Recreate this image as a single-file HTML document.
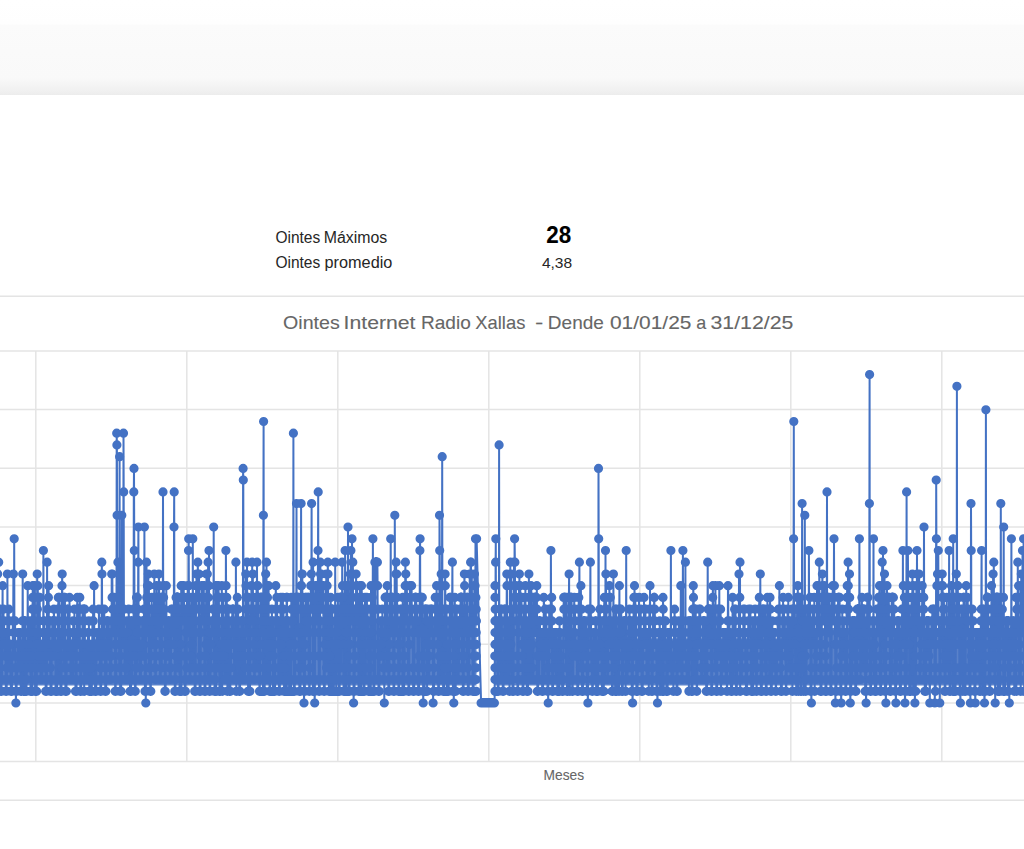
<!DOCTYPE html>
<html><head><meta charset="utf-8"><style>
html,body{margin:0;padding:0;background:#fff;width:1024px;height:849px;overflow:hidden}
svg{display:block}
text{font-family:"Liberation Sans",sans-serif}
</style></head><body>
<svg width="1024" height="849" viewBox="0 0 1024 849">
<defs><linearGradient id="hg" x1="0" y1="0" x2="0" y2="1">
<stop offset="0" stop-color="#ffffff"/><stop offset="0.25" stop-color="#fefefe"/><stop offset="0.27" stop-color="#fbfbfb"/><stop offset="0.82" stop-color="#f9f9f9"/><stop offset="0.97" stop-color="#efefef"/><stop offset="1" stop-color="#ececec"/>
</linearGradient></defs>
<rect x="0" y="0" width="1024" height="95" fill="url(#hg)"/>
<text x="275.4" y="242.8" font-size="15.6" font-weight="normal" fill="#262626" textLength="44.87" lengthAdjust="spacingAndGlyphs">Ointes</text><text x="323.78" y="242.8" font-size="15.6" font-weight="normal" fill="#262626" textLength="63.52" lengthAdjust="spacingAndGlyphs">Máximos</text><text x="275.4" y="268.4" font-size="15.6" font-weight="normal" fill="#262626" textLength="44.87" lengthAdjust="spacingAndGlyphs">Ointes</text><text x="324.56" y="268.4" font-size="15.6" font-weight="normal" fill="#262626" textLength="67.8" lengthAdjust="spacingAndGlyphs">promedio</text><text x="546.29" y="242.7" font-size="24.6" font-weight="bold" fill="#000000" stroke="#000000" stroke-width="0.1" textLength="24.94" lengthAdjust="spacingAndGlyphs">28</text><text x="541.9" y="267.9" font-size="15.5" font-weight="normal" fill="#262626" textLength="30.24" lengthAdjust="spacingAndGlyphs">4,38</text>
<g stroke="#e4e4e4" stroke-width="1.5" fill="none">
<line x1="0" y1="296.3" x2="1024" y2="296.3"/><line x1="0" y1="800.2" x2="1024" y2="800.2"/>
<line x1="0" y1="351.0" x2="1024" y2="351.0"/><line x1="0" y1="409.6" x2="1024" y2="409.6"/><line x1="0" y1="468.3" x2="1024" y2="468.3"/><line x1="0" y1="527.0" x2="1024" y2="527.0"/><line x1="0" y1="585.6" x2="1024" y2="585.6"/><line x1="0" y1="644.2" x2="1024" y2="644.2"/><line x1="0" y1="702.9" x2="1024" y2="702.9"/><line x1="0" y1="761.5" x2="1024" y2="761.5"/><line x1="35.8" y1="351" x2="35.8" y2="761.6"/><line x1="186.8" y1="351" x2="186.8" y2="761.6"/><line x1="337.8" y1="351" x2="337.8" y2="761.6"/><line x1="488.8" y1="351" x2="488.8" y2="761.6"/><line x1="639.8" y1="351" x2="639.8" y2="761.6"/><line x1="790.8" y1="351" x2="790.8" y2="761.6"/><line x1="941.8" y1="351" x2="941.8" y2="761.6"/>
</g>
<text x="283.02" y="329.3" font-size="18.2" font-weight="normal" fill="#666666" stroke="#666666" stroke-width="0.1" textLength="56.7" lengthAdjust="spacingAndGlyphs">Ointes</text><text x="343.57" y="329.3" font-size="18.2" font-weight="normal" fill="#666666" stroke="#666666" stroke-width="0.1" textLength="71.93" lengthAdjust="spacingAndGlyphs">Internet</text><text x="420.95" y="329.3" font-size="18.2" font-weight="normal" fill="#666666" stroke="#666666" stroke-width="0.1" textLength="49.8" lengthAdjust="spacingAndGlyphs">Radio</text><text x="475.29" y="329.3" font-size="18.2" font-weight="normal" fill="#666666" stroke="#666666" stroke-width="0.1" textLength="50.06" lengthAdjust="spacingAndGlyphs">Xallas</text><text x="535.12" y="329.3" font-size="18.2" font-weight="normal" fill="#666666" stroke="#666666" stroke-width="0.1" textLength="8.34" lengthAdjust="spacingAndGlyphs">-</text><text x="547.86" y="329.3" font-size="18.2" font-weight="normal" fill="#666666" stroke="#666666" stroke-width="0.1" textLength="55.98" lengthAdjust="spacingAndGlyphs">Dende</text><text x="609.95" y="329.3" font-size="18.2" font-weight="normal" fill="#666666" stroke="#666666" stroke-width="0.1" textLength="81.47" lengthAdjust="spacingAndGlyphs">01/01/25</text><text x="696.31" y="329.3" font-size="18.2" font-weight="normal" fill="#666666" stroke="#666666" stroke-width="0.1" textLength="10.01" lengthAdjust="spacingAndGlyphs">a</text><text x="710.53" y="329.3" font-size="18.2" font-weight="normal" fill="#666666" stroke="#666666" stroke-width="0.1" textLength="82.8" lengthAdjust="spacingAndGlyphs">31/12/25</text><text x="543.56" y="779.7" font-size="14.6" font-weight="normal" fill="#666666" stroke="#666666" stroke-width="0.1" textLength="40.53" lengthAdjust="spacingAndGlyphs">Meses</text>
<g>
<polygon fill="#5a82ca" points="-5.0,639.7 -1.0,639.7 3.0,639.7 7.0,639.7 11.0,639.7 15.0,639.7 19.0,639.7 23.0,639.7 27.0,639.7 31.0,639.7 35.0,639.7 39.0,639.7 43.0,639.7 47.0,639.7 51.0,639.7 55.0,639.7 59.0,639.7 63.0,639.7 67.0,639.7 71.0,639.7 75.0,639.7 79.0,639.7 83.0,639.7 87.0,639.7 91.0,639.7 95.0,639.7 99.0,635.3 103.0,630.9 107.0,626.5 111.0,623.2 115.0,623.2 119.0,623.2 123.0,623.2 127.0,623.2 131.0,623.2 135.0,623.2 139.0,623.2 143.0,623.2 147.0,623.2 151.0,623.2 155.0,623.2 159.0,623.2 163.0,623.2 167.0,623.2 171.0,623.2 175.0,623.2 179.0,623.2 183.0,623.2 187.0,623.2 191.0,623.2 195.0,623.2 199.0,623.2 203.0,623.2 207.0,623.2 211.0,623.2 215.0,623.2 219.0,623.2 223.0,623.2 227.0,623.2 231.0,623.2 235.0,623.2 239.0,623.2 243.0,623.2 247.0,623.2 251.0,623.2 255.0,623.2 259.0,623.2 263.0,623.2 267.0,623.2 271.0,623.2 275.0,623.2 279.0,623.2 283.0,623.2 287.0,623.2 291.0,623.2 295.0,623.2 299.0,623.2 303.0,621.8 307.0,620.0 311.0,618.5 315.0,618.5 319.0,618.5 323.0,618.5 327.0,618.5 331.0,618.5 335.0,618.5 339.0,618.5 343.0,618.5 347.0,618.5 351.0,618.5 355.0,618.5 359.0,618.5 363.0,618.5 367.0,618.5 371.0,618.5 375.0,618.5 379.0,618.5 383.0,618.5 387.0,618.5 391.0,618.5 395.0,618.5 399.0,618.5 403.0,618.5 407.0,618.5 411.0,618.5 415.0,618.5 419.0,620.4 423.0,622.3 427.0,623.2 431.0,623.2 435.0,623.2 439.0,623.2 443.0,623.2 447.0,623.2 451.0,623.2 455.0,623.2 459.0,623.2 463.0,623.2 467.0,623.2 471.0,623.2 475.0,623.2 476.5,623.2 476.5,685.4 -5.0,685.4"/><polygon fill="#5a82ca" points="495.0,620.9 499.0,620.9 503.0,620.9 507.0,620.9 511.0,620.9 515.0,620.9 519.0,620.9 523.0,620.9 527.0,620.9 531.0,628.4 535.0,638.5 539.0,638.5 543.0,638.5 547.0,638.5 551.0,638.5 555.0,638.5 559.0,636.5 563.0,633.9 567.0,632.6 571.0,632.6 575.0,632.6 579.0,632.6 583.0,632.6 587.0,632.6 591.0,632.6 595.0,632.6 599.0,632.6 603.0,632.6 607.0,632.6 611.0,632.6 615.0,632.6 619.0,635.0 623.0,637.3 627.0,638.5 631.0,638.5 635.0,638.5 639.0,638.5 643.0,638.5 647.0,638.5 651.0,638.5 655.0,638.5 659.0,638.5 663.0,638.5 667.0,638.5 671.0,638.5 675.0,638.5 679.0,638.5 683.0,638.5 687.0,638.5 691.0,638.5 695.0,638.5 699.0,638.5 703.0,638.5 707.0,638.5 711.0,638.5 715.0,638.5 719.0,638.5 723.0,638.5 727.0,638.5 731.0,638.5 735.0,638.5 739.0,638.5 743.0,638.5 747.0,638.5 751.0,638.5 755.0,638.5 759.0,638.5 763.0,638.5 767.0,638.5 771.0,638.5 775.0,638.5 779.0,638.5 783.0,638.5 787.0,638.5 791.0,634.0 795.0,627.9 799.0,627.9 803.0,627.9 807.0,627.9 811.0,627.9 815.0,627.9 819.0,627.9 823.0,627.9 827.0,627.9 831.0,627.9 835.0,627.9 839.0,627.9 843.0,627.9 847.0,627.9 851.0,627.9 855.0,627.9 859.0,627.9 863.0,627.9 867.0,627.9 871.0,627.9 875.0,627.9 879.0,627.9 883.0,627.9 887.0,627.9 891.0,627.9 895.0,627.9 899.0,627.9 903.0,627.9 907.0,627.9 911.0,627.9 915.0,627.9 919.0,627.9 923.0,627.9 927.0,627.9 931.0,627.9 935.0,627.9 939.0,627.9 943.0,627.9 947.0,627.9 951.0,627.9 955.0,627.9 959.0,627.9 963.0,627.9 967.0,627.9 971.0,627.9 975.0,627.9 979.0,627.9 983.0,627.9 987.0,627.9 991.0,627.9 995.0,627.9 999.0,627.9 1003.0,627.9 1007.0,627.9 1011.0,627.9 1015.0,627.9 1019.0,627.9 1023.0,627.9 1027.0,627.9 1030.0,627.9 1030.0,685.4 495.0,685.4"/>
<polyline fill="none" stroke="#4472c4" stroke-width="2.0" stroke-linejoin="round" points="-4.0,691.3 -3.8,691.3 -3.6,691.3 -3.4,691.3 -3.2,691.3 -3.0,656.1 -2.8,644.4 -2.6,632.6 -2.3,574.0 -2.1,644.4 -1.9,620.9 -1.7,632.6 -1.5,644.4 -1.3,562.2 -1.1,609.2 -0.9,620.9 -0.7,620.9 -0.5,620.9 -0.3,609.2 -0.1,667.8 0.1,609.2 0.3,609.2 0.6,632.6 0.8,656.1 1.0,691.3 1.2,679.5 1.4,691.3 1.6,679.5 1.8,679.5 2.0,679.5 2.2,644.4 2.4,620.9 2.6,585.7 2.8,644.4 3.0,644.4 3.2,644.4 3.5,609.2 3.7,632.6 3.9,632.6 4.1,620.9 4.3,644.4 4.5,656.1 4.7,632.6 4.9,632.6 5.1,644.4 5.3,656.1 5.5,632.6 5.7,679.5 5.9,691.3 6.1,691.3 6.3,691.3 6.6,691.3 6.8,679.5 7.0,667.8 7.2,667.8 7.4,574.0 7.6,632.6 7.8,644.4 8.0,644.4 8.2,667.8 8.4,620.9 8.6,644.4 8.8,609.2 9.0,667.8 9.2,620.9 9.5,667.8 9.7,644.4 9.9,656.1 10.1,644.4 10.3,656.1 10.5,667.8 10.7,679.5 10.9,691.3 11.1,691.3 11.3,691.3 11.5,691.3 11.7,691.3 11.9,691.3 12.1,667.8 12.4,656.1 12.6,656.1 12.8,620.9 13.0,620.9 13.2,620.9 13.4,574.0 13.6,620.9 13.8,656.1 14.0,632.6 14.2,538.8 14.4,620.9 14.6,632.6 14.8,656.1 15.0,620.9 15.2,632.6 15.5,667.8 15.7,667.8 15.9,703.0 16.1,691.3 16.3,679.5 16.5,691.3 16.7,679.5 16.9,679.5 17.1,679.5 17.3,667.8 17.5,667.8 17.7,656.1 17.9,667.8 18.1,632.6 18.4,667.8 18.6,667.8 18.8,667.8 19.0,656.1 19.2,632.6 19.4,644.4 19.6,656.1 19.8,667.8 20.0,656.1 20.2,632.6 20.4,656.1 20.6,679.5 20.8,691.3 21.0,679.5 21.2,679.5 21.5,691.3 21.7,679.5 21.9,679.5 22.1,644.4 22.3,644.4 22.5,620.9 22.7,574.0 22.9,632.6 23.1,656.1 23.3,620.9 23.5,691.3 23.7,644.4 23.9,644.4 24.1,620.9 24.4,632.6 24.6,620.9 24.8,656.1 25.0,691.3 25.2,620.9 25.4,632.6 25.6,667.8 25.8,691.3 26.0,691.3 26.2,679.5 26.4,691.3 26.6,679.5 26.8,667.8 27.0,656.1 27.3,667.8 27.5,656.1 27.7,585.7 27.9,620.9 28.1,620.9 28.3,632.6 28.5,632.6 28.7,656.1 28.9,656.1 29.1,667.8 29.3,667.8 29.5,632.6 29.7,644.4 29.9,667.8 30.1,620.9 30.4,656.1 30.6,691.3 30.8,691.3 31.0,691.3 31.2,691.3 31.4,691.3 31.6,691.3 31.8,656.1 32.0,620.9 32.2,609.2 32.4,691.3 32.6,597.4 32.8,585.7 33.0,609.2 33.3,585.7 33.5,585.7 33.7,597.4 33.9,585.7 34.1,609.2 34.3,620.9 34.5,667.8 34.7,597.4 34.9,585.7 35.1,691.3 35.3,632.6 35.5,679.5 35.7,691.3 35.9,691.3 36.2,679.5 36.4,679.5 36.6,691.3 36.8,679.5 37.0,644.4 37.2,574.0 37.4,609.2 37.6,644.4 37.8,585.7 38.0,632.6 38.2,656.1 38.4,632.6 38.6,597.4 38.8,667.8 39.0,620.9 39.3,632.6 39.5,632.6 39.7,597.4 39.9,632.6 40.1,644.4 40.3,644.4 40.5,679.5 40.7,679.5 40.9,679.5 41.1,667.8 41.3,679.5 41.5,667.8 41.7,656.1 41.9,656.1 42.2,644.4 42.4,679.5 42.6,656.1 42.8,632.6 43.0,656.1 43.2,644.4 43.4,550.5 43.6,632.6 43.8,620.9 44.0,620.9 44.2,667.8 44.4,620.9 44.6,632.6 44.8,644.4 45.1,632.6 45.3,644.4 45.5,667.8 45.7,691.3 45.9,691.3 46.1,691.3 46.3,691.3 46.5,691.3 46.7,656.1 46.9,679.5 47.1,562.2 47.3,644.4 47.5,656.1 47.7,609.2 47.9,632.6 48.2,632.6 48.4,597.4 48.6,585.7 48.8,620.9 49.0,632.6 49.2,656.1 49.4,620.9 49.6,656.1 49.8,620.9 50.0,656.1 50.2,667.8 50.4,667.8 50.6,691.3 50.8,691.3 51.1,691.3 51.3,679.5 51.5,691.3 51.7,656.1 51.9,656.1 52.1,632.6 52.3,620.9 52.5,656.1 52.7,644.4 52.9,644.4 53.1,620.9 53.3,644.4 53.5,632.6 53.7,620.9 53.9,609.2 54.2,620.9 54.4,656.1 54.6,632.6 54.8,632.6 55.0,620.9 55.2,644.4 55.4,644.4 55.6,691.3 55.8,691.3 56.0,691.3 56.2,679.5 56.4,691.3 56.6,679.5 56.8,644.4 57.1,691.3 57.3,632.6 57.5,632.6 57.7,620.9 57.9,609.2 58.1,632.6 58.3,597.4 58.5,609.2 58.7,679.5 58.9,644.4 59.1,644.4 59.3,609.2 59.5,597.4 59.7,632.6 60.0,632.6 60.2,644.4 60.4,679.5 60.6,691.3 60.8,691.3 61.0,679.5 61.2,679.5 61.4,691.3 61.6,667.8 61.8,656.1 62.0,585.7 62.2,574.0 62.4,620.9 62.6,632.6 62.8,644.4 63.1,632.6 63.3,644.4 63.5,632.6 63.7,644.4 63.9,597.4 64.1,667.8 64.3,632.6 64.5,656.1 64.7,656.1 64.9,597.4 65.1,620.9 65.3,679.5 65.5,691.3 65.7,691.3 66.0,691.3 66.2,679.5 66.4,691.3 66.6,667.8 66.8,644.4 67.0,644.4 67.2,656.1 67.4,644.4 67.6,609.2 67.8,609.2 68.0,609.2 68.2,644.4 68.4,656.1 68.6,656.1 68.9,644.4 69.1,644.4 69.3,644.4 69.5,597.4 69.7,632.6 69.9,632.6 70.1,644.4 70.3,656.1 70.5,667.8 70.7,679.5 70.9,679.5 71.1,679.5 71.3,667.8 71.5,667.8 71.7,644.4 72.0,656.1 72.2,644.4 72.4,644.4 72.6,632.6 72.8,656.1 73.0,679.5 73.2,620.9 73.4,644.4 73.6,656.1 73.8,656.1 74.0,632.6 74.2,644.4 74.4,609.2 74.6,632.6 74.9,632.6 75.1,644.4 75.3,667.8 75.5,691.3 75.7,691.3 75.9,679.5 76.1,691.3 76.3,679.5 76.5,691.3 76.7,656.1 76.9,632.6 77.1,609.2 77.3,597.4 77.5,609.2 77.8,620.9 78.0,620.9 78.2,644.4 78.4,609.2 78.6,620.9 78.8,632.6 79.0,609.2 79.2,644.4 79.4,632.6 79.6,609.2 79.8,597.4 80.0,656.1 80.2,667.8 80.4,691.3 80.6,691.3 80.9,691.3 81.1,691.3 81.3,679.5 81.5,667.8 81.7,656.1 81.9,644.4 82.1,667.8 82.3,644.4 82.5,609.2 82.7,632.6 82.9,620.9 83.1,620.9 83.3,620.9 83.5,609.2 83.8,620.9 84.0,632.6 84.2,691.3 84.4,609.2 84.6,620.9 84.8,609.2 85.0,656.1 85.2,679.5 85.4,667.8 85.6,667.8 85.8,679.5 86.0,679.5 86.2,679.5 86.4,667.8 86.6,644.4 86.9,667.8 87.1,667.8 87.3,644.4 87.5,644.4 87.7,656.1 87.9,632.6 88.1,667.8 88.3,679.5 88.5,632.6 88.7,656.1 88.9,620.9 89.1,656.1 89.3,691.3 89.5,691.3 89.8,644.4 90.0,644.4 90.2,656.1 90.4,691.3 90.6,691.3 90.8,691.3 91.0,691.3 91.2,691.3 91.4,667.8 91.6,656.1 91.8,691.3 92.0,656.1 92.2,644.4 92.4,620.9 92.7,620.9 92.9,679.5 93.1,609.2 93.3,620.9 93.5,644.4 93.7,644.4 93.9,632.6 94.1,585.7 94.3,632.6 94.5,632.6 94.7,644.4 94.9,656.1 95.1,691.3 95.3,679.5 95.5,679.5 95.8,679.5 96.0,691.3 96.2,691.3 96.4,656.1 96.6,656.1 96.8,656.1 97.0,632.6 97.2,656.1 97.4,644.4 97.6,644.4 97.8,644.4 98.0,656.1 98.2,656.1 98.4,644.4 98.7,656.1 98.9,609.2 99.1,609.2 99.3,644.4 99.5,656.1 99.7,632.6 99.9,656.1 100.1,667.8 100.3,679.5 100.5,691.3 100.7,691.3 100.9,691.3 101.1,691.3 101.3,667.8 101.6,667.8 101.8,562.2 102.0,574.0 102.2,656.1 102.4,609.2 102.6,644.4 102.8,620.9 103.0,620.9 103.2,632.6 103.4,644.4 103.6,632.6 103.8,656.1 104.0,656.1 104.2,609.2 104.4,620.9 104.7,656.1 104.9,656.1 105.1,667.8 105.3,691.3 105.5,691.3 105.7,679.5 105.9,691.3 106.1,691.3 106.3,679.5 106.5,667.8 106.7,620.9 106.9,644.4 107.1,632.6 107.3,620.9 107.6,644.4 107.8,644.4 108.0,632.6 108.2,620.9 108.4,644.4 108.6,656.1 108.8,644.4 109.0,632.6 109.2,632.6 109.4,632.6 109.6,644.4 109.8,656.1 110.0,679.5 110.2,667.8 110.5,679.5 110.7,679.5 110.9,667.8 111.1,667.8 111.3,656.1 111.5,656.1 111.7,574.0 111.9,620.9 112.1,597.4 112.3,574.0 112.5,597.4 112.7,609.2 112.9,632.6 113.1,620.9 113.3,632.6 113.6,620.9 113.8,620.9 114.0,620.9 114.2,597.4 114.4,632.6 114.6,609.2 114.8,632.6 115.0,644.4 115.2,691.3 115.4,691.3 115.6,691.3 115.8,679.5 116.0,679.5 116.2,679.5 116.5,609.2 116.7,433.2 116.9,444.9 117.1,515.3 117.3,632.6 117.5,609.2 117.7,632.6 117.9,562.2 118.1,632.6 118.3,620.9 118.5,597.4 118.7,620.9 118.9,620.9 119.1,644.4 119.3,667.8 119.6,456.7 119.8,644.4 120.0,656.1 120.2,691.3 120.4,691.3 120.6,691.3 120.8,679.5 121.0,691.3 121.2,691.3 121.4,632.6 121.6,632.6 121.8,515.3 122.0,644.4 122.2,620.9 122.5,644.4 122.7,644.4 122.9,632.6 123.1,644.4 123.3,609.2 123.5,433.2 123.7,491.9 123.9,609.2 124.1,620.9 124.3,644.4 124.5,667.8 124.7,632.6 124.9,667.8 125.1,679.5 125.4,679.5 125.6,667.8 125.8,679.5 126.0,667.8 126.2,667.8 126.4,667.8 126.6,632.6 126.8,656.1 127.0,620.9 127.2,632.6 127.4,644.4 127.6,632.6 127.8,644.4 128.0,656.1 128.2,679.5 128.5,644.4 128.7,609.2 128.9,620.9 129.1,620.9 129.3,656.1 129.5,620.9 129.7,656.1 129.9,679.5 130.1,691.3 130.3,679.5 130.5,679.5 130.7,691.3 130.9,691.3 131.1,679.5 131.4,644.4 131.6,620.9 131.8,620.9 132.0,656.1 132.2,656.1 132.4,679.5 132.6,644.4 132.8,644.4 133.0,644.4 133.2,656.1 133.4,656.1 133.6,609.2 133.8,491.9 134.0,468.4 134.3,550.5 134.5,620.9 134.7,656.1 134.9,644.4 135.1,691.3 135.3,691.3 135.5,691.3 135.7,679.5 135.9,679.5 136.1,667.8 136.3,644.4 136.5,597.4 136.7,597.4 136.9,632.6 137.1,597.4 137.4,597.4 137.6,667.8 137.8,609.2 138.0,632.6 138.2,562.2 138.4,527.0 138.6,620.9 138.8,632.6 139.0,620.9 139.2,632.6 139.4,620.9 139.6,644.4 139.8,656.1 140.0,679.5 140.3,667.8 140.5,667.8 140.7,667.8 140.9,679.5 141.1,656.1 141.3,644.4 141.5,644.4 141.7,656.1 141.9,656.1 142.1,656.1 142.3,632.6 142.5,620.9 142.7,644.4 142.9,632.6 143.2,620.9 143.4,632.6 143.6,632.6 143.8,620.9 144.0,609.2 144.2,656.1 144.4,527.0 144.6,632.6 144.8,679.5 145.0,691.3 145.2,679.5 145.4,691.3 145.6,679.5 145.8,703.0 146.0,632.6 146.3,620.9 146.5,562.2 146.7,597.4 146.9,632.6 147.1,632.6 147.3,597.4 147.5,585.7 147.7,585.7 147.9,609.2 148.1,620.9 148.3,574.0 148.5,597.4 148.7,667.8 148.9,585.7 149.2,632.6 149.4,609.2 149.6,632.6 149.8,667.8 150.0,679.5 150.2,679.5 150.4,691.3 150.6,691.3 150.8,691.3 151.0,644.4 151.2,656.1 151.4,644.4 151.6,597.4 151.8,632.6 152.0,632.6 152.3,632.6 152.5,632.6 152.7,609.2 152.9,620.9 153.1,632.6 153.3,609.2 153.5,644.4 153.7,632.6 153.9,597.4 154.1,644.4 154.3,574.0 154.5,667.8 154.7,644.4 154.9,667.8 155.2,667.8 155.4,679.5 155.6,679.5 155.8,679.5 156.0,656.1 156.2,644.4 156.4,597.4 156.6,585.7 156.8,609.2 157.0,597.4 157.2,620.9 157.4,620.9 157.6,632.6 157.8,597.4 158.1,620.9 158.3,620.9 158.5,632.6 158.7,632.6 158.9,574.0 159.1,585.7 159.3,597.4 159.5,632.6 159.7,656.1 159.9,679.5 160.1,679.5 160.3,679.5 160.5,679.5 160.7,679.5 160.9,644.4 161.2,609.2 161.4,597.4 161.6,620.9 161.8,667.8 162.0,597.4 162.2,609.2 162.4,597.4 162.6,609.2 162.8,609.2 163.0,491.9 163.2,585.7 163.4,620.9 163.6,597.4 163.8,585.7 164.1,620.9 164.3,609.2 164.5,620.9 164.7,632.6 164.9,691.3 165.1,679.5 165.3,691.3 165.5,691.3 165.7,679.5 165.9,656.1 166.1,656.1 166.3,585.7 166.5,632.6 166.7,656.1 167.0,632.6 167.2,656.1 167.4,656.1 167.6,656.1 167.8,620.9 168.0,656.1 168.2,644.4 168.4,632.6 168.6,620.9 168.8,656.1 169.0,656.1 169.2,620.9 169.4,667.8 169.6,667.8 169.8,679.5 170.1,679.5 170.3,679.5 170.5,679.5 170.7,679.5 170.9,667.8 171.1,632.6 171.3,620.9 171.5,609.2 171.7,620.9 171.9,632.6 172.1,620.9 172.3,609.2 172.5,632.6 172.7,609.2 173.0,620.9 173.2,620.9 173.4,620.9 173.6,644.4 173.8,644.4 174.0,527.0 174.2,491.9 174.4,632.6 174.6,632.6 174.8,691.3 175.0,691.3 175.2,679.5 175.4,691.3 175.6,679.5 175.9,656.1 176.1,597.4 176.3,609.2 176.5,620.9 176.7,597.4 176.9,597.4 177.1,620.9 177.3,632.6 177.5,597.4 177.7,609.2 177.9,667.8 178.1,597.4 178.3,597.4 178.5,609.2 178.7,597.4 179.0,609.2 179.2,620.9 179.4,656.1 179.6,691.3 179.8,691.3 180.0,691.3 180.2,691.3 180.4,691.3 180.6,691.3 180.8,656.1 181.0,644.4 181.2,585.7 181.4,691.3 181.6,597.4 181.9,585.7 182.1,609.2 182.3,585.7 182.5,597.4 182.7,585.7 182.9,620.9 183.1,620.9 183.3,620.9 183.5,597.4 183.7,585.7 183.9,609.2 184.1,597.4 184.3,620.9 184.5,656.1 184.8,691.3 185.0,691.3 185.2,679.5 185.4,691.3 185.6,679.5 185.8,679.5 186.0,632.6 186.2,609.2 186.4,620.9 186.6,632.6 186.8,667.8 187.0,597.4 187.2,632.6 187.4,609.2 187.6,609.2 187.9,585.7 188.1,632.6 188.3,632.6 188.5,550.5 188.7,538.8 188.9,585.7 189.1,609.2 189.3,620.9 189.5,656.1 189.7,679.5 189.9,667.8 190.1,679.5 190.3,679.5 190.5,667.8 190.8,656.1 191.0,632.6 191.2,597.4 191.4,644.4 191.6,620.9 191.8,609.2 192.0,609.2 192.2,644.4 192.4,632.6 192.6,667.8 192.8,538.8 193.0,620.9 193.2,632.6 193.4,632.6 193.6,609.2 193.9,632.6 194.1,597.4 194.3,632.6 194.5,632.6 194.7,691.3 194.9,691.3 195.1,691.3 195.3,679.5 195.5,691.3 195.7,667.8 195.9,632.6 196.1,585.7 196.3,609.2 196.5,574.0 196.8,597.4 197.0,597.4 197.2,585.7 197.4,585.7 197.6,597.4 197.8,562.2 198.0,574.0 198.2,574.0 198.4,597.4 198.6,585.7 198.8,667.8 199.0,574.0 199.2,620.9 199.4,667.8 199.7,691.3 199.9,679.5 200.1,691.3 200.3,691.3 200.5,691.3 200.7,656.1 200.9,632.6 201.1,620.9 201.3,609.2 201.5,585.7 201.7,585.7 201.9,609.2 202.1,597.4 202.3,620.9 202.5,620.9 202.8,597.4 203.0,585.7 203.2,609.2 203.4,585.7 203.6,585.7 203.8,585.7 204.0,609.2 204.2,620.9 204.4,667.8 204.6,691.3 204.8,679.5 205.0,679.5 205.2,691.3 205.4,691.3 205.7,656.1 205.9,644.4 206.1,597.4 206.3,609.2 206.5,574.0 206.7,574.0 206.9,620.9 207.1,609.2 207.3,574.0 207.5,585.7 207.7,597.4 207.9,679.5 208.1,562.2 208.3,597.4 208.6,585.7 208.8,585.7 209.0,550.5 209.2,632.6 209.4,644.4 209.6,691.3 209.8,691.3 210.0,679.5 210.2,691.3 210.4,679.5 210.6,667.8 210.8,632.6 211.0,644.4 211.2,667.8 211.4,632.6 211.7,632.6 211.9,620.9 212.1,620.9 212.3,632.6 212.5,632.6 212.7,620.9 212.9,609.2 213.1,632.6 213.3,609.2 213.5,609.2 213.7,527.0 213.9,632.6 214.1,667.8 214.3,656.1 214.6,691.3 214.8,691.3 215.0,679.5 215.2,691.3 215.4,691.3 215.6,656.1 215.8,620.9 216.0,585.7 216.2,691.3 216.4,609.2 216.6,585.7 216.8,597.4 217.0,597.4 217.2,609.2 217.5,667.8 217.7,597.4 217.9,585.7 218.1,609.2 218.3,620.9 218.5,585.7 218.7,597.4 218.9,597.4 219.1,632.6 219.3,667.8 219.5,691.3 219.7,691.3 219.9,691.3 220.1,691.3 220.3,691.3 220.6,656.1 220.8,644.4 221.0,644.4 221.2,644.4 221.4,644.4 221.6,632.6 221.8,585.7 222.0,609.2 222.2,691.3 222.4,644.4 222.6,609.2 222.8,609.2 223.0,632.6 223.2,597.4 223.5,620.9 223.7,620.9 223.9,644.4 224.1,656.1 224.3,656.1 224.5,679.5 224.7,679.5 224.9,679.5 225.1,667.8 225.3,679.5 225.5,667.8 225.7,644.4 225.9,550.5 226.1,585.7 226.3,609.2 226.6,620.9 226.8,597.4 227.0,679.5 227.2,632.6 227.4,691.3 227.6,609.2 227.8,609.2 228.0,644.4 228.2,620.9 228.4,644.4 228.6,609.2 228.8,620.9 229.0,644.4 229.2,667.8 229.5,691.3 229.7,679.5 229.9,691.3 230.1,691.3 230.3,691.3 230.5,667.8 230.7,632.6 230.9,667.8 231.1,644.4 231.3,644.4 231.5,632.6 231.7,644.4 231.9,620.9 232.1,620.9 232.4,609.2 232.6,620.9 232.8,620.9 233.0,609.2 233.2,620.9 233.4,609.2 233.6,620.9 233.8,632.6 234.0,644.4 234.2,679.5 234.4,679.5 234.6,679.5 234.8,679.5 235.0,679.5 235.2,679.5 235.5,644.4 235.7,656.1 235.9,562.2 236.1,632.6 236.3,691.3 236.5,644.4 236.7,679.5 236.9,609.2 237.1,656.1 237.3,597.4 237.5,644.4 237.7,656.1 237.9,632.6 238.1,609.2 238.4,644.4 238.6,620.9 238.8,679.5 239.0,656.1 239.2,679.5 239.4,691.3 239.6,691.3 239.8,691.3 240.0,691.3 240.2,679.5 240.4,679.5 240.6,644.4 240.8,632.6 241.0,644.4 241.3,632.6 241.5,620.9 241.7,632.6 241.9,620.9 242.1,620.9 242.3,679.5 242.5,656.1 242.7,632.6 242.9,620.9 243.1,468.4 243.3,480.1 243.5,632.6 243.7,644.4 243.9,656.1 244.1,679.5 244.4,679.5 244.6,679.5 244.8,679.5 245.0,667.8 245.2,679.5 245.4,632.6 245.6,644.4 245.8,574.0 246.0,585.7 246.2,632.6 246.4,597.4 246.6,609.2 246.8,609.2 247.0,562.2 247.3,609.2 247.5,609.2 247.7,597.4 247.9,609.2 248.1,691.3 248.3,597.4 248.5,597.4 248.7,609.2 248.9,656.1 249.1,644.4 249.3,679.5 249.5,679.5 249.7,691.3 249.9,691.3 250.2,679.5 250.4,656.1 250.6,632.6 250.8,609.2 251.0,609.2 251.2,620.9 251.4,585.7 251.6,620.9 251.8,609.2 252.0,620.9 252.2,562.2 252.4,620.9 252.6,609.2 252.8,574.0 253.0,597.4 253.3,667.8 253.5,597.4 253.7,620.9 253.9,644.4 254.1,667.8 254.3,679.5 254.5,679.5 254.7,679.5 254.9,667.8 255.1,667.8 255.3,667.8 255.5,632.6 255.7,609.2 255.9,667.8 256.2,597.4 256.4,597.4 256.6,585.7 256.8,597.4 257.0,562.2 257.2,609.2 257.4,667.8 257.6,597.4 257.8,585.7 258.0,609.2 258.2,597.4 258.4,597.4 258.6,667.8 258.8,656.1 259.0,656.1 259.3,679.5 259.5,691.3 259.7,691.3 259.9,679.5 260.1,679.5 260.3,656.1 260.5,644.4 260.7,597.4 260.9,597.4 261.1,597.4 261.3,609.2 261.5,609.2 261.7,597.4 261.9,632.6 262.2,620.9 262.4,620.9 262.6,620.9 262.8,597.4 263.0,691.3 263.2,609.2 263.4,515.3 263.6,421.5 263.8,632.6 264.0,667.8 264.2,679.5 264.4,691.3 264.6,691.3 264.8,679.5 265.1,679.5 265.3,679.5 265.5,644.4 265.7,574.0 265.9,597.4 266.1,620.9 266.3,597.4 266.5,562.2 266.7,679.5 266.9,585.7 267.1,597.4 267.3,632.6 267.5,597.4 267.7,609.2 267.9,585.7 268.2,679.5 268.4,632.6 268.6,585.7 268.8,644.4 269.0,667.8 269.2,679.5 269.4,679.5 269.6,691.3 269.8,691.3 270.0,691.3 270.2,632.6 270.4,656.1 270.6,632.6 270.8,620.9 271.1,620.9 271.3,656.1 271.5,620.9 271.7,632.6 271.9,609.2 272.1,644.4 272.3,620.9 272.5,644.4 272.7,644.4 272.9,691.3 273.1,620.9 273.3,656.1 273.5,632.6 273.7,632.6 274.0,679.5 274.2,691.3 274.4,679.5 274.6,691.3 274.8,691.3 275.0,691.3 275.2,667.8 275.4,620.9 275.6,620.9 275.8,585.7 276.0,609.2 276.2,620.9 276.4,620.9 276.6,620.9 276.8,597.4 277.1,597.4 277.3,632.6 277.5,620.9 277.7,620.9 277.9,620.9 278.1,620.9 278.3,679.5 278.5,620.9 278.7,644.4 278.9,667.8 279.1,691.3 279.3,691.3 279.5,679.5 279.7,691.3 280.0,679.5 280.2,667.8 280.4,644.4 280.6,609.2 280.8,597.4 281.0,609.2 281.2,632.6 281.4,644.4 281.6,632.6 281.8,644.4 282.0,679.5 282.2,620.9 282.4,620.9 282.6,620.9 282.9,597.4 283.1,632.6 283.3,632.6 283.5,609.2 283.7,656.1 283.9,667.8 284.1,691.3 284.3,691.3 284.5,679.5 284.7,691.3 284.9,691.3 285.1,667.8 285.3,632.6 285.5,620.9 285.7,632.6 286.0,632.6 286.2,620.9 286.4,620.9 286.6,597.4 286.8,691.3 287.0,597.4 287.2,620.9 287.4,620.9 287.6,632.6 287.8,632.6 288.0,632.6 288.2,620.9 288.4,679.5 288.6,632.6 288.9,656.1 289.1,691.3 289.3,679.5 289.5,691.3 289.7,691.3 289.9,691.3 290.1,644.4 290.3,656.1 290.5,632.6 290.7,632.6 290.9,632.6 291.1,691.3 291.3,597.4 291.5,609.2 291.7,620.9 292.0,644.4 292.2,620.9 292.4,620.9 292.6,609.2 292.8,632.6 293.0,620.9 293.2,632.6 293.4,433.2 293.6,656.1 293.8,679.5 294.0,691.3 294.2,691.3 294.4,691.3 294.6,691.3 294.9,679.5 295.1,679.5 295.3,644.4 295.5,597.4 295.7,609.2 295.9,632.6 296.1,597.4 296.3,609.2 296.5,503.6 296.7,632.6 296.9,597.4 297.1,597.4 297.3,632.6 297.5,632.6 297.8,609.2 298.0,597.4 298.2,632.6 298.4,597.4 298.6,656.1 298.8,667.8 299.0,679.5 299.2,679.5 299.4,691.3 299.6,691.3 299.8,679.5 300.0,656.1 300.2,632.6 300.4,691.3 300.6,609.2 300.9,585.7 301.1,503.6 301.3,667.8 301.5,585.7 301.7,585.7 301.9,574.0 302.1,609.2 302.3,574.0 302.5,667.8 302.7,609.2 302.9,597.4 303.1,609.2 303.3,609.2 303.5,609.2 303.8,644.4 304.0,703.0 304.2,691.3 304.4,679.5 304.6,691.3 304.8,691.3 305.0,656.1 305.2,644.4 305.4,597.4 305.6,609.2 305.8,620.9 306.0,632.6 306.2,597.4 306.4,620.9 306.7,632.6 306.9,620.9 307.1,609.2 307.3,609.2 307.5,609.2 307.7,609.2 307.9,609.2 308.1,597.4 308.3,597.4 308.5,632.6 308.7,656.1 308.9,679.5 309.1,679.5 309.3,691.3 309.5,691.3 309.8,679.5 310.0,667.8 310.2,620.9 310.4,609.2 310.6,609.2 310.8,585.7 311.0,585.7 311.2,609.2 311.4,574.0 311.6,503.6 311.8,609.2 312.0,585.7 312.2,585.7 312.4,597.4 312.7,585.7 312.9,691.3 313.1,562.2 313.3,597.4 313.5,632.6 313.7,656.1 313.9,691.3 314.1,691.3 314.3,691.3 314.5,691.3 314.7,703.0 314.9,679.5 315.1,620.9 315.3,597.4 315.6,585.7 315.8,620.9 316.0,597.4 316.2,585.7 316.4,620.9 316.6,620.9 316.8,597.4 317.0,609.2 317.2,585.7 317.4,609.2 317.6,620.9 317.8,585.7 318.0,550.5 318.2,491.9 318.4,632.6 318.7,656.1 318.9,679.5 319.1,691.3 319.3,691.3 319.5,679.5 319.7,691.3 319.9,656.1 320.1,620.9 320.3,562.2 320.5,574.0 320.7,597.4 320.9,609.2 321.1,585.7 321.3,574.0 321.6,574.0 321.8,609.2 322.0,585.7 322.2,609.2 322.4,597.4 322.6,585.7 322.8,597.4 323.0,609.2 323.2,585.7 323.4,632.6 323.6,656.1 323.8,679.5 324.0,691.3 324.2,679.5 324.4,691.3 324.7,691.3 324.9,644.4 325.1,644.4 325.3,609.2 325.5,609.2 325.7,585.7 325.9,609.2 326.1,609.2 326.3,574.0 326.5,667.8 326.7,574.0 326.9,620.9 327.1,585.7 327.3,597.4 327.6,597.4 327.8,562.2 328.0,574.0 328.2,609.2 328.4,632.6 328.6,679.5 328.8,679.5 329.0,691.3 329.2,691.3 329.4,691.3 329.6,679.5 329.8,667.8 330.0,656.1 330.2,609.2 330.5,620.9 330.7,597.4 330.9,620.9 331.1,632.6 331.3,644.4 331.5,691.3 331.7,609.2 331.9,667.8 332.1,609.2 332.3,609.2 332.5,644.4 332.7,644.4 332.9,632.6 333.1,691.3 333.3,667.8 333.6,679.5 333.8,691.3 334.0,679.5 334.2,679.5 334.4,679.5 334.6,679.5 334.8,679.5 335.0,644.4 335.2,562.2 335.4,620.9 335.6,632.6 335.8,632.6 336.0,620.9 336.2,691.3 336.5,632.6 336.7,632.6 336.9,609.2 337.1,632.6 337.3,644.4 337.5,644.4 337.7,667.8 337.9,597.4 338.1,620.9 338.3,644.4 338.5,667.8 338.7,679.5 338.9,691.3 339.1,679.5 339.4,691.3 339.6,691.3 339.8,667.8 340.0,620.9 340.2,597.4 340.4,609.2 340.6,597.4 340.8,597.4 341.0,620.9 341.2,667.8 341.4,609.2 341.6,620.9 341.8,620.9 342.0,620.9 342.2,562.2 342.5,585.7 342.7,597.4 342.9,597.4 343.1,609.2 343.3,644.4 343.5,679.5 343.7,691.3 343.9,691.3 344.1,691.3 344.3,691.3 344.5,691.3 344.7,667.8 344.9,620.9 345.1,550.5 345.4,632.6 345.6,620.9 345.8,632.6 346.0,691.3 346.2,632.6 346.4,691.3 346.6,632.6 346.8,585.7 347.0,609.2 347.2,620.9 347.4,632.6 347.6,609.2 347.8,609.2 348.0,527.0 348.3,644.4 348.5,656.1 348.7,691.3 348.9,691.3 349.1,691.3 349.3,679.5 349.5,691.3 349.7,667.8 349.9,644.4 350.1,609.2 350.3,574.0 350.5,574.0 350.7,585.7 350.9,550.5 351.1,585.7 351.4,620.9 351.6,609.2 351.8,620.9 352.0,538.8 352.2,574.0 352.4,620.9 352.6,597.4 352.8,562.2 353.0,574.0 353.2,632.6 353.4,632.6 353.6,703.0 353.8,691.3 354.0,679.5 354.3,691.3 354.5,691.3 354.7,667.8 354.9,656.1 355.1,609.2 355.3,609.2 355.5,609.2 355.7,609.2 355.9,632.6 356.1,574.0 356.3,609.2 356.5,585.7 356.7,620.9 356.9,620.9 357.1,585.7 357.4,609.2 357.6,609.2 357.8,597.4 358.0,620.9 358.2,632.6 358.4,667.8 358.6,691.3 358.8,691.3 359.0,679.5 359.2,691.3 359.4,691.3 359.6,644.4 359.8,609.2 360.0,585.7 360.3,620.9 360.5,585.7 360.7,585.7 360.9,620.9 361.1,609.2 361.3,691.3 361.5,585.7 361.7,585.7 361.9,609.2 362.1,597.4 362.3,609.2 362.5,620.9 362.7,620.9 362.9,609.2 363.2,620.9 363.4,679.5 363.6,679.5 363.8,691.3 364.0,691.3 364.2,691.3 364.4,691.3 364.6,667.8 364.8,644.4 365.0,597.4 365.2,609.2 365.4,667.8 365.6,632.6 365.8,679.5 366.0,609.2 366.3,620.9 366.5,620.9 366.7,620.9 366.9,597.4 367.1,620.9 367.3,609.2 367.5,609.2 367.7,620.9 367.9,620.9 368.1,644.4 368.3,667.8 368.5,691.3 368.7,691.3 368.9,691.3 369.2,679.5 369.4,691.3 369.6,656.1 369.8,656.1 370.0,632.6 370.2,667.8 370.4,609.2 370.6,644.4 370.8,691.3 371.0,585.7 371.2,597.4 371.4,632.6 371.6,620.9 371.8,644.4 372.1,609.2 372.3,597.4 372.5,620.9 372.7,597.4 372.9,538.8 373.1,644.4 373.3,656.1 373.5,691.3 373.7,691.3 373.9,691.3 374.1,679.5 374.3,691.3 374.5,644.4 374.7,609.2 374.9,562.2 375.2,679.5 375.4,585.7 375.6,562.2 375.8,585.7 376.0,562.2 376.2,562.2 376.4,585.7 376.6,562.2 376.8,562.2 377.0,585.7 377.2,585.7 377.4,562.2 377.6,585.7 377.8,679.5 378.1,609.2 378.3,644.4 378.5,691.3 378.7,691.3 378.9,691.3 379.1,679.5 379.3,691.3 379.5,679.5 379.7,644.4 379.9,644.4 380.1,644.4 380.3,656.1 380.5,632.6 380.7,620.9 381.0,632.6 381.2,656.1 381.4,656.1 381.6,644.4 381.8,620.9 382.0,620.9 382.2,632.6 382.4,609.2 382.6,632.6 382.8,632.6 383.0,632.6 383.2,667.8 383.4,667.8 383.6,679.5 383.8,679.5 384.1,667.8 384.3,703.0 384.5,667.8 384.7,632.6 384.9,620.9 385.1,597.4 385.3,597.4 385.5,620.9 385.7,632.6 385.9,597.4 386.1,609.2 386.3,620.9 386.5,620.9 386.7,667.8 387.0,597.4 387.2,585.7 387.4,609.2 387.6,609.2 387.8,632.6 388.0,632.6 388.2,656.1 388.4,691.3 388.6,691.3 388.8,679.5 389.0,679.5 389.2,691.3 389.4,667.8 389.6,644.4 389.9,597.4 390.1,597.4 390.3,620.9 390.5,632.6 390.7,538.8 390.9,597.4 391.1,609.2 391.3,620.9 391.5,632.6 391.7,609.2 391.9,632.6 392.1,597.4 392.3,597.4 392.5,620.9 392.7,620.9 393.0,620.9 393.2,656.1 393.4,679.5 393.6,691.3 393.8,679.5 394.0,679.5 394.2,691.3 394.4,667.8 394.6,632.6 394.8,515.3 395.0,609.2 395.2,632.6 395.4,597.4 395.6,620.9 395.9,574.0 396.1,562.2 396.3,609.2 396.5,597.4 396.7,574.0 396.9,632.6 397.1,597.4 397.3,632.6 397.5,609.2 397.7,620.9 397.9,632.6 398.1,644.4 398.3,679.5 398.5,691.3 398.7,679.5 399.0,691.3 399.2,679.5 399.4,656.1 399.6,644.4 399.8,667.8 400.0,620.9 400.2,620.9 400.4,632.6 400.6,609.2 400.8,620.9 401.0,632.6 401.2,620.9 401.4,609.2 401.6,620.9 401.9,620.9 402.1,632.6 402.3,620.9 402.5,691.3 402.7,597.4 402.9,620.9 403.1,679.5 403.3,691.3 403.5,691.3 403.7,691.3 403.9,691.3 404.1,691.3 404.3,656.1 404.5,667.8 404.8,597.4 405.0,620.9 405.2,585.7 405.4,562.2 405.6,620.9 405.8,574.0 406.0,597.4 406.2,609.2 406.4,597.4 406.6,620.9 406.8,585.7 407.0,597.4 407.2,597.4 407.4,620.9 407.6,632.6 407.9,620.9 408.1,679.5 408.3,679.5 408.5,691.3 408.7,691.3 408.9,679.5 409.1,691.3 409.3,644.4 409.5,609.2 409.7,620.9 409.9,585.7 410.1,620.9 410.3,597.4 410.5,597.4 410.8,585.7 411.0,585.7 411.2,620.9 411.4,620.9 411.6,585.7 411.8,609.2 412.0,609.2 412.2,620.9 412.4,620.9 412.6,620.9 412.8,632.6 413.0,667.8 413.2,691.3 413.4,679.5 413.7,691.3 413.9,691.3 414.1,691.3 414.3,679.5 414.5,620.9 414.7,609.2 414.9,620.9 415.1,597.4 415.3,620.9 415.5,597.4 415.7,597.4 415.9,620.9 416.1,609.2 416.3,597.4 416.5,632.6 416.8,632.6 417.0,609.2 417.2,620.9 417.4,620.9 417.6,667.8 417.8,632.6 418.0,667.8 418.2,691.3 418.4,679.5 418.6,691.3 418.8,691.3 419.0,691.3 419.2,656.1 419.4,632.6 419.7,597.4 419.9,550.5 420.1,538.8 420.3,609.2 420.5,609.2 420.7,597.4 420.9,632.6 421.1,632.6 421.3,597.4 421.5,597.4 421.7,667.8 421.9,609.2 422.1,632.6 422.3,597.4 422.6,597.4 422.8,632.6 423.0,667.8 423.2,703.0 423.4,691.3 423.6,679.5 423.8,679.5 424.0,691.3 424.2,656.1 424.4,632.6 424.6,691.3 424.8,609.2 425.0,632.6 425.2,632.6 425.4,609.2 425.7,644.4 425.9,644.4 426.1,632.6 426.3,609.2 426.5,644.4 426.7,620.9 426.9,632.6 427.1,691.3 427.3,620.9 427.5,609.2 427.7,656.1 427.9,667.8 428.1,679.5 428.3,667.8 428.6,679.5 428.8,679.5 429.0,679.5 429.2,656.1 429.4,620.9 429.6,644.4 429.8,632.6 430.0,609.2 430.2,609.2 430.4,620.9 430.6,620.9 430.8,632.6 431.0,620.9 431.2,620.9 431.4,609.2 431.7,620.9 431.9,609.2 432.1,620.9 432.3,632.6 432.5,632.6 432.7,644.4 432.9,632.6 433.1,703.0 433.3,679.5 433.5,679.5 433.7,691.3 433.9,691.3 434.1,667.8 434.3,632.6 434.6,620.9 434.8,632.6 435.0,632.6 435.2,597.4 435.4,632.6 435.6,609.2 435.8,620.9 436.0,620.9 436.2,609.2 436.4,620.9 436.6,585.7 436.8,609.2 437.0,632.6 437.2,597.4 437.5,620.9 437.7,632.6 437.9,644.4 438.1,679.5 438.3,691.3 438.5,691.3 438.7,679.5 438.9,691.3 439.1,656.1 439.3,632.6 439.5,515.3 439.7,550.5 439.9,585.7 440.1,609.2 440.3,620.9 440.6,620.9 440.8,620.9 441.0,679.5 441.2,574.0 441.4,620.9 441.6,609.2 441.8,585.7 442.0,585.7 442.2,456.7 442.4,609.2 442.6,632.6 442.8,656.1 443.0,679.5 443.2,691.3 443.5,691.3 443.7,679.5 443.9,691.3 444.1,679.5 444.3,667.8 444.5,609.2 444.7,656.1 444.9,656.1 445.1,574.0 445.3,585.7 445.5,632.6 445.7,609.2 445.9,620.9 446.1,656.1 446.4,679.5 446.6,609.2 446.8,691.3 447.0,656.1 447.2,644.4 447.4,656.1 447.6,644.4 447.8,667.8 448.0,679.5 448.2,691.3 448.4,691.3 448.6,691.3 448.8,679.5 449.0,656.1 449.2,644.4 449.5,620.9 449.7,620.9 449.9,597.4 450.1,679.5 450.3,632.6 450.5,609.2 450.7,597.4 450.9,620.9 451.1,609.2 451.3,620.9 451.5,620.9 451.7,609.2 451.9,632.6 452.1,609.2 452.4,562.2 452.6,632.6 452.8,667.8 453.0,691.3 453.2,691.3 453.4,679.5 453.6,679.5 453.8,703.0 454.0,656.1 454.2,644.4 454.4,620.9 454.6,620.9 454.8,597.4 455.0,620.9 455.3,620.9 455.5,632.6 455.7,691.3 455.9,620.9 456.1,609.2 456.3,632.6 456.5,667.8 456.7,609.2 456.9,632.6 457.1,644.4 457.3,620.9 457.5,620.9 457.7,667.8 457.9,679.5 458.1,679.5 458.4,679.5 458.6,679.5 458.8,667.8 459.0,667.8 459.2,620.9 459.4,620.9 459.6,620.9 459.8,620.9 460.0,609.2 460.2,632.6 460.4,620.9 460.6,597.4 460.8,597.4 461.0,609.2 461.3,597.4 461.5,597.4 461.7,609.2 461.9,667.8 462.1,597.4 462.3,620.9 462.5,644.4 462.7,656.1 462.9,691.3 463.1,679.5 463.3,679.5 463.5,691.3 463.7,679.5 463.9,656.1 464.1,632.6 464.4,574.0 464.6,585.7 464.8,609.2 465.0,609.2 465.2,632.6 465.4,620.9 465.6,609.2 465.8,609.2 466.0,609.2 466.2,609.2 466.4,632.6 466.6,667.8 466.8,620.9 467.0,597.4 467.3,597.4 467.5,632.6 467.7,667.8 467.9,691.3 468.1,691.3 468.3,691.3 468.5,691.3 468.7,691.3 468.9,679.5 469.1,644.4 469.3,632.6 469.5,632.6 469.7,574.0 469.9,632.6 470.2,620.9 470.4,620.9 470.6,562.2 470.8,632.6 471.0,562.2 471.2,632.6 471.4,632.6 471.6,632.6 471.8,574.0 472.0,597.4 472.2,609.2 472.4,632.6 472.6,644.4 472.8,691.3 473.0,679.5 473.3,679.5 473.5,691.3 473.7,679.5 473.9,656.1 474.1,620.9 474.3,585.7 474.5,574.0 474.7,620.9 474.9,609.2 475.1,585.7 475.3,609.2 475.5,538.8 475.7,609.2 475.9,597.4 476.2,609.2 476.4,620.9 476.6,538.8 481.1,703.0 481.3,703.0 481.5,703.0 481.7,703.0 481.9,703.0 482.2,703.0 482.4,703.0 482.6,703.0 482.8,703.0 483.0,703.0 483.2,703.0 483.4,703.0 483.6,703.0 483.8,703.0 484.0,703.0 484.2,703.0 484.4,703.0 484.6,703.0 484.8,703.0 485.1,703.0 485.3,703.0 485.5,703.0 485.7,703.0 485.9,703.0 486.1,703.0 486.3,703.0 486.5,703.0 486.7,703.0 486.9,703.0 487.1,703.0 487.3,703.0 487.5,703.0 487.7,703.0 488.0,703.0 488.2,703.0 488.4,703.0 488.6,703.0 488.8,703.0 489.0,703.0 489.2,703.0 489.4,703.0 489.6,703.0 489.8,703.0 490.0,703.0 490.2,703.0 490.4,703.0 490.6,703.0 490.8,703.0 491.1,703.0 491.3,703.0 491.5,703.0 491.7,703.0 491.9,703.0 492.1,703.0 492.3,703.0 492.5,703.0 492.7,703.0 492.9,703.0 493.1,703.0 493.3,703.0 493.5,703.0 493.7,703.0 494.0,703.0 494.2,703.0 494.4,703.0 494.6,703.0 494.8,656.1 495.0,656.1 495.2,609.2 495.4,644.4 495.6,562.2 495.8,538.8 496.0,656.1 496.2,620.9 496.4,620.9 496.6,620.9 496.8,632.6 497.1,620.9 497.3,644.4 497.5,667.8 497.7,679.5 497.9,691.3 498.1,679.5 498.3,691.3 498.5,691.3 498.7,667.8 498.9,667.8 499.1,444.9 499.3,632.6 499.5,644.4 499.7,620.9 500.0,644.4 500.2,644.4 500.4,656.1 500.6,609.2 500.8,632.6 501.0,679.5 501.2,644.4 501.4,609.2 501.6,644.4 501.8,620.9 502.0,679.5 502.2,679.5 502.4,656.1 502.6,679.5 502.9,691.3 503.1,691.3 503.3,691.3 503.5,691.3 503.7,667.8 503.9,667.8 504.1,644.4 504.3,667.8 504.5,609.2 504.7,609.2 504.9,609.2 505.1,632.6 505.3,679.5 505.5,620.9 505.7,644.4 506.0,609.2 506.2,620.9 506.4,644.4 506.6,620.9 506.8,574.0 507.0,585.7 507.2,656.1 507.4,679.5 507.6,667.8 507.8,679.5 508.0,667.8 508.2,679.5 508.4,667.8 508.6,656.1 508.9,632.6 509.1,620.9 509.3,632.6 509.5,691.3 509.7,644.4 509.9,574.0 510.1,620.9 510.3,562.2 510.5,632.6 510.7,609.2 510.9,644.4 511.1,667.8 511.3,574.0 511.5,632.6 511.8,679.5 512.0,609.2 512.2,656.1 512.4,632.6 512.6,691.3 512.8,691.3 513.0,691.3 513.2,691.3 513.4,691.3 513.6,667.8 513.8,609.2 514.0,562.2 514.2,585.7 514.4,597.4 514.6,538.8 514.9,562.2 515.1,597.4 515.3,597.4 515.5,609.2 515.7,597.4 515.9,585.7 516.1,609.2 516.3,620.9 516.5,597.4 516.7,609.2 516.9,620.9 517.1,620.9 517.3,656.1 517.5,691.3 517.8,691.3 518.0,691.3 518.2,679.5 518.4,679.5 518.6,667.8 518.8,632.6 519.0,585.7 519.2,609.2 519.4,574.0 519.6,620.9 519.8,597.4 520.0,585.7 520.2,585.7 520.4,597.4 520.7,609.2 520.9,597.4 521.1,609.2 521.3,609.2 521.5,597.4 521.7,620.9 521.9,620.9 522.1,644.4 522.3,656.1 522.5,679.5 522.7,691.3 522.9,679.5 523.1,679.5 523.3,691.3 523.5,667.8 523.8,644.4 524.0,609.2 524.2,632.6 524.4,620.9 524.6,597.4 524.8,620.9 525.0,620.9 525.2,679.5 525.4,585.7 525.6,620.9 525.8,609.2 526.0,620.9 526.2,632.6 526.4,632.6 526.7,620.9 526.9,691.3 527.1,644.4 527.3,667.8 527.5,691.3 527.7,679.5 527.9,691.3 528.1,679.5 528.3,679.5 528.5,667.8 528.7,644.4 528.9,574.0 529.1,632.6 529.3,597.4 529.5,597.4 529.8,620.9 530.0,597.4 530.2,597.4 530.4,679.5 530.6,609.2 530.8,597.4 531.0,585.7 531.2,585.7 531.4,597.4 531.6,620.9 531.8,597.4 532.0,644.4 532.2,667.8 532.4,679.5 532.7,679.5 532.9,679.5 533.1,679.5 533.3,679.5 533.5,679.5 533.7,632.6 533.9,597.4 534.1,632.6 534.3,620.9 534.5,632.6 534.7,632.6 534.9,632.6 535.1,597.4 535.3,620.9 535.6,597.4 535.8,609.2 536.0,632.6 536.2,597.4 536.4,597.4 536.6,679.5 536.8,585.7 537.0,609.2 537.2,656.1 537.4,691.3 537.6,691.3 537.8,691.3 538.0,691.3 538.2,679.5 538.4,679.5 538.7,656.1 538.9,620.9 539.1,656.1 539.3,679.5 539.5,656.1 539.7,620.9 539.9,620.9 540.1,632.6 540.3,644.4 540.5,644.4 540.7,632.6 540.9,644.4 541.1,644.4 541.3,656.1 541.6,656.1 541.8,632.6 542.0,644.4 542.2,691.3 542.4,691.3 542.6,679.5 542.8,691.3 543.0,691.3 543.2,679.5 543.4,656.1 543.6,632.6 543.8,597.4 544.0,597.4 544.2,632.6 544.5,620.9 544.7,679.5 544.9,620.9 545.1,609.2 545.3,609.2 545.5,644.4 545.7,609.2 545.9,620.9 546.1,632.6 546.3,644.4 546.5,620.9 546.7,644.4 546.9,656.1 547.1,667.8 547.3,679.5 547.6,691.3 547.8,691.3 548.0,691.3 548.2,703.0 548.4,667.8 548.6,632.6 548.8,644.4 549.0,644.4 549.2,609.2 549.4,679.5 549.6,632.6 549.8,632.6 550.0,632.6 550.2,620.9 550.5,609.2 550.7,644.4 550.9,550.5 551.1,609.2 551.3,632.6 551.5,609.2 551.7,597.4 551.9,620.9 552.1,667.8 552.3,691.3 552.5,679.5 552.7,679.5 552.9,691.3 553.1,679.5 553.4,679.5 553.6,667.8 553.8,632.6 554.0,667.8 554.2,656.1 554.4,644.4 554.6,644.4 554.8,656.1 555.0,632.6 555.2,632.6 555.4,632.6 555.6,632.6 555.8,656.1 556.0,679.5 556.2,644.4 556.5,667.8 556.7,632.6 556.9,656.1 557.1,656.1 557.3,691.3 557.5,691.3 557.7,691.3 557.9,691.3 558.1,691.3 558.3,679.5 558.5,679.5 558.7,691.3 558.9,632.6 559.1,632.6 559.4,691.3 559.6,620.9 559.8,679.5 560.0,644.4 560.2,632.6 560.4,656.1 560.6,656.1 560.8,679.5 561.0,644.4 561.2,656.1 561.4,667.8 561.6,667.8 561.8,679.5 562.0,667.8 562.2,691.3 562.5,679.5 562.7,679.5 562.9,691.3 563.1,691.3 563.3,679.5 563.5,644.4 563.7,597.4 563.9,609.2 564.1,609.2 564.3,609.2 564.5,597.4 564.7,597.4 564.9,597.4 565.1,632.6 565.4,609.2 565.6,609.2 565.8,609.2 566.0,667.8 566.2,620.9 566.4,597.4 566.6,632.6 566.8,632.6 567.0,691.3 567.2,691.3 567.4,691.3 567.6,691.3 567.8,691.3 568.0,691.3 568.3,667.8 568.5,644.4 568.7,597.4 568.9,597.4 569.1,574.0 569.3,632.6 569.5,620.9 569.7,609.2 569.9,691.3 570.1,632.6 570.3,597.4 570.5,609.2 570.7,679.5 570.9,597.4 571.1,632.6 571.4,679.5 571.6,597.4 571.8,632.6 572.0,632.6 572.2,691.3 572.4,679.5 572.6,691.3 572.8,679.5 573.0,679.5 573.2,679.5 573.4,656.1 573.6,644.4 573.8,644.4 574.0,609.2 574.3,597.4 574.5,644.4 574.7,632.6 574.9,609.2 575.1,620.9 575.3,656.1 575.5,644.4 575.7,644.4 575.9,644.4 576.1,644.4 576.3,644.4 576.5,644.4 576.7,656.1 576.9,679.5 577.2,679.5 577.4,691.3 577.6,691.3 577.8,679.5 578.0,691.3 578.2,679.5 578.4,656.1 578.6,609.2 578.8,597.4 579.0,644.4 579.2,597.4 579.4,562.2 579.6,620.9 579.8,644.4 580.0,644.4 580.3,644.4 580.5,667.8 580.7,620.9 580.9,585.7 581.1,644.4 581.3,632.6 581.5,609.2 581.7,632.6 581.9,644.4 582.1,691.3 582.3,691.3 582.5,691.3 582.7,679.5 582.9,691.3 583.2,667.8 583.4,644.4 583.6,620.9 583.8,632.6 584.0,620.9 584.2,656.1 584.4,644.4 584.6,620.9 584.8,632.6 585.0,656.1 585.2,656.1 585.4,644.4 585.6,656.1 585.8,644.4 586.1,620.9 586.3,644.4 586.5,632.6 586.7,667.8 586.9,691.3 587.1,691.3 587.3,691.3 587.5,691.3 587.7,691.3 587.9,703.0 588.1,667.8 588.3,656.1 588.5,609.2 588.7,620.9 588.9,620.9 589.2,620.9 589.4,620.9 589.6,620.9 589.8,632.6 590.0,609.2 590.2,609.2 590.4,562.2 590.6,644.4 590.8,609.2 591.0,620.9 591.2,644.4 591.4,667.8 591.6,644.4 591.8,656.1 592.1,679.5 592.3,691.3 592.5,679.5 592.7,691.3 592.9,679.5 593.1,679.5 593.3,656.1 593.5,632.6 593.7,656.1 593.9,632.6 594.1,656.1 594.3,656.1 594.5,644.4 594.7,632.6 595.0,632.6 595.2,679.5 595.4,620.9 595.6,620.9 595.8,656.1 596.0,620.9 596.2,691.3 596.4,644.4 596.6,667.8 596.8,656.1 597.0,691.3 597.2,691.3 597.4,691.3 597.6,691.3 597.8,691.3 598.1,679.5 598.3,644.4 598.5,468.4 598.7,538.8 598.9,656.1 599.1,620.9 599.3,656.1 599.5,644.4 599.7,620.9 599.9,609.2 600.1,644.4 600.3,632.6 600.5,632.6 600.7,632.6 601.0,620.9 601.2,632.6 601.4,656.1 601.6,667.8 601.8,656.1 602.0,691.3 602.2,691.3 602.4,679.5 602.6,691.3 602.8,679.5 603.0,679.5 603.2,620.9 603.4,632.6 603.6,620.9 603.8,691.3 604.1,620.9 604.3,597.4 604.5,620.9 604.7,597.4 604.9,632.6 605.1,609.2 605.3,679.5 605.5,550.5 605.7,667.8 605.9,574.0 606.1,597.4 606.3,632.6 606.5,609.2 606.7,656.1 607.0,667.8 607.2,667.8 607.4,667.8 607.6,679.5 607.8,679.5 608.0,667.8 608.2,644.4 608.4,620.9 608.6,644.4 608.8,644.4 609.0,620.9 609.2,632.6 609.4,585.7 609.6,620.9 609.9,597.4 610.1,644.4 610.3,597.4 610.5,597.4 610.7,632.6 610.9,632.6 611.1,656.1 611.3,620.9 611.5,656.1 611.7,656.1 611.9,679.5 612.1,691.3 612.3,679.5 612.5,679.5 612.7,691.3 613.0,656.1 613.2,656.1 613.4,574.0 613.6,632.6 613.8,644.4 614.0,620.9 614.2,667.8 614.4,632.6 614.6,656.1 614.8,620.9 615.0,679.5 615.2,691.3 615.4,644.4 615.6,609.2 615.9,656.1 616.1,609.2 616.3,679.5 616.5,656.1 616.7,679.5 616.9,691.3 617.1,679.5 617.3,679.5 617.5,679.5 617.7,679.5 617.9,679.5 618.1,632.6 618.3,620.9 618.5,644.4 618.8,609.2 619.0,691.3 619.2,632.6 619.4,585.7 619.6,644.4 619.8,632.6 620.0,632.6 620.2,632.6 620.4,620.9 620.6,609.2 620.8,609.2 621.0,632.6 621.2,609.2 621.4,632.6 621.6,656.1 621.9,691.3 622.1,679.5 622.3,679.5 622.5,691.3 622.7,691.3 622.9,679.5 623.1,667.8 623.3,620.9 623.5,644.4 623.7,644.4 623.9,656.1 624.1,644.4 624.3,644.4 624.5,620.9 624.8,620.9 625.0,644.4 625.2,620.9 625.4,620.9 625.6,691.3 625.8,620.9 626.0,644.4 626.2,550.5 626.4,667.8 626.6,679.5 626.8,667.8 627.0,667.8 627.2,667.8 627.4,679.5 627.7,667.8 627.9,644.4 628.1,644.4 628.3,644.4 628.5,620.9 628.7,656.1 628.9,620.9 629.1,667.8 629.3,620.9 629.5,609.2 629.7,620.9 629.9,656.1 630.1,656.1 630.3,620.9 630.5,656.1 630.8,644.4 631.0,632.6 631.2,620.9 631.4,656.1 631.6,667.8 631.8,691.3 632.0,679.5 632.2,691.3 632.4,691.3 632.6,703.0 632.8,679.5 633.0,656.1 633.2,620.9 633.4,620.9 633.7,609.2 633.9,597.4 634.1,632.6 634.3,656.1 634.5,585.7 634.7,632.6 634.9,644.4 635.1,644.4 635.3,597.4 635.5,632.6 635.7,644.4 635.9,609.2 636.1,644.4 636.3,679.5 636.5,691.3 636.8,691.3 637.0,691.3 637.2,691.3 637.4,691.3 637.6,691.3 637.8,667.8 638.0,656.1 638.2,656.1 638.4,644.4 638.6,620.9 638.8,667.8 639.0,597.4 639.2,667.8 639.4,656.1 639.7,656.1 639.9,656.1 640.1,656.1 640.3,632.6 640.5,620.9 640.7,609.2 640.9,656.1 641.1,632.6 641.3,656.1 641.5,667.8 641.7,691.3 641.9,691.3 642.1,691.3 642.3,691.3 642.6,691.3 642.8,679.5 643.0,656.1 643.2,632.6 643.4,632.6 643.6,632.6 643.8,632.6 644.0,597.4 644.2,644.4 644.4,620.9 644.6,620.9 644.8,632.6 645.0,632.6 645.2,609.2 645.4,609.2 645.7,632.6 645.9,644.4 646.1,632.6 646.3,632.6 646.5,656.1 646.7,679.5 646.9,679.5 647.1,679.5 647.3,679.5 647.5,679.5 647.7,667.8 647.9,632.6 648.1,679.5 648.3,632.6 648.6,644.4 648.8,691.3 649.0,620.9 649.2,632.6 649.4,609.2 649.6,644.4 649.8,656.1 650.0,585.7 650.2,620.9 650.4,656.1 650.6,632.6 650.8,644.4 651.0,656.1 651.2,644.4 651.5,679.5 651.7,691.3 651.9,691.3 652.1,691.3 652.3,691.3 652.5,691.3 652.7,667.8 652.9,656.1 653.1,609.2 653.3,644.4 653.5,644.4 653.7,620.9 653.9,644.4 654.1,597.4 654.3,597.4 654.6,620.9 654.8,609.2 655.0,632.6 655.2,632.6 655.4,632.6 655.6,632.6 655.8,644.4 656.0,644.4 656.2,644.4 656.4,656.1 656.6,691.3 656.8,691.3 657.0,679.5 657.2,691.3 657.5,703.0 657.7,656.1 657.9,679.5 658.1,679.5 658.3,644.4 658.5,632.6 658.7,667.8 658.9,656.1 659.1,667.8 659.3,632.6 659.5,644.4 659.7,620.9 659.9,632.6 660.1,691.3 660.4,667.8 660.6,632.6 660.8,656.1 661.0,632.6 661.2,667.8 661.4,667.8 661.6,679.5 661.8,679.5 662.0,691.3 662.2,679.5 662.4,679.5 662.6,667.8 662.8,691.3 663.0,597.4 663.2,609.2 663.5,632.6 663.7,691.3 663.9,632.6 664.1,644.4 664.3,644.4 664.5,656.1 664.7,620.9 664.9,644.4 665.1,644.4 665.3,632.6 665.5,620.9 665.7,632.6 665.9,656.1 666.1,644.4 666.4,691.3 666.6,691.3 666.8,691.3 667.0,691.3 667.2,679.5 667.4,691.3 667.6,691.3 667.8,667.8 668.0,632.6 668.2,667.8 668.4,656.1 668.6,656.1 668.8,644.4 669.0,632.6 669.2,656.1 669.5,656.1 669.7,644.4 669.9,644.4 670.1,667.8 670.3,656.1 670.5,667.8 670.7,632.6 670.9,550.5 671.1,667.8 671.3,667.8 671.5,679.5 671.7,679.5 671.9,679.5 672.1,679.5 672.4,679.5 672.6,667.8 672.8,656.1 673.0,656.1 673.2,656.1 673.4,691.3 673.6,656.1 673.8,656.1 674.0,620.9 674.2,667.8 674.4,620.9 674.6,609.2 674.8,632.6 675.0,644.4 675.3,644.4 675.5,656.1 675.7,620.9 675.9,656.1 676.1,644.4 676.3,656.1 676.5,679.5 676.7,691.3 676.9,691.3 677.1,679.5 677.3,691.3 677.5,679.5 677.7,667.8 677.9,656.1 678.1,632.6 678.4,632.6 678.6,644.4 678.8,620.9 679.0,644.4 679.2,632.6 679.4,667.8 679.6,644.4 679.8,644.4 680.0,644.4 680.2,656.1 680.4,644.4 680.6,656.1 680.8,585.7 681.0,667.8 681.3,667.8 681.5,679.5 681.7,679.5 681.9,679.5 682.1,679.5 682.3,667.8 682.5,679.5 682.7,632.6 682.9,550.5 683.1,620.9 683.3,632.6 683.5,644.4 683.7,656.1 683.9,632.6 684.2,656.1 684.4,632.6 684.6,644.4 684.8,632.6 685.0,632.6 685.2,656.1 685.4,562.2 685.6,656.1 685.8,656.1 686.0,667.8 686.2,667.8 686.4,667.8 686.6,667.8 686.8,679.5 687.0,667.8 687.3,667.8 687.5,679.5 687.7,656.1 687.9,679.5 688.1,644.4 688.3,620.9 688.5,644.4 688.7,656.1 688.9,691.3 689.1,620.9 689.3,632.6 689.5,644.4 689.7,656.1 689.9,656.1 690.2,656.1 690.4,632.6 690.6,620.9 690.8,620.9 691.0,632.6 691.2,656.1 691.4,691.3 691.6,691.3 691.8,691.3 692.0,691.3 692.2,691.3 692.4,691.3 692.6,656.1 692.8,609.2 693.1,609.2 693.3,585.7 693.5,597.4 693.7,597.4 693.9,632.6 694.1,632.6 694.3,632.6 694.5,679.5 694.7,609.2 694.9,609.2 695.1,609.2 695.3,632.6 695.5,620.9 695.7,609.2 695.9,632.6 696.2,644.4 696.4,679.5 696.6,679.5 696.8,691.3 697.0,691.3 697.2,679.5 697.4,656.1 697.6,656.1 697.8,620.9 698.0,632.6 698.2,632.6 698.4,620.9 698.6,644.4 698.8,632.6 699.1,644.4 699.3,609.2 699.5,632.6 699.7,632.6 699.9,620.9 700.1,609.2 700.3,620.9 700.5,644.4 700.7,644.4 700.9,644.4 701.1,667.8 701.3,679.5 701.5,679.5 701.7,679.5 701.9,667.8 702.2,679.5 702.4,679.5 702.6,656.1 702.8,620.9 703.0,656.1 703.2,656.1 703.4,632.6 703.6,620.9 703.8,644.4 704.0,644.4 704.2,620.9 704.4,644.4 704.6,656.1 704.8,679.5 705.1,644.4 705.3,656.1 705.5,656.1 705.7,620.9 705.9,644.4 706.1,679.5 706.3,691.3 706.5,691.3 706.7,679.5 706.9,691.3 707.1,679.5 707.3,667.8 707.5,632.6 707.7,562.2 708.0,644.4 708.2,609.2 708.4,609.2 708.6,609.2 708.8,609.2 709.0,644.4 709.2,632.6 709.4,632.6 709.6,632.6 709.8,632.6 710.0,609.2 710.2,632.6 710.4,609.2 710.6,609.2 710.8,656.1 711.1,656.1 711.3,691.3 711.5,691.3 711.7,691.3 711.9,691.3 712.1,691.3 712.3,644.4 712.5,644.4 712.7,597.4 712.9,585.7 713.1,620.9 713.3,632.6 713.5,620.9 713.7,620.9 714.0,609.2 714.2,609.2 714.4,632.6 714.6,667.8 714.8,620.9 715.0,609.2 715.2,609.2 715.4,585.7 715.6,620.9 715.8,609.2 716.0,667.8 716.2,679.5 716.4,691.3 716.6,691.3 716.9,691.3 717.1,691.3 717.3,656.1 717.5,656.1 717.7,632.6 717.9,644.4 718.1,609.2 718.3,609.2 718.5,632.6 718.7,656.1 718.9,632.6 719.1,620.9 719.3,585.7 719.5,656.1 719.7,632.6 720.0,620.9 720.2,656.1 720.4,656.1 720.6,609.2 720.8,644.4 721.0,691.3 721.2,679.5 721.4,667.8 721.6,667.8 721.8,679.5 722.0,667.8 722.2,667.8 722.4,644.4 722.6,667.8 722.9,667.8 723.1,632.6 723.3,644.4 723.5,632.6 723.7,656.1 723.9,656.1 724.1,632.6 724.3,667.8 724.5,667.8 724.7,632.6 724.9,667.8 725.1,644.4 725.3,632.6 725.5,632.6 725.8,679.5 726.0,656.1 726.2,679.5 726.4,679.5 726.6,679.5 726.8,679.5 727.0,691.3 727.2,667.8 727.4,644.4 727.6,632.6 727.8,620.9 728.0,585.7 728.2,585.7 728.4,644.4 728.6,632.6 728.9,632.6 729.1,656.1 729.3,632.6 729.5,620.9 729.7,656.1 729.9,656.1 730.1,679.5 730.3,632.6 730.5,632.6 730.7,667.8 730.9,679.5 731.1,691.3 731.3,679.5 731.5,691.3 731.8,679.5 732.0,691.3 732.2,656.1 732.4,644.4 732.6,597.4 732.8,644.4 733.0,632.6 733.2,644.4 733.4,644.4 733.6,632.6 733.8,679.5 734.0,632.6 734.2,644.4 734.4,632.6 734.6,609.2 734.9,632.6 735.1,620.9 735.3,632.6 735.5,609.2 735.7,632.6 735.9,667.8 736.1,691.3 736.3,691.3 736.5,691.3 736.7,691.3 736.9,679.5 737.1,679.5 737.3,656.1 737.5,656.1 737.8,656.1 738.0,644.4 738.2,632.6 738.4,644.4 738.6,632.6 738.8,632.6 739.0,574.0 739.2,644.4 739.4,656.1 739.6,656.1 739.8,597.4 740.0,562.2 740.2,691.3 740.4,644.4 740.7,656.1 740.9,679.5 741.1,667.8 741.3,679.5 741.5,679.5 741.7,679.5 741.9,667.8 742.1,656.1 742.3,644.4 742.5,632.6 742.7,644.4 742.9,632.6 743.1,644.4 743.3,632.6 743.5,609.2 743.8,620.9 744.0,632.6 744.2,632.6 744.4,632.6 744.6,609.2 744.8,644.4 745.0,644.4 745.2,632.6 745.4,667.8 745.6,656.1 745.8,667.8 746.0,691.3 746.2,679.5 746.4,679.5 746.7,691.3 746.9,691.3 747.1,667.8 747.3,656.1 747.5,644.4 747.7,632.6 747.9,632.6 748.1,632.6 748.3,620.9 748.5,644.4 748.7,632.6 748.9,609.2 749.1,632.6 749.3,620.9 749.6,632.6 749.8,632.6 750.0,620.9 750.2,620.9 750.4,609.2 750.6,632.6 750.8,656.1 751.0,679.5 751.2,679.5 751.4,691.3 751.6,679.5 751.8,691.3 752.0,679.5 752.2,656.1 752.4,644.4 752.7,620.9 752.9,644.4 753.1,691.3 753.3,644.4 753.5,632.6 753.7,632.6 753.9,644.4 754.1,620.9 754.3,667.8 754.5,656.1 754.7,632.6 754.9,656.1 755.1,609.2 755.3,620.9 755.6,667.8 755.8,656.1 756.0,679.5 756.2,679.5 756.4,679.5 756.6,691.3 756.8,679.5 757.0,667.8 757.2,632.6 757.4,644.4 757.6,620.9 757.8,644.4 758.0,644.4 758.2,644.4 758.5,632.6 758.7,620.9 758.9,632.6 759.1,609.2 759.3,597.4 759.5,632.6 759.7,609.2 759.9,644.4 760.1,632.6 760.3,574.0 760.5,632.6 760.7,679.5 760.9,691.3 761.1,679.5 761.3,691.3 761.6,679.5 761.8,691.3 762.0,656.1 762.2,632.6 762.4,609.2 762.6,609.2 762.8,620.9 763.0,609.2 763.2,609.2 763.4,632.6 763.6,632.6 763.8,609.2 764.0,609.2 764.2,632.6 764.5,667.8 764.7,644.4 764.9,644.4 765.1,609.2 765.3,620.9 765.5,656.1 765.7,667.8 765.9,691.3 766.1,691.3 766.3,691.3 766.5,691.3 766.7,679.5 766.9,656.1 767.1,644.4 767.4,597.4 767.6,620.9 767.8,644.4 768.0,620.9 768.2,620.9 768.4,609.2 768.6,609.2 768.8,620.9 769.0,632.6 769.2,679.5 769.4,609.2 769.6,632.6 769.8,620.9 770.0,597.4 770.2,609.2 770.5,632.6 770.7,656.1 770.9,691.3 771.1,691.3 771.3,691.3 771.5,679.5 771.7,691.3 771.9,679.5 772.1,656.1 772.3,620.9 772.5,656.1 772.7,644.4 772.9,632.6 773.1,667.8 773.4,656.1 773.6,656.1 773.8,644.4 774.0,667.8 774.2,644.4 774.4,632.6 774.6,656.1 774.8,632.6 775.0,656.1 775.2,644.4 775.4,679.5 775.6,656.1 775.8,691.3 776.0,691.3 776.2,679.5 776.5,679.5 776.7,679.5 776.9,667.8 777.1,644.4 777.3,644.4 777.5,656.1 777.7,620.9 777.9,656.1 778.1,644.4 778.3,644.4 778.5,609.2 778.7,656.1 778.9,632.6 779.1,644.4 779.4,585.7 779.6,632.6 779.8,609.2 780.0,656.1 780.2,656.1 780.4,667.8 780.6,679.5 780.8,679.5 781.0,691.3 781.2,691.3 781.4,679.5 781.6,691.3 781.8,691.3 782.0,644.4 782.3,620.9 782.5,632.6 782.7,609.2 782.9,644.4 783.1,597.4 783.3,632.6 783.5,609.2 783.7,632.6 783.9,609.2 784.1,620.9 784.3,620.9 784.5,644.4 784.7,620.9 784.9,620.9 785.1,656.1 785.4,632.6 785.6,679.5 785.8,679.5 786.0,691.3 786.2,691.3 786.4,679.5 786.6,679.5 786.8,656.1 787.0,656.1 787.2,620.9 787.4,632.6 787.6,609.2 787.8,656.1 788.0,644.4 788.3,597.4 788.5,656.1 788.7,644.4 788.9,667.8 789.1,620.9 789.3,632.6 789.5,656.1 789.7,632.6 789.9,620.9 790.1,620.9 790.3,644.4 790.5,679.5 790.7,679.5 790.9,679.5 791.2,679.5 791.4,679.5 791.6,679.5 791.8,667.8 792.0,632.6 792.2,609.2 792.4,691.3 792.6,620.9 792.8,667.8 793.0,620.9 793.2,609.2 793.4,609.2 793.6,538.8 793.8,421.5 794.0,609.2 794.3,644.4 794.5,644.4 794.7,609.2 794.9,609.2 795.1,667.8 795.3,644.4 795.5,667.8 795.7,679.5 795.9,679.5 796.1,679.5 796.3,691.3 796.5,691.3 796.7,679.5 796.9,632.6 797.2,597.4 797.4,597.4 797.6,667.8 797.8,585.7 798.0,609.2 798.2,609.2 798.4,691.3 798.6,632.6 798.8,597.4 799.0,597.4 799.2,609.2 799.4,609.2 799.6,667.8 799.8,609.2 800.1,597.4 800.3,632.6 800.5,667.8 800.7,691.3 800.9,691.3 801.1,691.3 801.3,691.3 801.5,691.3 801.7,667.8 801.9,656.1 802.1,503.6 802.3,620.9 802.5,656.1 802.7,609.2 802.9,620.9 803.2,667.8 803.4,644.4 803.6,644.4 803.8,691.3 804.0,632.6 804.2,691.3 804.4,632.6 804.6,620.9 804.8,515.3 805.0,620.9 805.2,632.6 805.4,656.1 805.6,691.3 805.8,679.5 806.1,679.5 806.3,679.5 806.5,679.5 806.7,644.4 806.9,632.6 807.1,609.2 807.3,609.2 807.5,609.2 807.7,620.9 807.9,620.9 808.1,609.2 808.3,632.6 808.5,644.4 808.7,644.4 808.9,550.5 809.2,632.6 809.4,620.9 809.6,620.9 809.8,632.6 810.0,597.4 810.2,632.6 810.4,644.4 810.6,691.3 810.8,679.5 811.0,691.3 811.2,691.3 811.4,703.0 811.6,667.8 811.8,620.9 812.1,632.6 812.3,644.4 812.5,632.6 812.7,609.2 812.9,644.4 813.1,644.4 813.3,644.4 813.5,644.4 813.7,644.4 813.9,620.9 814.1,644.4 814.3,597.4 814.5,632.6 814.7,691.3 815.0,632.6 815.2,644.4 815.4,679.5 815.6,679.5 815.8,679.5 816.0,679.5 816.2,679.5 816.4,679.5 816.6,656.1 816.8,656.1 817.0,585.7 817.2,609.2 817.4,632.6 817.6,597.4 817.8,632.6 818.1,585.7 818.3,620.9 818.5,632.6 818.7,620.9 818.9,620.9 819.1,632.6 819.3,562.2 819.5,609.2 819.7,597.4 819.9,632.6 820.1,667.8 820.3,644.4 820.5,691.3 820.7,679.5 821.0,679.5 821.2,691.3 821.4,691.3 821.6,667.8 821.8,620.9 822.0,597.4 822.2,585.7 822.4,574.0 822.6,597.4 822.8,620.9 823.0,620.9 823.2,609.2 823.4,609.2 823.6,620.9 823.9,620.9 824.1,597.4 824.3,585.7 824.5,585.7 824.7,585.7 824.9,609.2 825.1,644.4 825.3,656.1 825.5,691.3 825.7,691.3 825.9,691.3 826.1,679.5 826.3,691.3 826.5,667.8 826.7,632.6 827.0,491.9 827.2,632.6 827.4,597.4 827.6,609.2 827.8,597.4 828.0,597.4 828.2,609.2 828.4,632.6 828.6,620.9 828.8,609.2 829.0,632.6 829.2,620.9 829.4,597.4 829.6,597.4 829.9,620.9 830.1,620.9 830.3,679.5 830.5,691.3 830.7,691.3 830.9,691.3 831.1,691.3 831.3,691.3 831.5,679.5 831.7,620.9 831.9,609.2 832.1,597.4 832.3,609.2 832.5,620.9 832.8,585.7 833.0,620.9 833.2,597.4 833.4,585.7 833.6,597.4 833.8,597.4 834.0,538.8 834.2,609.2 834.4,585.7 834.6,620.9 834.8,620.9 835.0,644.4 835.2,644.4 835.4,703.0 835.6,679.5 835.9,679.5 836.1,679.5 836.3,691.3 836.5,667.8 836.7,644.4 836.9,620.9 837.1,609.2 837.3,632.6 837.5,609.2 837.7,609.2 837.9,620.9 838.1,597.4 838.3,620.9 838.5,620.9 838.8,597.4 839.0,632.6 839.2,620.9 839.4,632.6 839.6,597.4 839.8,620.9 840.0,632.6 840.2,667.8 840.4,691.3 840.6,691.3 840.8,679.5 841.0,691.3 841.2,703.0 841.4,679.5 841.6,656.1 841.9,656.1 842.1,632.6 842.3,609.2 842.5,644.4 842.7,656.1 842.9,644.4 843.1,632.6 843.3,644.4 843.5,644.4 843.7,632.6 843.9,620.9 844.1,656.1 844.3,656.1 844.5,632.6 844.8,656.1 845.0,656.1 845.2,667.8 845.4,691.3 845.6,679.5 845.8,691.3 846.0,679.5 846.2,691.3 846.4,667.8 846.6,609.2 846.8,609.2 847.0,597.4 847.2,585.7 847.4,679.5 847.7,609.2 847.9,585.7 848.1,562.2 848.3,585.7 848.5,609.2 848.7,585.7 848.9,597.4 849.1,597.4 849.3,620.9 849.5,574.0 849.7,597.4 849.9,644.4 850.1,667.8 850.3,703.0 850.5,691.3 850.8,691.3 851.0,691.3 851.2,691.3 851.4,667.8 851.6,679.5 851.8,620.9 852.0,644.4 852.2,679.5 852.4,679.5 852.6,644.4 852.8,620.9 853.0,644.4 853.2,620.9 853.4,656.1 853.7,620.9 853.9,620.9 854.1,632.6 854.3,644.4 854.5,632.6 854.7,620.9 854.9,656.1 855.1,656.1 855.3,691.3 855.5,691.3 855.7,691.3 855.9,691.3 856.1,691.3 856.3,667.8 856.6,620.9 856.8,620.9 857.0,644.4 857.2,609.2 857.4,679.5 857.6,609.2 857.8,620.9 858.0,609.2 858.2,609.2 858.4,620.9 858.6,609.2 858.8,644.4 859.0,609.2 859.2,644.4 859.4,538.8 859.7,632.6 859.9,644.4 860.1,656.1 860.3,667.8 860.5,679.5 860.7,667.8 860.9,667.8 861.1,667.8 861.3,667.8 861.5,620.9 861.7,609.2 861.9,597.4 862.1,644.4 862.3,609.2 862.6,644.4 862.8,644.4 863.0,609.2 863.2,667.8 863.4,632.6 863.6,620.9 863.8,609.2 864.0,644.4 864.2,632.6 864.4,632.6 864.6,609.2 864.8,632.6 865.0,656.1 865.2,691.3 865.5,691.3 865.7,691.3 865.9,691.3 866.1,703.0 866.3,667.8 866.5,620.9 866.7,667.8 866.9,644.4 867.1,609.2 867.3,597.4 867.5,667.8 867.7,644.4 867.9,597.4 868.1,620.9 868.3,632.6 868.6,609.2 868.8,609.2 869.0,620.9 869.2,620.9 869.4,503.6 869.6,374.6 869.8,632.6 870.0,667.8 870.2,679.5 870.4,691.3 870.6,691.3 870.8,691.3 871.0,691.3 871.2,667.8 871.5,656.1 871.7,644.4 871.9,656.1 872.1,644.4 872.3,620.9 872.5,620.9 872.7,620.9 872.9,656.1 873.1,632.6 873.3,620.9 873.5,538.8 873.7,679.5 873.9,667.8 874.1,644.4 874.3,620.9 874.6,644.4 874.8,667.8 875.0,691.3 875.2,691.3 875.4,691.3 875.6,691.3 875.8,679.5 876.0,691.3 876.2,691.3 876.4,632.6 876.6,632.6 876.8,620.9 877.0,609.2 877.2,620.9 877.5,620.9 877.7,620.9 877.9,632.6 878.1,609.2 878.3,609.2 878.5,597.4 878.7,620.9 878.9,597.4 879.1,632.6 879.3,597.4 879.5,585.7 879.7,656.1 879.9,667.8 880.1,679.5 880.4,691.3 880.6,691.3 880.8,691.3 881.0,691.3 881.2,679.5 881.4,632.6 881.6,585.7 881.8,609.2 882.0,597.4 882.2,562.2 882.4,597.4 882.6,609.2 882.8,620.9 883.0,550.5 883.2,597.4 883.5,667.8 883.7,597.4 883.9,620.9 884.1,667.8 884.3,620.9 884.5,574.0 884.7,644.4 884.9,667.8 885.1,691.3 885.3,691.3 885.5,679.5 885.7,691.3 885.9,703.0 886.1,656.1 886.4,620.9 886.6,597.4 886.8,632.6 887.0,585.7 887.2,620.9 887.4,620.9 887.6,609.2 887.8,632.6 888.0,609.2 888.2,609.2 888.4,609.2 888.6,597.4 888.8,597.4 889.0,620.9 889.3,632.6 889.5,632.6 889.7,620.9 889.9,679.5 890.1,691.3 890.3,679.5 890.5,679.5 890.7,691.3 890.9,679.5 891.1,667.8 891.3,644.4 891.5,620.9 891.7,597.4 891.9,679.5 892.1,597.4 892.4,632.6 892.6,620.9 892.8,597.4 893.0,620.9 893.2,597.4 893.4,597.4 893.6,620.9 893.8,609.2 894.0,609.2 894.2,609.2 894.4,679.5 894.6,644.4 894.8,667.8 895.0,679.5 895.3,691.3 895.5,679.5 895.7,691.3 895.9,703.0 896.1,679.5 896.3,632.6 896.5,644.4 896.7,656.1 896.9,667.8 897.1,620.9 897.3,632.6 897.5,620.9 897.7,656.1 897.9,644.4 898.2,632.6 898.4,620.9 898.6,632.6 898.8,656.1 899.0,656.1 899.2,620.9 899.4,632.6 899.6,667.8 899.8,679.5 900.0,691.3 900.2,679.5 900.4,691.3 900.6,679.5 900.8,691.3 901.0,679.5 901.3,656.1 901.5,620.9 901.7,632.6 901.9,632.6 902.1,609.2 902.3,609.2 902.5,632.6 902.7,632.6 902.9,550.5 903.1,644.4 903.3,585.7 903.5,620.9 903.7,632.6 903.9,620.9 904.2,620.9 904.4,597.4 904.6,644.4 904.8,679.5 905.0,703.0 905.2,691.3 905.4,691.3 905.6,691.3 905.8,691.3 906.0,667.8 906.2,632.6 906.4,597.4 906.6,491.9 906.8,679.5 907.0,632.6 907.3,620.9 907.5,620.9 907.7,585.7 907.9,550.5 908.1,585.7 908.3,597.4 908.5,620.9 908.7,632.6 908.9,609.2 909.1,609.2 909.3,691.3 909.5,644.4 909.7,679.5 909.9,691.3 910.2,691.3 910.4,691.3 910.6,691.3 910.8,691.3 911.0,679.5 911.2,609.2 911.4,620.9 911.6,597.4 911.8,620.9 912.0,620.9 912.2,620.9 912.4,574.0 912.6,597.4 912.8,585.7 913.1,691.3 913.3,585.7 913.5,632.6 913.7,632.6 913.9,609.2 914.1,609.2 914.3,597.4 914.5,632.6 914.7,656.1 914.9,703.0 915.1,679.5 915.3,679.5 915.5,679.5 915.7,691.3 915.9,679.5 916.2,632.6 916.4,585.7 916.6,620.9 916.8,597.4 917.0,550.5 917.2,620.9 917.4,574.0 917.6,609.2 917.8,609.2 918.0,585.7 918.2,632.6 918.4,620.9 918.6,597.4 918.8,597.4 919.1,574.0 919.3,597.4 919.5,632.6 919.7,679.5 919.9,667.8 920.1,667.8 920.3,679.5 920.5,667.8 920.7,667.8 920.9,656.1 921.1,644.4 921.3,620.9 921.5,620.9 921.7,620.9 922.0,632.6 922.2,585.7 922.4,620.9 922.6,632.6 922.8,597.4 923.0,620.9 923.2,597.4 923.4,679.5 923.6,609.2 923.8,597.4 924.0,527.0 924.2,632.6 924.4,632.6 924.6,656.1 924.8,691.3 925.1,691.3 925.3,679.5 925.5,691.3 925.7,679.5 925.9,691.3 926.1,667.8 926.3,632.6 926.5,620.9 926.7,632.6 926.9,656.1 927.1,620.9 927.3,644.4 927.5,620.9 927.7,632.6 928.0,656.1 928.2,656.1 928.4,620.9 928.6,620.9 928.8,620.9 929.0,656.1 929.2,632.6 929.4,632.6 929.6,679.5 929.8,703.0 930.0,679.5 930.2,679.5 930.4,667.8 930.6,679.5 930.9,679.5 931.1,644.4 931.3,620.9 931.5,620.9 931.7,632.6 931.9,644.4 932.1,644.4 932.3,609.2 932.5,632.6 932.7,620.9 932.9,620.9 933.1,644.4 933.3,609.2 933.5,620.9 933.7,632.6 934.0,620.9 934.2,609.2 934.4,644.4 934.6,667.8 934.8,703.0 935.0,679.5 935.2,679.5 935.4,691.3 935.6,691.3 935.8,667.8 936.0,632.6 936.2,480.1 936.4,538.8 936.6,620.9 936.9,585.7 937.1,620.9 937.3,585.7 937.5,574.0 937.7,620.9 937.9,620.9 938.1,620.9 938.3,550.5 938.5,620.9 938.7,620.9 938.9,632.6 939.1,620.9 939.3,644.4 939.5,667.8 939.8,703.0 940.0,679.5 940.2,679.5 940.4,679.5 940.6,679.5 940.8,644.4 941.0,644.4 941.2,620.9 941.4,620.9 941.6,585.7 941.8,620.9 942.0,585.7 942.2,574.0 942.4,597.4 942.6,585.7 942.9,620.9 943.1,667.8 943.3,609.2 943.5,597.4 943.7,597.4 943.9,597.4 944.1,620.9 944.3,609.2 944.5,656.1 944.7,691.3 944.9,691.3 945.1,691.3 945.3,691.3 945.5,679.5 945.8,656.1 946.0,644.4 946.2,632.6 946.4,656.1 946.6,620.9 946.8,597.4 947.0,656.1 947.2,667.8 947.4,644.4 947.6,620.9 947.8,632.6 948.0,644.4 948.2,644.4 948.4,656.1 948.6,656.1 948.9,679.5 949.1,550.5 949.3,667.8 949.5,656.1 949.7,691.3 949.9,691.3 950.1,679.5 950.3,691.3 950.5,691.3 950.7,644.4 950.9,656.1 951.1,597.4 951.3,632.6 951.5,585.7 951.8,632.6 952.0,632.6 952.2,620.9 952.4,620.9 952.6,609.2 952.8,691.3 953.0,632.6 953.2,538.8 953.4,691.3 953.6,597.4 953.8,632.6 954.0,597.4 954.2,644.4 954.4,644.4 954.7,691.3 954.9,691.3 955.1,691.3 955.3,679.5 955.5,691.3 955.7,667.8 955.9,632.6 956.1,620.9 956.3,574.0 956.5,609.2 956.7,632.6 956.9,386.3 957.1,620.9 957.3,597.4 957.5,585.7 957.8,585.7 958.0,609.2 958.2,632.6 958.4,644.4 958.6,620.9 958.8,609.2 959.0,597.4 959.2,632.6 959.4,667.8 959.6,679.5 959.8,691.3 960.0,691.3 960.2,691.3 960.4,703.0 960.7,667.8 960.9,644.4 961.1,632.6 961.3,609.2 961.5,679.5 961.7,609.2 961.9,632.6 962.1,632.6 962.3,667.8 962.5,644.4 962.7,609.2 962.9,691.3 963.1,644.4 963.3,644.4 963.6,597.4 963.8,644.4 964.0,597.4 964.2,644.4 964.4,667.8 964.6,679.5 964.8,691.3 965.0,679.5 965.2,691.3 965.4,691.3 965.6,667.8 965.8,632.6 966.0,632.6 966.2,585.7 966.4,609.2 966.7,620.9 966.9,632.6 967.1,620.9 967.3,597.4 967.5,597.4 967.7,597.4 967.9,620.9 968.1,620.9 968.3,609.2 968.5,620.9 968.7,679.5 968.9,632.6 969.1,632.6 969.3,644.4 969.6,691.3 969.8,691.3 970.0,691.3 970.2,679.5 970.4,703.0 970.6,644.4 970.8,644.4 971.0,503.6 971.2,550.5 971.4,656.1 971.6,632.6 971.8,620.9 972.0,667.8 972.2,609.2 972.5,656.1 972.7,632.6 972.9,632.6 973.1,620.9 973.3,644.4 973.5,656.1 973.7,656.1 973.9,679.5 974.1,656.1 974.3,667.8 974.5,691.3 974.7,679.5 974.9,691.3 975.1,691.3 975.3,703.0 975.6,667.8 975.8,656.1 976.0,632.6 976.2,656.1 976.4,656.1 976.6,656.1 976.8,667.8 977.0,656.1 977.2,656.1 977.4,644.4 977.6,667.8 977.8,632.6 978.0,656.1 978.2,667.8 978.5,667.8 978.7,644.4 978.9,632.6 979.1,656.1 979.3,656.1 979.5,679.5 979.7,691.3 979.9,679.5 980.1,691.3 980.3,691.3 980.5,667.8 980.7,632.6 980.9,620.9 981.1,644.4 981.3,609.2 981.6,550.5 981.8,632.6 982.0,632.6 982.2,620.9 982.4,691.3 982.6,691.3 982.8,644.4 983.0,609.2 983.2,644.4 983.4,644.4 983.6,620.9 983.8,609.2 984.0,667.8 984.2,691.3 984.5,703.0 984.7,691.3 984.9,691.3 985.1,691.3 985.3,691.3 985.5,656.1 985.7,644.4 985.9,409.8 986.1,620.9 986.3,620.9 986.5,632.6 986.7,609.2 986.9,620.9 987.1,597.4 987.4,632.6 987.6,597.4 987.8,597.4 988.0,632.6 988.2,609.2 988.4,620.9 988.6,632.6 988.8,679.5 989.0,632.6 989.2,679.5 989.4,691.3 989.6,691.3 989.8,679.5 990.0,691.3 990.2,691.3 990.5,667.8 990.7,656.1 990.9,632.6 991.1,620.9 991.3,620.9 991.5,585.7 991.7,632.6 991.9,609.2 992.1,632.6 992.3,644.4 992.5,644.4 992.7,609.2 992.9,667.8 993.1,574.0 993.4,644.4 993.6,609.2 993.8,562.2 994.0,632.6 994.2,667.8 994.4,667.8 994.6,679.5 994.8,679.5 995.0,667.8 995.2,703.0 995.4,656.1 995.6,644.4 995.8,597.4 996.0,632.6 996.3,609.2 996.5,597.4 996.7,620.9 996.9,609.2 997.1,597.4 997.3,609.2 997.5,597.4 997.7,691.3 997.9,609.2 998.1,620.9 998.3,609.2 998.5,620.9 998.7,597.4 998.9,632.6 999.1,656.1 999.4,691.3 999.6,679.5 999.8,691.3 1000.0,691.3 1000.2,691.3 1000.4,656.1 1000.6,644.4 1000.8,503.6 1001.0,620.9 1001.2,620.9 1001.4,632.6 1001.6,620.9 1001.8,620.9 1002.0,632.6 1002.3,609.2 1002.5,632.6 1002.7,632.6 1002.9,644.4 1003.1,632.6 1003.3,691.3 1003.5,597.4 1003.7,527.0 1003.9,644.4 1004.1,667.8 1004.3,691.3 1004.5,691.3 1004.7,691.3 1004.9,691.3 1005.2,691.3 1005.4,656.1 1005.6,644.4 1005.8,632.6 1006.0,620.9 1006.2,632.6 1006.4,656.1 1006.6,632.6 1006.8,632.6 1007.0,620.9 1007.2,632.6 1007.4,620.9 1007.6,620.9 1007.8,620.9 1008.0,691.3 1008.3,644.4 1008.5,644.4 1008.7,620.9 1008.9,656.1 1009.1,632.6 1009.3,703.0 1009.5,667.8 1009.7,667.8 1009.9,679.5 1010.1,679.5 1010.3,656.1 1010.5,667.8 1010.7,644.4 1010.9,632.6 1011.2,620.9 1011.4,538.8 1011.6,644.4 1011.8,644.4 1012.0,656.1 1012.2,632.6 1012.4,656.1 1012.6,656.1 1012.8,632.6 1013.0,620.9 1013.2,644.4 1013.4,656.1 1013.6,620.9 1013.8,644.4 1014.0,656.1 1014.3,691.3 1014.5,691.3 1014.7,679.5 1014.9,679.5 1015.1,679.5 1015.3,644.4 1015.5,632.6 1015.7,620.9 1015.9,597.4 1016.1,597.4 1016.3,691.3 1016.5,620.9 1016.7,609.2 1016.9,597.4 1017.2,620.9 1017.4,609.2 1017.6,632.6 1017.8,562.2 1018.0,620.9 1018.2,609.2 1018.4,632.6 1018.6,585.7 1018.8,656.1 1019.0,644.4 1019.2,679.5 1019.4,679.5 1019.6,667.8 1019.8,667.8 1020.1,667.8 1020.3,667.8 1020.5,620.9 1020.7,691.3 1020.9,585.7 1021.1,597.4 1021.3,574.0 1021.5,620.9 1021.7,597.4 1021.9,632.6 1022.1,597.4 1022.3,609.2 1022.5,550.5 1022.7,620.9 1022.9,632.6 1023.2,609.2 1023.4,585.7 1023.6,538.8 1023.8,632.6 1024.0,656.1 1024.2,691.3 1024.4,691.3 1024.6,691.3 1024.8,679.5 1025.0,691.3 1025.2,691.3 1025.4,656.1 1025.6,632.6 1025.8,644.4 1026.1,632.6 1026.3,620.9 1026.5,632.6 1026.7,620.9 1026.9,620.9 1027.1,620.9 1027.3,656.1 1027.5,644.4 1027.7,620.9 1027.9,620.9 1028.1,620.9 1028.3,620.9 1028.5,644.4 1028.7,667.8 1029.0,667.8 1029.2,691.3 1029.4,691.3 1029.6,691.3 1029.8,691.3 1030.0,691.3 1030.2,691.3 1030.4,656.1 1030.6,679.5 1030.8,632.6 1031.0,644.4 1031.2,620.9 1031.4,656.1 1031.6,667.8 1031.8,644.4 1032.1,620.9 1032.3,632.6 1032.5,644.4 1032.7,609.2 1032.9,620.9 1033.1,632.6 1033.3,644.4 1033.5,656.1 1033.7,656.1 1033.9,656.1"/>
<path fill="none" stroke="#4472c4" stroke-width="9.2" stroke-linecap="round" d="M-4.0 691.3h0M-3.6 691.3h0M-3.2 691.3h0M-3.0 656.1h0M-2.8 644.4h0M-2.6 632.6h0M-2.3 574.0h0M-2.1 644.4h0M-1.9 620.9h0M-1.7 632.6h0M-1.5 644.4h0M-1.3 562.2h0M-1.1 609.2h0M-0.9 620.9h0M-0.7 620.9h0M-0.3 609.2h0M-0.1 667.8h0M0.1 609.2h0M0.3 609.2h0M0.6 632.6h0M0.8 656.1h0M1.0 691.3h0M1.2 679.5h0M1.4 691.3h0M1.6 679.5h0M1.8 679.5h0M2.2 644.4h0M2.4 620.9h0M2.6 585.7h0M2.8 644.4h0M3.5 609.2h0M3.7 632.6h0M3.9 632.6h0M4.1 620.9h0M4.3 644.4h0M4.5 656.1h0M4.7 632.6h0M4.9 632.6h0M5.1 644.4h0M5.3 656.1h0M5.5 632.6h0M5.7 679.5h0M5.9 691.3h0M6.3 691.3h0M6.8 679.5h0M7.0 667.8h0M7.4 574.0h0M7.6 632.6h0M7.8 644.4h0M8.2 667.8h0M8.4 620.9h0M8.6 644.4h0M8.8 609.2h0M9.0 667.8h0M9.2 620.9h0M9.5 667.8h0M9.7 644.4h0M9.9 656.1h0M10.1 644.4h0M10.3 656.1h0M10.5 667.8h0M10.7 679.5h0M10.9 691.3h0M11.3 691.3h0M11.9 691.3h0M12.1 667.8h0M12.4 656.1h0M12.8 620.9h0M13.4 574.0h0M13.6 620.9h0M13.8 656.1h0M14.0 632.6h0M14.2 538.8h0M14.4 620.9h0M14.6 632.6h0M14.8 656.1h0M15.0 620.9h0M15.2 632.6h0M15.5 667.8h0M15.9 703.0h0M16.1 691.3h0M16.3 679.5h0M16.5 691.3h0M16.9 679.5h0M17.3 667.8h0M17.7 656.1h0M17.9 667.8h0M18.1 632.6h0M18.4 667.8h0M18.8 667.8h0M19.0 656.1h0M19.2 632.6h0M19.4 644.4h0M19.6 656.1h0M19.8 667.8h0M20.0 656.1h0M20.2 632.6h0M20.4 656.1h0M20.6 679.5h0M20.8 691.3h0M21.0 679.5h0M21.5 691.3h0M21.7 679.5h0M21.9 679.5h0M22.1 644.4h0M22.3 644.4h0M22.5 620.9h0M22.7 574.0h0M22.9 632.6h0M23.1 656.1h0M23.3 620.9h0M23.5 691.3h0M23.7 644.4h0M23.9 644.4h0M24.1 620.9h0M24.4 632.6h0M24.6 620.9h0M24.8 656.1h0M25.0 691.3h0M25.2 620.9h0M25.4 632.6h0M25.6 667.8h0M25.8 691.3h0M26.2 679.5h0M26.4 691.3h0M26.6 679.5h0M26.8 667.8h0M27.0 656.1h0M27.3 667.8h0M27.5 656.1h0M27.7 585.7h0M27.9 620.9h0M28.3 632.6h0M28.7 656.1h0M28.9 656.1h0M29.1 667.8h0M29.3 667.8h0M29.5 632.6h0M29.7 644.4h0M29.9 667.8h0M30.1 620.9h0M30.4 656.1h0M30.6 691.3h0M30.8 691.3h0M31.4 691.3h0M31.8 656.1h0M32.0 620.9h0M32.2 609.2h0M32.4 691.3h0M32.6 597.4h0M32.8 585.7h0M33.0 609.2h0M33.3 585.7h0M33.7 597.4h0M33.9 585.7h0M34.1 609.2h0M34.3 620.9h0M34.5 667.8h0M34.7 597.4h0M34.9 585.7h0M35.1 691.3h0M35.3 632.6h0M35.5 679.5h0M35.7 691.3h0M35.9 691.3h0M36.2 679.5h0M36.4 679.5h0M36.6 691.3h0M36.8 679.5h0M37.0 644.4h0M37.2 574.0h0M37.4 609.2h0M37.6 644.4h0M37.8 585.7h0M38.0 632.6h0M38.2 656.1h0M38.4 632.6h0M38.6 597.4h0M38.8 667.8h0M39.0 620.9h0M39.3 632.6h0M39.7 597.4h0M39.9 632.6h0M40.1 644.4h0M40.3 644.4h0M40.5 679.5h0M40.9 679.5h0M41.1 667.8h0M41.3 679.5h0M41.5 667.8h0M41.7 656.1h0M41.9 656.1h0M42.2 644.4h0M42.4 679.5h0M42.6 656.1h0M42.8 632.6h0M43.0 656.1h0M43.2 644.4h0M43.4 550.5h0M43.6 632.6h0M43.8 620.9h0M44.2 667.8h0M44.4 620.9h0M44.6 632.6h0M44.8 644.4h0M45.1 632.6h0M45.3 644.4h0M45.5 667.8h0M45.7 691.3h0M45.9 691.3h0M46.3 691.3h0M46.7 656.1h0M46.9 679.5h0M47.1 562.2h0M47.3 644.4h0M47.5 656.1h0M47.7 609.2h0M47.9 632.6h0M48.4 597.4h0M48.6 585.7h0M48.8 620.9h0M49.0 632.6h0M49.2 656.1h0M49.4 620.9h0M49.6 656.1h0M49.8 620.9h0M50.0 656.1h0M50.2 667.8h0M50.4 667.8h0M50.6 691.3h0M50.8 691.3h0M51.3 679.5h0M51.5 691.3h0M51.7 656.1h0M51.9 656.1h0M52.1 632.6h0M52.3 620.9h0M52.5 656.1h0M52.7 644.4h0M52.9 644.4h0M53.1 620.9h0M53.3 644.4h0M53.5 632.6h0M53.7 620.9h0M53.9 609.2h0M54.2 620.9h0M54.4 656.1h0M54.6 632.6h0M54.8 632.6h0M55.0 620.9h0M55.2 644.4h0M55.4 644.4h0M55.6 691.3h0M55.8 691.3h0M56.2 679.5h0M56.4 691.3h0M56.6 679.5h0M56.8 644.4h0M57.1 691.3h0M57.3 632.6h0M57.7 620.9h0M57.9 609.2h0M58.1 632.6h0M58.3 597.4h0M58.5 609.2h0M58.7 679.5h0M58.9 644.4h0M59.3 609.2h0M59.5 597.4h0M59.7 632.6h0M60.0 632.6h0M60.2 644.4h0M60.4 679.5h0M60.6 691.3h0M60.8 691.3h0M61.0 679.5h0M61.4 691.3h0M61.6 667.8h0M61.8 656.1h0M62.0 585.7h0M62.2 574.0h0M62.4 620.9h0M62.6 632.6h0M62.8 644.4h0M63.1 632.6h0M63.3 644.4h0M63.5 632.6h0M63.9 597.4h0M64.1 667.8h0M64.3 632.6h0M64.5 656.1h0M64.9 597.4h0M65.1 620.9h0M65.3 679.5h0M65.5 691.3h0M66.0 691.3h0M66.2 679.5h0M66.4 691.3h0M66.6 667.8h0M66.8 644.4h0M67.2 656.1h0M67.4 644.4h0M67.6 609.2h0M67.8 609.2h0M68.2 644.4h0M68.4 656.1h0M68.9 644.4h0M69.3 644.4h0M69.5 597.4h0M69.7 632.6h0M69.9 632.6h0M70.1 644.4h0M70.3 656.1h0M70.5 667.8h0M70.7 679.5h0M70.9 679.5h0M71.3 667.8h0M71.7 644.4h0M72.0 656.1h0M72.2 644.4h0M72.4 644.4h0M72.6 632.6h0M72.8 656.1h0M73.0 679.5h0M73.2 620.9h0M73.4 644.4h0M73.6 656.1h0M73.8 656.1h0M74.0 632.6h0M74.2 644.4h0M74.4 609.2h0M74.6 632.6h0M74.9 632.6h0M75.1 644.4h0M75.3 667.8h0M75.5 691.3h0M75.9 679.5h0M76.1 691.3h0M76.3 679.5h0M76.5 691.3h0M76.7 656.1h0M76.9 632.6h0M77.1 609.2h0M77.3 597.4h0M77.5 609.2h0M77.8 620.9h0M78.2 644.4h0M78.4 609.2h0M78.6 620.9h0M78.8 632.6h0M79.0 609.2h0M79.2 644.4h0M79.4 632.6h0M79.6 609.2h0M79.8 597.4h0M80.0 656.1h0M80.2 667.8h0M80.4 691.3h0M80.9 691.3h0M81.3 679.5h0M81.5 667.8h0M81.7 656.1h0M81.9 644.4h0M82.1 667.8h0M82.3 644.4h0M82.5 609.2h0M82.7 632.6h0M82.9 620.9h0M83.3 620.9h0M83.5 609.2h0M83.8 620.9h0M84.0 632.6h0M84.2 691.3h0M84.4 609.2h0M84.6 620.9h0M84.8 609.2h0M85.0 656.1h0M85.2 679.5h0M85.4 667.8h0M85.8 679.5h0M86.4 667.8h0M86.6 644.4h0M86.9 667.8h0M87.3 644.4h0M87.7 656.1h0M87.9 632.6h0M88.1 667.8h0M88.3 679.5h0M88.5 632.6h0M88.7 656.1h0M88.9 620.9h0M89.1 656.1h0M89.3 691.3h0M89.8 644.4h0M90.2 656.1h0M90.4 691.3h0M90.8 691.3h0M91.4 667.8h0M91.6 656.1h0M91.8 691.3h0M92.0 656.1h0M92.2 644.4h0M92.4 620.9h0M92.9 679.5h0M93.1 609.2h0M93.3 620.9h0M93.5 644.4h0M93.9 632.6h0M94.1 585.7h0M94.3 632.6h0M94.7 644.4h0M94.9 656.1h0M95.1 691.3h0M95.3 679.5h0M95.8 679.5h0M96.0 691.3h0M96.4 656.1h0M96.8 656.1h0M97.0 632.6h0M97.4 644.4h0M97.8 644.4h0M98.0 656.1h0M98.4 644.4h0M98.7 656.1h0M98.9 609.2h0M99.3 644.4h0M99.5 656.1h0M99.7 632.6h0M99.9 656.1h0M100.1 667.8h0M100.3 679.5h0M100.5 691.3h0M100.9 691.3h0M101.3 667.8h0M101.8 562.2h0M102.0 574.0h0M102.2 656.1h0M102.4 609.2h0M102.6 644.4h0M102.8 620.9h0M103.2 632.6h0M103.4 644.4h0M103.6 632.6h0M103.8 656.1h0M104.2 609.2h0M104.4 620.9h0M104.7 656.1h0M104.9 656.1h0M105.1 667.8h0M105.3 691.3h0M105.7 679.5h0M105.9 691.3h0M106.3 679.5h0M106.5 667.8h0M106.7 620.9h0M106.9 644.4h0M107.1 632.6h0M107.3 620.9h0M107.6 644.4h0M107.8 644.4h0M108.0 632.6h0M108.2 620.9h0M108.4 644.4h0M108.6 656.1h0M108.8 644.4h0M109.0 632.6h0M109.4 632.6h0M109.6 644.4h0M109.8 656.1h0M110.0 679.5h0M110.2 667.8h0M110.5 679.5h0M110.9 667.8h0M111.3 656.1h0M111.7 574.0h0M111.9 620.9h0M112.1 597.4h0M112.3 574.0h0M112.5 597.4h0M112.7 609.2h0M112.9 632.6h0M113.1 620.9h0M113.3 632.6h0M113.6 620.9h0M113.8 620.9h0M114.2 597.4h0M114.4 632.6h0M114.6 609.2h0M114.8 632.6h0M115.0 644.4h0M115.2 691.3h0M115.4 691.3h0M115.8 679.5h0M116.5 609.2h0M116.7 433.2h0M116.9 444.9h0M117.1 515.3h0M117.3 632.6h0M117.5 609.2h0M117.9 562.2h0M118.1 632.6h0M118.3 620.9h0M118.5 597.4h0M118.9 620.9h0M119.1 644.4h0M119.3 667.8h0M119.6 456.7h0M119.8 644.4h0M120.0 656.1h0M120.2 691.3h0M120.4 691.3h0M120.8 679.5h0M121.0 691.3h0M121.4 632.6h0M121.8 515.3h0M122.0 644.4h0M122.2 620.9h0M122.5 644.4h0M122.9 632.6h0M123.1 644.4h0M123.3 609.2h0M123.5 433.2h0M123.7 491.9h0M123.9 609.2h0M124.1 620.9h0M124.3 644.4h0M124.5 667.8h0M124.7 632.6h0M124.9 667.8h0M125.1 679.5h0M125.4 679.5h0M125.6 667.8h0M125.8 679.5h0M126.0 667.8h0M126.4 667.8h0M126.6 632.6h0M126.8 656.1h0M127.0 620.9h0M127.2 632.6h0M127.4 644.4h0M127.6 632.6h0M127.8 644.4h0M128.0 656.1h0M128.2 679.5h0M128.5 644.4h0M128.7 609.2h0M128.9 620.9h0M129.3 656.1h0M129.5 620.9h0M129.9 679.5h0M130.1 691.3h0M130.3 679.5h0M130.7 691.3h0M130.9 691.3h0M131.1 679.5h0M131.4 644.4h0M131.6 620.9h0M131.8 620.9h0M132.0 656.1h0M132.4 679.5h0M132.6 644.4h0M132.8 644.4h0M133.2 656.1h0M133.4 656.1h0M133.6 609.2h0M133.8 491.9h0M134.0 468.4h0M134.3 550.5h0M134.5 620.9h0M134.7 656.1h0M134.9 644.4h0M135.1 691.3h0M135.3 691.3h0M135.7 679.5h0M135.9 679.5h0M136.1 667.8h0M136.3 644.4h0M136.5 597.4h0M136.9 632.6h0M137.1 597.4h0M137.4 597.4h0M137.6 667.8h0M137.8 609.2h0M138.0 632.6h0M138.2 562.2h0M138.4 527.0h0M138.6 620.9h0M138.8 632.6h0M139.0 620.9h0M139.4 620.9h0M139.6 644.4h0M139.8 656.1h0M140.0 679.5h0M140.3 667.8h0M140.9 679.5h0M141.1 656.1h0M141.3 644.4h0M141.7 656.1h0M141.9 656.1h0M142.3 632.6h0M142.5 620.9h0M142.7 644.4h0M142.9 632.6h0M143.2 620.9h0M143.4 632.6h0M143.8 620.9h0M144.0 609.2h0M144.2 656.1h0M144.4 527.0h0M144.6 632.6h0M144.8 679.5h0M145.0 691.3h0M145.4 691.3h0M145.6 679.5h0M145.8 703.0h0M146.0 632.6h0M146.3 620.9h0M146.5 562.2h0M146.7 597.4h0M146.9 632.6h0M147.3 597.4h0M147.5 585.7h0M147.9 609.2h0M148.1 620.9h0M148.3 574.0h0M148.5 597.4h0M148.7 667.8h0M148.9 585.7h0M149.2 632.6h0M149.4 609.2h0M149.6 632.6h0M149.8 667.8h0M150.0 679.5h0M150.4 691.3h0M150.8 691.3h0M151.0 644.4h0M151.2 656.1h0M151.4 644.4h0M151.6 597.4h0M151.8 632.6h0M152.3 632.6h0M152.7 609.2h0M152.9 620.9h0M153.1 632.6h0M153.3 609.2h0M153.5 644.4h0M153.7 632.6h0M153.9 597.4h0M154.1 644.4h0M154.3 574.0h0M154.5 667.8h0M154.7 644.4h0M154.9 667.8h0M155.4 679.5h0M155.8 679.5h0M156.0 656.1h0M156.2 644.4h0M156.4 597.4h0M156.6 585.7h0M156.8 609.2h0M157.0 597.4h0M157.2 620.9h0M157.4 620.9h0M157.6 632.6h0M157.8 597.4h0M158.1 620.9h0M158.3 620.9h0M158.5 632.6h0M158.9 574.0h0M159.1 585.7h0M159.3 597.4h0M159.5 632.6h0M159.7 656.1h0M159.9 679.5h0M160.3 679.5h0M160.9 644.4h0M161.2 609.2h0M161.4 597.4h0M161.6 620.9h0M161.8 667.8h0M162.0 597.4h0M162.2 609.2h0M162.4 597.4h0M162.6 609.2h0M162.8 609.2h0M163.0 491.9h0M163.2 585.7h0M163.4 620.9h0M163.6 597.4h0M163.8 585.7h0M164.1 620.9h0M164.3 609.2h0M164.5 620.9h0M164.7 632.6h0M164.9 691.3h0M165.1 679.5h0M165.3 691.3h0M165.7 679.5h0M165.9 656.1h0M166.3 585.7h0M166.5 632.6h0M166.7 656.1h0M167.0 632.6h0M167.2 656.1h0M167.4 656.1h0M167.8 620.9h0M168.0 656.1h0M168.2 644.4h0M168.4 632.6h0M168.6 620.9h0M168.8 656.1h0M169.2 620.9h0M169.4 667.8h0M169.8 679.5h0M170.3 679.5h0M170.9 667.8h0M171.1 632.6h0M171.3 620.9h0M171.5 609.2h0M171.9 632.6h0M172.1 620.9h0M172.3 609.2h0M172.5 632.6h0M173.0 620.9h0M173.4 620.9h0M173.6 644.4h0M173.8 644.4h0M174.0 527.0h0M174.2 491.9h0M174.4 632.6h0M174.8 691.3h0M175.2 679.5h0M175.4 691.3h0M175.6 679.5h0M175.9 656.1h0M176.1 597.4h0M176.3 609.2h0M176.5 620.9h0M176.7 597.4h0M176.9 597.4h0M177.1 620.9h0M177.3 632.6h0M177.5 597.4h0M177.7 609.2h0M177.9 667.8h0M178.1 597.4h0M178.3 597.4h0M178.5 609.2h0M179.0 609.2h0M179.2 620.9h0M179.4 656.1h0M179.6 691.3h0M179.8 691.3h0M180.4 691.3h0M180.8 656.1h0M181.0 644.4h0M181.2 585.7h0M181.4 691.3h0M181.6 597.4h0M181.9 585.7h0M182.1 609.2h0M182.3 585.7h0M182.5 597.4h0M182.9 620.9h0M183.3 620.9h0M183.5 597.4h0M183.7 585.7h0M183.9 609.2h0M184.1 597.4h0M184.3 620.9h0M184.5 656.1h0M184.8 691.3h0M185.2 679.5h0M185.4 691.3h0M185.6 679.5h0M185.8 679.5h0M186.0 632.6h0M186.2 609.2h0M186.4 620.9h0M186.6 632.6h0M186.8 667.8h0M187.0 597.4h0M187.2 632.6h0M187.4 609.2h0M187.9 585.7h0M188.1 632.6h0M188.3 632.6h0M188.5 550.5h0M188.7 538.8h0M188.9 585.7h0M189.1 609.2h0M189.3 620.9h0M189.5 656.1h0M189.7 679.5h0M189.9 667.8h0M190.1 679.5h0M190.3 679.5h0M190.5 667.8h0M190.8 656.1h0M191.0 632.6h0M191.2 597.4h0M191.4 644.4h0M191.6 620.9h0M191.8 609.2h0M192.2 644.4h0M192.4 632.6h0M192.6 667.8h0M192.8 538.8h0M193.0 620.9h0M193.2 632.6h0M193.4 632.6h0M193.6 609.2h0M193.9 632.6h0M194.1 597.4h0M194.3 632.6h0M194.7 691.3h0M194.9 691.3h0M195.3 679.5h0M195.5 691.3h0M195.7 667.8h0M195.9 632.6h0M196.1 585.7h0M196.3 609.2h0M196.5 574.0h0M196.8 597.4h0M197.2 585.7h0M197.4 585.7h0M197.6 597.4h0M197.8 562.2h0M198.0 574.0h0M198.4 597.4h0M198.6 585.7h0M198.8 667.8h0M199.0 574.0h0M199.2 620.9h0M199.4 667.8h0M199.7 691.3h0M199.9 679.5h0M200.1 691.3h0M200.3 691.3h0M200.7 656.1h0M200.9 632.6h0M201.1 620.9h0M201.3 609.2h0M201.5 585.7h0M201.9 609.2h0M202.1 597.4h0M202.3 620.9h0M202.8 597.4h0M203.0 585.7h0M203.2 609.2h0M203.4 585.7h0M203.8 585.7h0M204.0 609.2h0M204.2 620.9h0M204.4 667.8h0M204.6 691.3h0M204.8 679.5h0M205.2 691.3h0M205.4 691.3h0M205.7 656.1h0M205.9 644.4h0M206.1 597.4h0M206.3 609.2h0M206.5 574.0h0M206.9 620.9h0M207.1 609.2h0M207.3 574.0h0M207.5 585.7h0M207.7 597.4h0M207.9 679.5h0M208.1 562.2h0M208.3 597.4h0M208.6 585.7h0M208.8 585.7h0M209.0 550.5h0M209.2 632.6h0M209.4 644.4h0M209.6 691.3h0M209.8 691.3h0M210.0 679.5h0M210.4 679.5h0M210.6 667.8h0M210.8 632.6h0M211.0 644.4h0M211.2 667.8h0M211.4 632.6h0M211.9 620.9h0M212.3 632.6h0M212.7 620.9h0M212.9 609.2h0M213.1 632.6h0M213.3 609.2h0M213.7 527.0h0M213.9 632.6h0M214.1 667.8h0M214.3 656.1h0M214.6 691.3h0M214.8 691.3h0M215.0 679.5h0M215.4 691.3h0M215.6 656.1h0M215.8 620.9h0M216.0 585.7h0M216.2 691.3h0M216.4 609.2h0M216.6 585.7h0M216.8 597.4h0M217.2 609.2h0M217.5 667.8h0M217.7 597.4h0M217.9 585.7h0M218.1 609.2h0M218.3 620.9h0M218.5 585.7h0M218.7 597.4h0M218.9 597.4h0M219.1 632.6h0M219.3 667.8h0M219.5 691.3h0M219.9 691.3h0M220.3 691.3h0M220.6 656.1h0M220.8 644.4h0M221.4 644.4h0M221.6 632.6h0M221.8 585.7h0M222.0 609.2h0M222.2 691.3h0M222.4 644.4h0M222.6 609.2h0M222.8 609.2h0M223.0 632.6h0M223.2 597.4h0M223.5 620.9h0M223.9 644.4h0M224.1 656.1h0M224.3 656.1h0M224.5 679.5h0M224.9 679.5h0M225.1 667.8h0M225.3 679.5h0M225.5 667.8h0M225.7 644.4h0M225.9 550.5h0M226.1 585.7h0M226.3 609.2h0M226.6 620.9h0M226.8 597.4h0M227.0 679.5h0M227.2 632.6h0M227.4 691.3h0M227.6 609.2h0M227.8 609.2h0M228.0 644.4h0M228.2 620.9h0M228.4 644.4h0M228.6 609.2h0M228.8 620.9h0M229.0 644.4h0M229.2 667.8h0M229.5 691.3h0M229.7 679.5h0M229.9 691.3h0M230.3 691.3h0M230.5 667.8h0M230.7 632.6h0M230.9 667.8h0M231.1 644.4h0M231.3 644.4h0M231.5 632.6h0M231.9 620.9h0M232.4 609.2h0M232.6 620.9h0M232.8 620.9h0M233.0 609.2h0M233.4 609.2h0M233.6 620.9h0M233.8 632.6h0M234.0 644.4h0M234.2 679.5h0M234.4 679.5h0M234.8 679.5h0M235.5 644.4h0M235.7 656.1h0M235.9 562.2h0M236.1 632.6h0M236.3 691.3h0M236.5 644.4h0M236.7 679.5h0M236.9 609.2h0M237.1 656.1h0M237.3 597.4h0M237.5 644.4h0M237.7 656.1h0M237.9 632.6h0M238.1 609.2h0M238.4 644.4h0M238.6 620.9h0M238.8 679.5h0M239.0 656.1h0M239.4 691.3h0M239.8 691.3h0M240.2 679.5h0M240.4 679.5h0M240.6 644.4h0M240.8 632.6h0M241.0 644.4h0M241.3 632.6h0M241.5 620.9h0M241.9 620.9h0M242.3 679.5h0M242.5 656.1h0M242.7 632.6h0M242.9 620.9h0M243.1 468.4h0M243.3 480.1h0M243.5 632.6h0M243.7 644.4h0M243.9 656.1h0M244.1 679.5h0M244.4 679.5h0M244.8 679.5h0M245.0 667.8h0M245.4 632.6h0M245.6 644.4h0M245.8 574.0h0M246.0 585.7h0M246.2 632.6h0M246.4 597.4h0M246.6 609.2h0M246.8 609.2h0M247.0 562.2h0M247.3 609.2h0M247.7 597.4h0M247.9 609.2h0M248.1 691.3h0M248.3 597.4h0M248.7 609.2h0M248.9 656.1h0M249.1 644.4h0M249.3 679.5h0M249.7 691.3h0M249.9 691.3h0M250.2 679.5h0M250.4 656.1h0M250.6 632.6h0M250.8 609.2h0M251.2 620.9h0M251.4 585.7h0M251.6 620.9h0M251.8 609.2h0M252.0 620.9h0M252.2 562.2h0M252.4 620.9h0M252.6 609.2h0M252.8 574.0h0M253.0 597.4h0M253.3 667.8h0M253.5 597.4h0M253.7 620.9h0M253.9 644.4h0M254.1 667.8h0M254.3 679.5h0M254.9 667.8h0M255.3 667.8h0M255.5 632.6h0M255.7 609.2h0M255.9 667.8h0M256.2 597.4h0M256.4 597.4h0M256.6 585.7h0M256.8 597.4h0M257.0 562.2h0M257.2 609.2h0M257.4 667.8h0M257.6 597.4h0M257.8 585.7h0M258.0 609.2h0M258.2 597.4h0M258.4 597.4h0M258.6 667.8h0M258.8 656.1h0M259.3 679.5h0M259.5 691.3h0M259.9 679.5h0M260.3 656.1h0M260.5 644.4h0M260.7 597.4h0M260.9 597.4h0M261.3 609.2h0M261.7 597.4h0M261.9 632.6h0M262.2 620.9h0M262.4 620.9h0M262.8 597.4h0M263.0 691.3h0M263.2 609.2h0M263.4 515.3h0M263.6 421.5h0M263.8 632.6h0M264.0 667.8h0M264.2 679.5h0M264.4 691.3h0M264.8 679.5h0M265.3 679.5h0M265.5 644.4h0M265.7 574.0h0M265.9 597.4h0M266.1 620.9h0M266.3 597.4h0M266.5 562.2h0M266.7 679.5h0M266.9 585.7h0M267.1 597.4h0M267.3 632.6h0M267.5 597.4h0M267.7 609.2h0M267.9 585.7h0M268.2 679.5h0M268.4 632.6h0M268.6 585.7h0M268.8 644.4h0M269.0 667.8h0M269.2 679.5h0M269.4 679.5h0M269.6 691.3h0M269.8 691.3h0M270.2 632.6h0M270.4 656.1h0M270.6 632.6h0M270.8 620.9h0M271.3 656.1h0M271.5 620.9h0M271.7 632.6h0M271.9 609.2h0M272.1 644.4h0M272.3 620.9h0M272.5 644.4h0M272.9 691.3h0M273.1 620.9h0M273.3 656.1h0M273.5 632.6h0M274.0 679.5h0M274.2 691.3h0M274.4 679.5h0M274.6 691.3h0M274.8 691.3h0M275.2 667.8h0M275.4 620.9h0M275.8 585.7h0M276.0 609.2h0M276.2 620.9h0M276.4 620.9h0M276.8 597.4h0M277.3 632.6h0M277.5 620.9h0M277.9 620.9h0M278.3 679.5h0M278.5 620.9h0M278.7 644.4h0M278.9 667.8h0M279.1 691.3h0M279.3 691.3h0M279.5 679.5h0M280.0 679.5h0M280.2 667.8h0M280.4 644.4h0M280.6 609.2h0M280.8 597.4h0M281.0 609.2h0M281.2 632.6h0M281.4 644.4h0M281.6 632.6h0M281.8 644.4h0M282.0 679.5h0M282.2 620.9h0M282.4 620.9h0M282.9 597.4h0M283.1 632.6h0M283.3 632.6h0M283.5 609.2h0M283.7 656.1h0M283.9 667.8h0M284.1 691.3h0M284.3 691.3h0M284.5 679.5h0M284.9 691.3h0M285.1 667.8h0M285.3 632.6h0M285.5 620.9h0M286.0 632.6h0M286.2 620.9h0M286.4 620.9h0M286.6 597.4h0M286.8 691.3h0M287.0 597.4h0M287.2 620.9h0M287.4 620.9h0M287.6 632.6h0M287.8 632.6h0M288.2 620.9h0M288.4 679.5h0M288.6 632.6h0M288.9 656.1h0M289.1 691.3h0M289.3 679.5h0M289.5 691.3h0M289.9 691.3h0M290.1 644.4h0M290.3 656.1h0M290.5 632.6h0M290.9 632.6h0M291.1 691.3h0M291.3 597.4h0M291.5 609.2h0M291.7 620.9h0M292.0 644.4h0M292.2 620.9h0M292.4 620.9h0M292.6 609.2h0M292.8 632.6h0M293.0 620.9h0M293.4 433.2h0M293.6 656.1h0M293.8 679.5h0M294.0 691.3h0M294.4 691.3h0M294.9 679.5h0M295.3 644.4h0M295.5 597.4h0M295.7 609.2h0M295.9 632.6h0M296.1 597.4h0M296.3 609.2h0M296.5 503.6h0M296.7 632.6h0M296.9 597.4h0M297.3 632.6h0M297.8 609.2h0M298.0 597.4h0M298.2 632.6h0M298.4 597.4h0M298.6 656.1h0M298.8 667.8h0M299.0 679.5h0M299.4 691.3h0M299.8 679.5h0M300.0 656.1h0M300.2 632.6h0M300.4 691.3h0M300.6 609.2h0M300.9 585.7h0M301.1 503.6h0M301.3 667.8h0M301.5 585.7h0M301.9 574.0h0M302.1 609.2h0M302.3 574.0h0M302.5 667.8h0M302.7 609.2h0M302.9 597.4h0M303.1 609.2h0M303.3 609.2h0M303.8 644.4h0M304.0 703.0h0M304.2 691.3h0M304.4 679.5h0M304.6 691.3h0M304.8 691.3h0M305.0 656.1h0M305.2 644.4h0M305.4 597.4h0M305.6 609.2h0M305.8 620.9h0M306.0 632.6h0M306.2 597.4h0M306.4 620.9h0M306.7 632.6h0M306.9 620.9h0M307.1 609.2h0M307.3 609.2h0M307.9 609.2h0M308.1 597.4h0M308.3 597.4h0M308.5 632.6h0M308.7 656.1h0M308.9 679.5h0M309.3 691.3h0M309.8 679.5h0M310.0 667.8h0M310.2 620.9h0M310.4 609.2h0M310.8 585.7h0M311.2 609.2h0M311.4 574.0h0M311.6 503.6h0M311.8 609.2h0M312.0 585.7h0M312.4 597.4h0M312.7 585.7h0M312.9 691.3h0M313.1 562.2h0M313.3 597.4h0M313.5 632.6h0M313.7 656.1h0M313.9 691.3h0M314.3 691.3h0M314.7 703.0h0M314.9 679.5h0M315.1 620.9h0M315.3 597.4h0M315.6 585.7h0M315.8 620.9h0M316.0 597.4h0M316.2 585.7h0M316.4 620.9h0M316.8 597.4h0M317.0 609.2h0M317.2 585.7h0M317.4 609.2h0M317.6 620.9h0M317.8 585.7h0M318.0 550.5h0M318.2 491.9h0M318.4 632.6h0M318.7 656.1h0M318.9 679.5h0M319.1 691.3h0M319.3 691.3h0M319.5 679.5h0M319.9 656.1h0M320.1 620.9h0M320.3 562.2h0M320.5 574.0h0M320.7 597.4h0M320.9 609.2h0M321.1 585.7h0M321.3 574.0h0M321.8 609.2h0M322.0 585.7h0M322.4 597.4h0M322.6 585.7h0M322.8 597.4h0M323.0 609.2h0M323.2 585.7h0M323.4 632.6h0M323.6 656.1h0M323.8 679.5h0M324.0 691.3h0M324.4 691.3h0M324.9 644.4h0M325.3 609.2h0M325.7 585.7h0M325.9 609.2h0M326.3 574.0h0M326.5 667.8h0M326.9 620.9h0M327.1 585.7h0M327.3 597.4h0M327.8 562.2h0M328.0 574.0h0M328.2 609.2h0M328.4 632.6h0M328.6 679.5h0M328.8 679.5h0M329.0 691.3h0M329.4 691.3h0M329.6 679.5h0M329.8 667.8h0M330.0 656.1h0M330.2 609.2h0M330.5 620.9h0M330.7 597.4h0M330.9 620.9h0M331.1 632.6h0M331.3 644.4h0M331.5 691.3h0M331.7 609.2h0M331.9 667.8h0M332.1 609.2h0M332.3 609.2h0M332.5 644.4h0M332.9 632.6h0M333.1 691.3h0M333.3 667.8h0M333.6 679.5h0M333.8 691.3h0M334.0 679.5h0M334.4 679.5h0M334.8 679.5h0M335.0 644.4h0M335.2 562.2h0M335.4 620.9h0M335.6 632.6h0M335.8 632.6h0M336.0 620.9h0M336.2 691.3h0M336.5 632.6h0M336.9 609.2h0M337.1 632.6h0M337.3 644.4h0M337.7 667.8h0M337.9 597.4h0M338.1 620.9h0M338.3 644.4h0M338.5 667.8h0M338.7 679.5h0M338.9 691.3h0M339.1 679.5h0M339.4 691.3h0M339.8 667.8h0M340.0 620.9h0M340.2 597.4h0M340.4 609.2h0M340.6 597.4h0M340.8 597.4h0M341.0 620.9h0M341.2 667.8h0M341.4 609.2h0M341.6 620.9h0M341.8 620.9h0M342.2 562.2h0M342.5 585.7h0M342.7 597.4h0M342.9 597.4h0M343.1 609.2h0M343.3 644.4h0M343.5 679.5h0M343.7 691.3h0M343.9 691.3h0M344.3 691.3h0M344.7 667.8h0M344.9 620.9h0M345.1 550.5h0M345.4 632.6h0M345.6 620.9h0M345.8 632.6h0M346.0 691.3h0M346.4 691.3h0M346.6 632.6h0M346.8 585.7h0M347.0 609.2h0M347.2 620.9h0M347.4 632.6h0M347.6 609.2h0M347.8 609.2h0M348.0 527.0h0M348.3 644.4h0M348.5 656.1h0M348.7 691.3h0M348.9 691.3h0M349.3 679.5h0M349.5 691.3h0M349.7 667.8h0M349.9 644.4h0M350.1 609.2h0M350.3 574.0h0M350.7 585.7h0M350.9 550.5h0M351.1 585.7h0M351.4 620.9h0M351.6 609.2h0M351.8 620.9h0M352.0 538.8h0M352.2 574.0h0M352.4 620.9h0M352.6 597.4h0M352.8 562.2h0M353.0 574.0h0M353.2 632.6h0M353.4 632.6h0M353.6 703.0h0M353.8 691.3h0M354.0 679.5h0M354.3 691.3h0M354.7 667.8h0M354.9 656.1h0M355.1 609.2h0M355.3 609.2h0M355.9 632.6h0M356.1 574.0h0M356.3 609.2h0M356.5 585.7h0M356.7 620.9h0M356.9 620.9h0M357.1 585.7h0M357.4 609.2h0M357.8 597.4h0M358.0 620.9h0M358.2 632.6h0M358.4 667.8h0M358.6 691.3h0M358.8 691.3h0M359.0 679.5h0M359.4 691.3h0M359.6 644.4h0M359.8 609.2h0M360.0 585.7h0M360.3 620.9h0M360.5 585.7h0M360.9 620.9h0M361.1 609.2h0M361.3 691.3h0M361.5 585.7h0M361.9 609.2h0M362.1 597.4h0M362.3 609.2h0M362.5 620.9h0M362.9 609.2h0M363.2 620.9h0M363.4 679.5h0M363.8 691.3h0M364.4 691.3h0M364.6 667.8h0M364.8 644.4h0M365.0 597.4h0M365.2 609.2h0M365.4 667.8h0M365.6 632.6h0M365.8 679.5h0M366.0 609.2h0M366.3 620.9h0M366.9 597.4h0M367.1 620.9h0M367.3 609.2h0M367.7 620.9h0M367.9 620.9h0M368.1 644.4h0M368.3 667.8h0M368.5 691.3h0M368.9 691.3h0M369.2 679.5h0M369.4 691.3h0M369.6 656.1h0M369.8 656.1h0M370.0 632.6h0M370.2 667.8h0M370.4 609.2h0M370.6 644.4h0M370.8 691.3h0M371.0 585.7h0M371.2 597.4h0M371.4 632.6h0M371.6 620.9h0M371.8 644.4h0M372.1 609.2h0M372.3 597.4h0M372.5 620.9h0M372.9 538.8h0M373.1 644.4h0M373.3 656.1h0M373.5 691.3h0M373.9 691.3h0M374.1 679.5h0M374.3 691.3h0M374.5 644.4h0M374.7 609.2h0M374.9 562.2h0M375.2 679.5h0M375.4 585.7h0M375.6 562.2h0M375.8 585.7h0M376.0 562.2h0M376.4 585.7h0M376.6 562.2h0M376.8 562.2h0M377.0 585.7h0M377.4 562.2h0M377.6 585.7h0M377.8 679.5h0M378.1 609.2h0M378.3 644.4h0M378.5 691.3h0M378.9 691.3h0M379.1 679.5h0M379.3 691.3h0M379.5 679.5h0M379.7 644.4h0M379.9 644.4h0M380.3 656.1h0M380.5 632.6h0M380.7 620.9h0M381.0 632.6h0M381.2 656.1h0M381.4 656.1h0M381.6 644.4h0M381.8 620.9h0M382.2 632.6h0M382.4 609.2h0M382.6 632.6h0M382.8 632.6h0M383.2 667.8h0M383.4 667.8h0M383.6 679.5h0M383.8 679.5h0M384.1 667.8h0M384.3 703.0h0M384.5 667.8h0M384.7 632.6h0M384.9 620.9h0M385.1 597.4h0M385.3 597.4h0M385.5 620.9h0M385.7 632.6h0M385.9 597.4h0M386.1 609.2h0M386.3 620.9h0M386.7 667.8h0M387.0 597.4h0M387.2 585.7h0M387.4 609.2h0M387.8 632.6h0M388.2 656.1h0M388.4 691.3h0M388.8 679.5h0M389.2 691.3h0M389.4 667.8h0M389.6 644.4h0M389.9 597.4h0M390.3 620.9h0M390.5 632.6h0M390.7 538.8h0M390.9 597.4h0M391.1 609.2h0M391.3 620.9h0M391.5 632.6h0M391.7 609.2h0M391.9 632.6h0M392.1 597.4h0M392.3 597.4h0M392.5 620.9h0M393.0 620.9h0M393.2 656.1h0M393.4 679.5h0M393.6 691.3h0M393.8 679.5h0M394.2 691.3h0M394.4 667.8h0M394.6 632.6h0M394.8 515.3h0M395.0 609.2h0M395.2 632.6h0M395.4 597.4h0M395.6 620.9h0M395.9 574.0h0M396.1 562.2h0M396.3 609.2h0M396.5 597.4h0M396.7 574.0h0M396.9 632.6h0M397.1 597.4h0M397.3 632.6h0M397.5 609.2h0M397.7 620.9h0M397.9 632.6h0M398.1 644.4h0M398.3 679.5h0M398.5 691.3h0M399.0 691.3h0M399.2 679.5h0M399.4 656.1h0M399.6 644.4h0M399.8 667.8h0M400.0 620.9h0M400.4 632.6h0M400.6 609.2h0M400.8 620.9h0M401.0 632.6h0M401.4 609.2h0M401.6 620.9h0M401.9 620.9h0M402.1 632.6h0M402.3 620.9h0M402.5 691.3h0M402.7 597.4h0M402.9 620.9h0M403.1 679.5h0M403.3 691.3h0M403.9 691.3h0M404.3 656.1h0M404.5 667.8h0M404.8 597.4h0M405.0 620.9h0M405.2 585.7h0M405.4 562.2h0M405.6 620.9h0M405.8 574.0h0M406.0 597.4h0M406.2 609.2h0M406.4 597.4h0M406.6 620.9h0M406.8 585.7h0M407.0 597.4h0M407.4 620.9h0M407.6 632.6h0M407.9 620.9h0M408.1 679.5h0M408.3 679.5h0M408.5 691.3h0M408.9 679.5h0M409.1 691.3h0M409.3 644.4h0M409.5 609.2h0M409.7 620.9h0M409.9 585.7h0M410.1 620.9h0M410.3 597.4h0M410.8 585.7h0M411.2 620.9h0M411.4 620.9h0M411.6 585.7h0M411.8 609.2h0M412.2 620.9h0M412.4 620.9h0M412.8 632.6h0M413.0 667.8h0M413.2 691.3h0M413.4 679.5h0M413.7 691.3h0M413.9 691.3h0M414.3 679.5h0M414.5 620.9h0M414.7 609.2h0M414.9 620.9h0M415.1 597.4h0M415.3 620.9h0M415.5 597.4h0M415.9 620.9h0M416.1 609.2h0M416.3 597.4h0M416.5 632.6h0M416.8 632.6h0M417.0 609.2h0M417.2 620.9h0M417.4 620.9h0M417.6 667.8h0M417.8 632.6h0M418.0 667.8h0M418.2 691.3h0M418.4 679.5h0M418.6 691.3h0M418.8 691.3h0M419.2 656.1h0M419.4 632.6h0M419.7 597.4h0M419.9 550.5h0M420.1 538.8h0M420.3 609.2h0M420.7 597.4h0M420.9 632.6h0M421.3 597.4h0M421.7 667.8h0M421.9 609.2h0M422.1 632.6h0M422.3 597.4h0M422.8 632.6h0M423.0 667.8h0M423.2 703.0h0M423.4 691.3h0M423.6 679.5h0M423.8 679.5h0M424.0 691.3h0M424.2 656.1h0M424.4 632.6h0M424.6 691.3h0M424.8 609.2h0M425.0 632.6h0M425.4 609.2h0M425.7 644.4h0M425.9 644.4h0M426.1 632.6h0M426.3 609.2h0M426.5 644.4h0M426.7 620.9h0M426.9 632.6h0M427.1 691.3h0M427.3 620.9h0M427.5 609.2h0M427.7 656.1h0M427.9 667.8h0M428.1 679.5h0M428.3 667.8h0M428.6 679.5h0M428.8 679.5h0M429.2 656.1h0M429.4 620.9h0M429.6 644.4h0M429.8 632.6h0M430.0 609.2h0M430.4 620.9h0M430.8 632.6h0M431.0 620.9h0M431.4 609.2h0M431.7 620.9h0M431.9 609.2h0M432.1 620.9h0M432.3 632.6h0M432.7 644.4h0M432.9 632.6h0M433.1 703.0h0M433.3 679.5h0M433.7 691.3h0M433.9 691.3h0M434.1 667.8h0M434.3 632.6h0M434.6 620.9h0M434.8 632.6h0M435.2 597.4h0M435.4 632.6h0M435.6 609.2h0M435.8 620.9h0M436.2 609.2h0M436.4 620.9h0M436.6 585.7h0M436.8 609.2h0M437.0 632.6h0M437.2 597.4h0M437.5 620.9h0M437.7 632.6h0M437.9 644.4h0M438.1 679.5h0M438.3 691.3h0M438.7 679.5h0M438.9 691.3h0M439.1 656.1h0M439.3 632.6h0M439.5 515.3h0M439.7 550.5h0M439.9 585.7h0M440.1 609.2h0M440.3 620.9h0M440.8 620.9h0M441.0 679.5h0M441.2 574.0h0M441.4 620.9h0M441.6 609.2h0M441.8 585.7h0M442.2 456.7h0M442.4 609.2h0M442.6 632.6h0M442.8 656.1h0M443.0 679.5h0M443.2 691.3h0M443.5 691.3h0M443.7 679.5h0M443.9 691.3h0M444.1 679.5h0M444.3 667.8h0M444.5 609.2h0M444.7 656.1h0M444.9 656.1h0M445.1 574.0h0M445.3 585.7h0M445.5 632.6h0M445.7 609.2h0M445.9 620.9h0M446.1 656.1h0M446.4 679.5h0M446.6 609.2h0M446.8 691.3h0M447.0 656.1h0M447.2 644.4h0M447.4 656.1h0M447.6 644.4h0M447.8 667.8h0M448.0 679.5h0M448.2 691.3h0M448.4 691.3h0M448.8 679.5h0M449.0 656.1h0M449.2 644.4h0M449.5 620.9h0M449.9 597.4h0M450.1 679.5h0M450.3 632.6h0M450.5 609.2h0M450.7 597.4h0M450.9 620.9h0M451.1 609.2h0M451.3 620.9h0M451.7 609.2h0M451.9 632.6h0M452.1 609.2h0M452.4 562.2h0M452.6 632.6h0M452.8 667.8h0M453.0 691.3h0M453.4 679.5h0M453.8 703.0h0M454.0 656.1h0M454.2 644.4h0M454.4 620.9h0M454.8 597.4h0M455.0 620.9h0M455.3 620.9h0M455.5 632.6h0M455.7 691.3h0M455.9 620.9h0M456.1 609.2h0M456.3 632.6h0M456.5 667.8h0M456.7 609.2h0M456.9 632.6h0M457.1 644.4h0M457.3 620.9h0M457.7 667.8h0M457.9 679.5h0M458.4 679.5h0M458.8 667.8h0M459.2 620.9h0M459.4 620.9h0M459.8 620.9h0M460.0 609.2h0M460.2 632.6h0M460.4 620.9h0M460.6 597.4h0M460.8 597.4h0M461.0 609.2h0M461.3 597.4h0M461.7 609.2h0M461.9 667.8h0M462.1 597.4h0M462.3 620.9h0M462.5 644.4h0M462.7 656.1h0M462.9 691.3h0M463.1 679.5h0M463.3 679.5h0M463.5 691.3h0M463.9 656.1h0M464.1 632.6h0M464.4 574.0h0M464.6 585.7h0M464.8 609.2h0M465.2 632.6h0M465.4 620.9h0M465.6 609.2h0M465.8 609.2h0M466.4 632.6h0M466.6 667.8h0M466.8 620.9h0M467.0 597.4h0M467.3 597.4h0M467.5 632.6h0M467.7 667.8h0M467.9 691.3h0M468.3 691.3h0M468.9 679.5h0M469.1 644.4h0M469.3 632.6h0M469.7 574.0h0M469.9 632.6h0M470.2 620.9h0M470.4 620.9h0M470.6 562.2h0M470.8 632.6h0M471.0 562.2h0M471.4 632.6h0M471.8 574.0h0M472.0 597.4h0M472.2 609.2h0M472.4 632.6h0M472.6 644.4h0M472.8 691.3h0M473.0 679.5h0M473.3 679.5h0M473.5 691.3h0M473.9 656.1h0M474.1 620.9h0M474.3 585.7h0M474.5 574.0h0M474.7 620.9h0M474.9 609.2h0M475.1 585.7h0M475.3 609.2h0M475.5 538.8h0M475.9 597.4h0M476.2 609.2h0M476.4 620.9h0M476.6 538.8h0M481.1 703.0h0M481.3 703.0h0M481.9 703.0h0M482.4 703.0h0M482.8 703.0h0M483.4 703.0h0M483.8 703.0h0M484.4 703.0h0M484.8 703.0h0M485.3 703.0h0M485.9 703.0h0M486.3 703.0h0M486.9 703.0h0M487.3 703.0h0M488.0 703.0h0M488.4 703.0h0M488.8 703.0h0M489.4 703.0h0M489.8 703.0h0M490.4 703.0h0M490.8 703.0h0M491.3 703.0h0M491.9 703.0h0M492.3 703.0h0M492.9 703.0h0M493.3 703.0h0M494.0 703.0h0M494.4 703.0h0M494.8 656.1h0M495.2 609.2h0M495.4 644.4h0M495.6 562.2h0M495.8 538.8h0M496.0 656.1h0M496.2 620.9h0M496.4 620.9h0M496.8 632.6h0M497.1 620.9h0M497.3 644.4h0M497.5 667.8h0M497.7 679.5h0M497.9 691.3h0M498.1 679.5h0M498.3 691.3h0M498.7 667.8h0M498.9 667.8h0M499.1 444.9h0M499.3 632.6h0M499.5 644.4h0M499.7 620.9h0M500.0 644.4h0M500.4 656.1h0M500.6 609.2h0M500.8 632.6h0M501.0 679.5h0M501.2 644.4h0M501.4 609.2h0M501.6 644.4h0M501.8 620.9h0M502.0 679.5h0M502.4 656.1h0M502.6 679.5h0M502.9 691.3h0M503.3 691.3h0M503.7 667.8h0M503.9 667.8h0M504.1 644.4h0M504.3 667.8h0M504.5 609.2h0M504.9 609.2h0M505.1 632.6h0M505.3 679.5h0M505.5 620.9h0M505.7 644.4h0M506.0 609.2h0M506.2 620.9h0M506.4 644.4h0M506.6 620.9h0M506.8 574.0h0M507.0 585.7h0M507.2 656.1h0M507.4 679.5h0M507.6 667.8h0M507.8 679.5h0M508.0 667.8h0M508.4 667.8h0M508.6 656.1h0M508.9 632.6h0M509.1 620.9h0M509.3 632.6h0M509.5 691.3h0M509.7 644.4h0M509.9 574.0h0M510.1 620.9h0M510.3 562.2h0M510.5 632.6h0M510.7 609.2h0M510.9 644.4h0M511.1 667.8h0M511.3 574.0h0M511.5 632.6h0M511.8 679.5h0M512.0 609.2h0M512.2 656.1h0M512.4 632.6h0M512.6 691.3h0M512.8 691.3h0M513.4 691.3h0M513.6 667.8h0M513.8 609.2h0M514.0 562.2h0M514.2 585.7h0M514.4 597.4h0M514.6 538.8h0M514.9 562.2h0M515.1 597.4h0M515.3 597.4h0M515.5 609.2h0M515.9 585.7h0M516.1 609.2h0M516.3 620.9h0M516.5 597.4h0M516.7 609.2h0M516.9 620.9h0M517.3 656.1h0M517.5 691.3h0M517.8 691.3h0M518.2 679.5h0M518.4 679.5h0M518.6 667.8h0M518.8 632.6h0M519.0 585.7h0M519.2 609.2h0M519.4 574.0h0M519.6 620.9h0M519.8 597.4h0M520.0 585.7h0M520.4 597.4h0M520.7 609.2h0M520.9 597.4h0M521.1 609.2h0M521.3 609.2h0M521.5 597.4h0M521.7 620.9h0M521.9 620.9h0M522.1 644.4h0M522.3 656.1h0M522.5 679.5h0M522.7 691.3h0M522.9 679.5h0M523.3 691.3h0M523.5 667.8h0M523.8 644.4h0M524.0 609.2h0M524.2 632.6h0M524.4 620.9h0M524.6 597.4h0M524.8 620.9h0M525.2 679.5h0M525.4 585.7h0M525.6 620.9h0M525.8 609.2h0M526.0 620.9h0M526.2 632.6h0M526.4 632.6h0M526.7 620.9h0M526.9 691.3h0M527.1 644.4h0M527.3 667.8h0M527.5 691.3h0M527.7 679.5h0M527.9 691.3h0M528.1 679.5h0M528.3 679.5h0M528.5 667.8h0M528.7 644.4h0M528.9 574.0h0M529.1 632.6h0M529.3 597.4h0M529.8 620.9h0M530.0 597.4h0M530.4 679.5h0M530.6 609.2h0M530.8 597.4h0M531.0 585.7h0M531.4 597.4h0M531.6 620.9h0M531.8 597.4h0M532.0 644.4h0M532.2 667.8h0M532.4 679.5h0M532.9 679.5h0M533.3 679.5h0M533.7 632.6h0M533.9 597.4h0M534.1 632.6h0M534.3 620.9h0M534.5 632.6h0M534.9 632.6h0M535.1 597.4h0M535.3 620.9h0M535.6 597.4h0M535.8 609.2h0M536.0 632.6h0M536.2 597.4h0M536.4 597.4h0M536.6 679.5h0M536.8 585.7h0M537.0 609.2h0M537.2 656.1h0M537.4 691.3h0M537.8 691.3h0M538.2 679.5h0M538.4 679.5h0M538.7 656.1h0M538.9 620.9h0M539.1 656.1h0M539.3 679.5h0M539.5 656.1h0M539.7 620.9h0M539.9 620.9h0M540.1 632.6h0M540.3 644.4h0M540.7 632.6h0M540.9 644.4h0M541.3 656.1h0M541.8 632.6h0M542.0 644.4h0M542.2 691.3h0M542.4 691.3h0M542.6 679.5h0M542.8 691.3h0M543.2 679.5h0M543.4 656.1h0M543.6 632.6h0M543.8 597.4h0M544.2 632.6h0M544.5 620.9h0M544.7 679.5h0M544.9 620.9h0M545.1 609.2h0M545.3 609.2h0M545.5 644.4h0M545.9 620.9h0M546.1 632.6h0M546.3 644.4h0M546.5 620.9h0M546.9 656.1h0M547.1 667.8h0M547.3 679.5h0M547.6 691.3h0M547.8 691.3h0M548.2 703.0h0M548.4 667.8h0M548.6 632.6h0M548.8 644.4h0M549.2 609.2h0M549.4 679.5h0M549.6 632.6h0M549.8 632.6h0M550.2 620.9h0M550.5 609.2h0M550.7 644.4h0M550.9 550.5h0M551.1 609.2h0M551.3 632.6h0M551.5 609.2h0M551.7 597.4h0M551.9 620.9h0M552.1 667.8h0M552.3 691.3h0M552.5 679.5h0M552.9 691.3h0M553.1 679.5h0M553.4 679.5h0M553.6 667.8h0M553.8 632.6h0M554.0 667.8h0M554.2 656.1h0M554.4 644.4h0M554.8 656.1h0M555.0 632.6h0M555.4 632.6h0M555.8 656.1h0M556.0 679.5h0M556.2 644.4h0M556.5 667.8h0M556.7 632.6h0M556.9 656.1h0M557.3 691.3h0M557.9 691.3h0M558.3 679.5h0M558.7 691.3h0M558.9 632.6h0M559.4 691.3h0M559.6 620.9h0M559.8 679.5h0M560.0 644.4h0M560.2 632.6h0M560.4 656.1h0M560.8 679.5h0M561.0 644.4h0M561.2 656.1h0M561.4 667.8h0M561.8 679.5h0M562.0 667.8h0M562.2 691.3h0M562.5 679.5h0M562.9 691.3h0M563.3 679.5h0M563.5 644.4h0M563.7 597.4h0M563.9 609.2h0M564.3 609.2h0M564.5 597.4h0M564.9 597.4h0M565.1 632.6h0M565.4 609.2h0M565.8 609.2h0M566.0 667.8h0M566.2 620.9h0M566.4 597.4h0M566.6 632.6h0M566.8 632.6h0M567.0 691.3h0M567.4 691.3h0M567.8 691.3h0M568.3 667.8h0M568.5 644.4h0M568.7 597.4h0M568.9 597.4h0M569.1 574.0h0M569.3 632.6h0M569.5 620.9h0M569.7 609.2h0M569.9 691.3h0M570.1 632.6h0M570.3 597.4h0M570.5 609.2h0M570.7 679.5h0M570.9 597.4h0M571.1 632.6h0M571.4 679.5h0M571.6 597.4h0M571.8 632.6h0M572.2 691.3h0M572.4 679.5h0M572.6 691.3h0M572.8 679.5h0M573.4 656.1h0M573.6 644.4h0M573.8 644.4h0M574.0 609.2h0M574.3 597.4h0M574.5 644.4h0M574.7 632.6h0M574.9 609.2h0M575.1 620.9h0M575.3 656.1h0M575.5 644.4h0M575.9 644.4h0M576.3 644.4h0M576.7 656.1h0M576.9 679.5h0M577.4 691.3h0M577.8 679.5h0M578.0 691.3h0M578.4 656.1h0M578.6 609.2h0M578.8 597.4h0M579.0 644.4h0M579.4 562.2h0M579.6 620.9h0M579.8 644.4h0M580.3 644.4h0M580.5 667.8h0M580.7 620.9h0M580.9 585.7h0M581.1 644.4h0M581.3 632.6h0M581.5 609.2h0M581.9 644.4h0M582.1 691.3h0M582.3 691.3h0M582.7 679.5h0M582.9 691.3h0M583.2 667.8h0M583.4 644.4h0M583.6 620.9h0M583.8 632.6h0M584.0 620.9h0M584.2 656.1h0M584.4 644.4h0M584.6 620.9h0M584.8 632.6h0M585.0 656.1h0M585.4 644.4h0M585.6 656.1h0M585.8 644.4h0M586.1 620.9h0M586.3 644.4h0M586.5 632.6h0M586.7 667.8h0M586.9 691.3h0M587.3 691.3h0M587.9 703.0h0M588.1 667.8h0M588.3 656.1h0M588.5 609.2h0M588.7 620.9h0M588.9 620.9h0M589.4 620.9h0M589.8 632.6h0M590.0 609.2h0M590.4 562.2h0M590.6 644.4h0M590.8 609.2h0M591.0 620.9h0M591.2 644.4h0M591.4 667.8h0M591.6 644.4h0M591.8 656.1h0M592.1 679.5h0M592.3 691.3h0M592.5 679.5h0M592.9 679.5h0M593.3 656.1h0M593.5 632.6h0M593.9 632.6h0M594.1 656.1h0M594.3 656.1h0M594.5 644.4h0M594.7 632.6h0M595.0 632.6h0M595.2 679.5h0M595.4 620.9h0M595.8 656.1h0M596.0 620.9h0M596.2 691.3h0M596.4 644.4h0M596.6 667.8h0M596.8 656.1h0M597.0 691.3h0M597.4 691.3h0M597.8 691.3h0M598.1 679.5h0M598.3 644.4h0M598.5 468.4h0M598.7 538.8h0M598.9 656.1h0M599.1 620.9h0M599.3 656.1h0M599.5 644.4h0M599.7 620.9h0M599.9 609.2h0M600.1 644.4h0M600.3 632.6h0M601.0 620.9h0M601.2 632.6h0M601.4 656.1h0M601.6 667.8h0M601.8 656.1h0M602.0 691.3h0M602.4 679.5h0M602.6 691.3h0M602.8 679.5h0M603.2 620.9h0M603.4 632.6h0M603.6 620.9h0M603.8 691.3h0M604.1 620.9h0M604.3 597.4h0M604.5 620.9h0M604.9 632.6h0M605.1 609.2h0M605.3 679.5h0M605.5 550.5h0M605.7 667.8h0M605.9 574.0h0M606.1 597.4h0M606.3 632.6h0M606.5 609.2h0M606.7 656.1h0M607.0 667.8h0M607.4 667.8h0M607.6 679.5h0M607.8 679.5h0M608.0 667.8h0M608.2 644.4h0M608.4 620.9h0M608.6 644.4h0M608.8 644.4h0M609.0 620.9h0M609.2 632.6h0M609.4 585.7h0M609.6 620.9h0M609.9 597.4h0M610.1 644.4h0M610.3 597.4h0M610.7 632.6h0M610.9 632.6h0M611.1 656.1h0M611.3 620.9h0M611.5 656.1h0M611.9 679.5h0M612.1 691.3h0M612.3 679.5h0M612.7 691.3h0M613.0 656.1h0M613.4 574.0h0M613.6 632.6h0M613.8 644.4h0M614.0 620.9h0M614.2 667.8h0M614.4 632.6h0M614.6 656.1h0M614.8 620.9h0M615.0 679.5h0M615.2 691.3h0M615.4 644.4h0M615.6 609.2h0M615.9 656.1h0M616.1 609.2h0M616.3 679.5h0M616.5 656.1h0M616.9 691.3h0M617.1 679.5h0M617.3 679.5h0M617.9 679.5h0M618.1 632.6h0M618.3 620.9h0M618.5 644.4h0M618.8 609.2h0M619.0 691.3h0M619.2 632.6h0M619.4 585.7h0M619.6 644.4h0M619.8 632.6h0M620.4 620.9h0M620.6 609.2h0M620.8 609.2h0M621.0 632.6h0M621.4 632.6h0M621.6 656.1h0M621.9 691.3h0M622.1 679.5h0M622.3 679.5h0M622.5 691.3h0M622.9 679.5h0M623.1 667.8h0M623.3 620.9h0M623.5 644.4h0M623.9 656.1h0M624.1 644.4h0M624.3 644.4h0M624.5 620.9h0M624.8 620.9h0M625.0 644.4h0M625.4 620.9h0M625.6 691.3h0M625.8 620.9h0M626.0 644.4h0M626.2 550.5h0M626.4 667.8h0M626.6 679.5h0M626.8 667.8h0M627.4 679.5h0M627.7 667.8h0M627.9 644.4h0M628.3 644.4h0M628.5 620.9h0M628.7 656.1h0M628.9 620.9h0M629.1 667.8h0M629.3 620.9h0M629.5 609.2h0M629.9 656.1h0M630.3 620.9h0M630.5 656.1h0M630.8 644.4h0M631.0 632.6h0M631.2 620.9h0M631.4 656.1h0M631.6 667.8h0M631.8 691.3h0M632.0 679.5h0M632.4 691.3h0M632.6 703.0h0M632.8 679.5h0M633.0 656.1h0M633.2 620.9h0M633.4 620.9h0M633.7 609.2h0M633.9 597.4h0M634.1 632.6h0M634.3 656.1h0M634.5 585.7h0M634.7 632.6h0M634.9 644.4h0M635.3 597.4h0M635.5 632.6h0M635.7 644.4h0M635.9 609.2h0M636.1 644.4h0M636.3 679.5h0M636.5 691.3h0M636.8 691.3h0M637.4 691.3h0M637.8 667.8h0M638.0 656.1h0M638.4 644.4h0M638.6 620.9h0M638.8 667.8h0M639.0 597.4h0M639.4 656.1h0M639.9 656.1h0M640.3 632.6h0M640.5 620.9h0M640.7 609.2h0M640.9 656.1h0M641.1 632.6h0M641.3 656.1h0M641.5 667.8h0M641.7 691.3h0M641.9 691.3h0M642.3 691.3h0M642.8 679.5h0M643.0 656.1h0M643.2 632.6h0M643.4 632.6h0M643.8 632.6h0M644.0 597.4h0M644.2 644.4h0M644.4 620.9h0M644.8 632.6h0M645.2 609.2h0M645.4 609.2h0M645.7 632.6h0M645.9 644.4h0M646.1 632.6h0M646.3 632.6h0M646.5 656.1h0M646.7 679.5h0M646.9 679.5h0M647.3 679.5h0M647.7 667.8h0M647.9 632.6h0M648.1 679.5h0M648.3 632.6h0M648.6 644.4h0M648.8 691.3h0M649.0 620.9h0M649.2 632.6h0M649.4 609.2h0M649.6 644.4h0M649.8 656.1h0M650.0 585.7h0M650.2 620.9h0M650.4 656.1h0M650.6 632.6h0M650.8 644.4h0M651.0 656.1h0M651.5 679.5h0M651.7 691.3h0M651.9 691.3h0M652.3 691.3h0M652.7 667.8h0M652.9 656.1h0M653.1 609.2h0M653.3 644.4h0M653.7 620.9h0M653.9 644.4h0M654.1 597.4h0M654.3 597.4h0M654.6 620.9h0M654.8 609.2h0M655.0 632.6h0M655.4 632.6h0M655.8 644.4h0M656.4 656.1h0M656.6 691.3h0M656.8 691.3h0M657.0 679.5h0M657.5 703.0h0M657.7 656.1h0M657.9 679.5h0M658.3 644.4h0M658.5 632.6h0M658.7 667.8h0M658.9 656.1h0M659.1 667.8h0M659.3 632.6h0M659.5 644.4h0M659.7 620.9h0M659.9 632.6h0M660.1 691.3h0M660.4 667.8h0M660.6 632.6h0M660.8 656.1h0M661.0 632.6h0M661.2 667.8h0M661.4 667.8h0M661.6 679.5h0M661.8 679.5h0M662.0 691.3h0M662.4 679.5h0M662.6 667.8h0M662.8 691.3h0M663.0 597.4h0M663.2 609.2h0M663.5 632.6h0M663.7 691.3h0M663.9 632.6h0M664.1 644.4h0M664.3 644.4h0M664.5 656.1h0M664.7 620.9h0M664.9 644.4h0M665.3 632.6h0M665.5 620.9h0M665.9 656.1h0M666.1 644.4h0M666.4 691.3h0M666.8 691.3h0M667.2 679.5h0M667.4 691.3h0M667.8 667.8h0M668.0 632.6h0M668.4 656.1h0M668.8 644.4h0M669.0 632.6h0M669.2 656.1h0M669.5 656.1h0M669.7 644.4h0M669.9 644.4h0M670.1 667.8h0M670.3 656.1h0M670.5 667.8h0M670.7 632.6h0M670.9 550.5h0M671.1 667.8h0M671.3 667.8h0M671.5 679.5h0M671.9 679.5h0M672.4 679.5h0M672.6 667.8h0M672.8 656.1h0M673.4 691.3h0M673.6 656.1h0M673.8 656.1h0M674.0 620.9h0M674.2 667.8h0M674.4 620.9h0M674.6 609.2h0M674.8 632.6h0M675.0 644.4h0M675.3 644.4h0M675.5 656.1h0M675.7 620.9h0M675.9 656.1h0M676.1 644.4h0M676.3 656.1h0M676.5 679.5h0M676.7 691.3h0M676.9 691.3h0M677.1 679.5h0M677.3 691.3h0M677.5 679.5h0M677.7 667.8h0M677.9 656.1h0M678.1 632.6h0M678.4 632.6h0M678.6 644.4h0M678.8 620.9h0M679.0 644.4h0M679.2 632.6h0M679.4 667.8h0M679.6 644.4h0M679.8 644.4h0M680.2 656.1h0M680.4 644.4h0M680.6 656.1h0M680.8 585.7h0M681.0 667.8h0M681.3 667.8h0M681.5 679.5h0M681.9 679.5h0M682.3 667.8h0M682.5 679.5h0M682.7 632.6h0M682.9 550.5h0M683.1 620.9h0M683.3 632.6h0M683.5 644.4h0M683.7 656.1h0M683.9 632.6h0M684.2 656.1h0M684.4 632.6h0M684.6 644.4h0M684.8 632.6h0M685.2 656.1h0M685.4 562.2h0M685.6 656.1h0M685.8 656.1h0M686.0 667.8h0M686.4 667.8h0M686.8 679.5h0M687.0 667.8h0M687.3 667.8h0M687.5 679.5h0M687.7 656.1h0M687.9 679.5h0M688.1 644.4h0M688.3 620.9h0M688.5 644.4h0M688.7 656.1h0M688.9 691.3h0M689.1 620.9h0M689.3 632.6h0M689.5 644.4h0M689.7 656.1h0M689.9 656.1h0M690.4 632.6h0M690.6 620.9h0M690.8 620.9h0M691.0 632.6h0M691.2 656.1h0M691.4 691.3h0M691.8 691.3h0M692.4 691.3h0M692.6 656.1h0M692.8 609.2h0M693.3 585.7h0M693.5 597.4h0M693.9 632.6h0M694.3 632.6h0M694.5 679.5h0M694.7 609.2h0M694.9 609.2h0M695.3 632.6h0M695.5 620.9h0M695.7 609.2h0M695.9 632.6h0M696.2 644.4h0M696.4 679.5h0M696.8 691.3h0M697.2 679.5h0M697.4 656.1h0M697.8 620.9h0M698.0 632.6h0M698.4 620.9h0M698.6 644.4h0M698.8 632.6h0M699.1 644.4h0M699.3 609.2h0M699.5 632.6h0M699.9 620.9h0M700.1 609.2h0M700.3 620.9h0M700.5 644.4h0M700.9 644.4h0M701.1 667.8h0M701.3 679.5h0M701.9 667.8h0M702.2 679.5h0M702.4 679.5h0M702.6 656.1h0M702.8 620.9h0M703.0 656.1h0M703.4 632.6h0M703.6 620.9h0M703.8 644.4h0M704.2 620.9h0M704.4 644.4h0M704.6 656.1h0M704.8 679.5h0M705.1 644.4h0M705.3 656.1h0M705.7 620.9h0M705.9 644.4h0M706.1 679.5h0M706.3 691.3h0M706.7 679.5h0M706.9 691.3h0M707.1 679.5h0M707.3 667.8h0M707.5 632.6h0M707.7 562.2h0M708.0 644.4h0M708.2 609.2h0M708.4 609.2h0M708.8 609.2h0M709.0 644.4h0M709.2 632.6h0M709.4 632.6h0M709.8 632.6h0M710.0 609.2h0M710.4 609.2h0M710.8 656.1h0M711.3 691.3h0M711.9 691.3h0M712.3 644.4h0M712.7 597.4h0M712.9 585.7h0M713.1 620.9h0M713.3 632.6h0M713.5 620.9h0M714.0 609.2h0M714.4 632.6h0M714.6 667.8h0M714.8 620.9h0M715.0 609.2h0M715.4 585.7h0M715.6 620.9h0M715.8 609.2h0M716.0 667.8h0M716.2 679.5h0M716.4 691.3h0M716.9 691.3h0M717.3 656.1h0M717.7 632.6h0M717.9 644.4h0M718.1 609.2h0M718.3 609.2h0M718.5 632.6h0M718.7 656.1h0M718.9 632.6h0M719.1 620.9h0M719.3 585.7h0M719.5 656.1h0M719.7 632.6h0M720.0 620.9h0M720.2 656.1h0M720.4 656.1h0M720.6 609.2h0M720.8 644.4h0M721.0 691.3h0M721.2 679.5h0M721.4 667.8h0M721.8 679.5h0M722.0 667.8h0M722.4 644.4h0M722.6 667.8h0M722.9 667.8h0M723.1 632.6h0M723.3 644.4h0M723.5 632.6h0M723.7 656.1h0M723.9 656.1h0M724.1 632.6h0M724.3 667.8h0M724.7 632.6h0M724.9 667.8h0M725.1 644.4h0M725.3 632.6h0M725.8 679.5h0M726.0 656.1h0M726.4 679.5h0M726.8 679.5h0M727.0 691.3h0M727.2 667.8h0M727.4 644.4h0M727.6 632.6h0M727.8 620.9h0M728.0 585.7h0M728.4 644.4h0M728.6 632.6h0M728.9 632.6h0M729.1 656.1h0M729.3 632.6h0M729.5 620.9h0M729.7 656.1h0M729.9 656.1h0M730.1 679.5h0M730.3 632.6h0M730.7 667.8h0M730.9 679.5h0M731.1 691.3h0M731.3 679.5h0M731.5 691.3h0M731.8 679.5h0M732.0 691.3h0M732.2 656.1h0M732.4 644.4h0M732.6 597.4h0M732.8 644.4h0M733.0 632.6h0M733.4 644.4h0M733.6 632.6h0M733.8 679.5h0M734.0 632.6h0M734.2 644.4h0M734.4 632.6h0M734.6 609.2h0M734.9 632.6h0M735.1 620.9h0M735.3 632.6h0M735.5 609.2h0M735.9 667.8h0M736.1 691.3h0M736.3 691.3h0M736.9 679.5h0M737.3 656.1h0M737.8 656.1h0M738.0 644.4h0M738.2 632.6h0M738.4 644.4h0M738.6 632.6h0M738.8 632.6h0M739.0 574.0h0M739.2 644.4h0M739.4 656.1h0M739.8 597.4h0M740.0 562.2h0M740.2 691.3h0M740.4 644.4h0M740.7 656.1h0M740.9 679.5h0M741.1 667.8h0M741.3 679.5h0M741.9 667.8h0M742.1 656.1h0M742.3 644.4h0M742.5 632.6h0M742.9 632.6h0M743.1 644.4h0M743.3 632.6h0M743.5 609.2h0M743.8 620.9h0M744.0 632.6h0M744.4 632.6h0M744.6 609.2h0M744.8 644.4h0M745.2 632.6h0M745.4 667.8h0M745.6 656.1h0M745.8 667.8h0M746.0 691.3h0M746.2 679.5h0M746.4 679.5h0M746.7 691.3h0M746.9 691.3h0M747.1 667.8h0M747.3 656.1h0M747.5 644.4h0M747.7 632.6h0M747.9 632.6h0M748.3 620.9h0M748.5 644.4h0M748.7 632.6h0M748.9 609.2h0M749.1 632.6h0M749.3 620.9h0M749.6 632.6h0M749.8 632.6h0M750.0 620.9h0M750.4 609.2h0M750.6 632.6h0M750.8 656.1h0M751.0 679.5h0M751.4 691.3h0M751.6 679.5h0M751.8 691.3h0M752.0 679.5h0M752.2 656.1h0M752.4 644.4h0M752.7 620.9h0M752.9 644.4h0M753.1 691.3h0M753.3 644.4h0M753.5 632.6h0M753.9 644.4h0M754.1 620.9h0M754.3 667.8h0M754.5 656.1h0M754.7 632.6h0M754.9 656.1h0M755.1 609.2h0M755.3 620.9h0M755.6 667.8h0M755.8 656.1h0M756.0 679.5h0M756.4 679.5h0M756.6 691.3h0M756.8 679.5h0M757.0 667.8h0M757.2 632.6h0M757.4 644.4h0M757.6 620.9h0M757.8 644.4h0M758.5 632.6h0M758.7 620.9h0M758.9 632.6h0M759.1 609.2h0M759.3 597.4h0M759.5 632.6h0M759.7 609.2h0M759.9 644.4h0M760.1 632.6h0M760.3 574.0h0M760.5 632.6h0M760.7 679.5h0M760.9 691.3h0M761.1 679.5h0M761.3 691.3h0M761.6 679.5h0M761.8 691.3h0M762.0 656.1h0M762.2 632.6h0M762.4 609.2h0M762.8 620.9h0M763.0 609.2h0M763.4 632.6h0M763.8 609.2h0M764.2 632.6h0M764.5 667.8h0M764.7 644.4h0M764.9 644.4h0M765.1 609.2h0M765.3 620.9h0M765.5 656.1h0M765.7 667.8h0M765.9 691.3h0M766.3 691.3h0M766.7 679.5h0M766.9 656.1h0M767.1 644.4h0M767.4 597.4h0M767.6 620.9h0M767.8 644.4h0M768.0 620.9h0M768.4 609.2h0M768.8 620.9h0M769.0 632.6h0M769.2 679.5h0M769.4 609.2h0M769.6 632.6h0M769.8 620.9h0M770.0 597.4h0M770.2 609.2h0M770.5 632.6h0M770.7 656.1h0M770.9 691.3h0M771.3 691.3h0M771.5 679.5h0M771.9 679.5h0M772.1 656.1h0M772.3 620.9h0M772.5 656.1h0M772.7 644.4h0M772.9 632.6h0M773.1 667.8h0M773.4 656.1h0M773.8 644.4h0M774.0 667.8h0M774.4 632.6h0M774.6 656.1h0M774.8 632.6h0M775.0 656.1h0M775.2 644.4h0M775.4 679.5h0M775.6 656.1h0M775.8 691.3h0M776.2 679.5h0M776.5 679.5h0M776.9 667.8h0M777.1 644.4h0M777.3 644.4h0M777.5 656.1h0M777.7 620.9h0M777.9 656.1h0M778.1 644.4h0M778.3 644.4h0M778.5 609.2h0M778.7 656.1h0M778.9 632.6h0M779.1 644.4h0M779.4 585.7h0M779.6 632.6h0M779.8 609.2h0M780.0 656.1h0M780.4 667.8h0M780.6 679.5h0M780.8 679.5h0M781.0 691.3h0M781.4 679.5h0M781.6 691.3h0M781.8 691.3h0M782.0 644.4h0M782.3 620.9h0M782.5 632.6h0M782.7 609.2h0M782.9 644.4h0M783.1 597.4h0M783.3 632.6h0M783.5 609.2h0M783.9 609.2h0M784.1 620.9h0M784.3 620.9h0M784.5 644.4h0M784.9 620.9h0M785.1 656.1h0M785.4 632.6h0M785.6 679.5h0M785.8 679.5h0M786.0 691.3h0M786.4 679.5h0M786.8 656.1h0M787.2 620.9h0M787.4 632.6h0M787.6 609.2h0M787.8 656.1h0M788.0 644.4h0M788.3 597.4h0M788.5 656.1h0M788.7 644.4h0M788.9 667.8h0M789.1 620.9h0M789.3 632.6h0M789.5 656.1h0M789.9 620.9h0M790.3 644.4h0M790.5 679.5h0M790.9 679.5h0M791.4 679.5h0M791.8 667.8h0M792.0 632.6h0M792.2 609.2h0M792.4 691.3h0M792.6 620.9h0M792.8 667.8h0M793.0 620.9h0M793.2 609.2h0M793.4 609.2h0M793.6 538.8h0M793.8 421.5h0M794.0 609.2h0M794.3 644.4h0M794.7 609.2h0M794.9 609.2h0M795.1 667.8h0M795.3 644.4h0M795.5 667.8h0M795.7 679.5h0M795.9 679.5h0M796.3 691.3h0M796.7 679.5h0M796.9 632.6h0M797.2 597.4h0M797.4 597.4h0M797.6 667.8h0M797.8 585.7h0M798.0 609.2h0M798.4 691.3h0M798.6 632.6h0M798.8 597.4h0M799.2 609.2h0M799.4 609.2h0M799.6 667.8h0M799.8 609.2h0M800.1 597.4h0M800.3 632.6h0M800.5 667.8h0M800.7 691.3h0M800.9 691.3h0M801.3 691.3h0M801.7 667.8h0M801.9 656.1h0M802.1 503.6h0M802.3 620.9h0M802.5 656.1h0M802.7 609.2h0M802.9 620.9h0M803.2 667.8h0M803.4 644.4h0M803.8 691.3h0M804.0 632.6h0M804.4 632.6h0M804.6 620.9h0M804.8 515.3h0M805.0 620.9h0M805.2 632.6h0M805.4 656.1h0M805.6 691.3h0M805.8 679.5h0M806.3 679.5h0M806.7 644.4h0M806.9 632.6h0M807.1 609.2h0M807.3 609.2h0M807.7 620.9h0M807.9 620.9h0M808.1 609.2h0M808.3 632.6h0M808.5 644.4h0M808.9 550.5h0M809.2 632.6h0M809.4 620.9h0M809.8 632.6h0M810.0 597.4h0M810.4 644.4h0M810.6 691.3h0M810.8 679.5h0M811.0 691.3h0M811.4 703.0h0M811.6 667.8h0M811.8 620.9h0M812.1 632.6h0M812.3 644.4h0M812.5 632.6h0M812.7 609.2h0M812.9 644.4h0M813.3 644.4h0M813.9 620.9h0M814.1 644.4h0M814.3 597.4h0M814.5 632.6h0M814.7 691.3h0M815.0 632.6h0M815.2 644.4h0M815.4 679.5h0M815.8 679.5h0M816.4 679.5h0M816.6 656.1h0M816.8 656.1h0M817.0 585.7h0M817.2 609.2h0M817.4 632.6h0M817.6 597.4h0M817.8 632.6h0M818.1 585.7h0M818.3 620.9h0M818.5 632.6h0M818.9 620.9h0M819.1 632.6h0M819.3 562.2h0M819.5 609.2h0M819.7 597.4h0M819.9 632.6h0M820.1 667.8h0M820.3 644.4h0M820.5 691.3h0M820.7 679.5h0M821.0 679.5h0M821.2 691.3h0M821.4 691.3h0M821.6 667.8h0M821.8 620.9h0M822.0 597.4h0M822.2 585.7h0M822.4 574.0h0M822.6 597.4h0M822.8 620.9h0M823.2 609.2h0M823.4 609.2h0M823.6 620.9h0M823.9 620.9h0M824.1 597.4h0M824.3 585.7h0M824.9 609.2h0M825.1 644.4h0M825.3 656.1h0M825.5 691.3h0M825.9 691.3h0M826.1 679.5h0M826.3 691.3h0M826.5 667.8h0M826.7 632.6h0M827.0 491.9h0M827.2 632.6h0M827.4 597.4h0M827.6 609.2h0M827.8 597.4h0M828.2 609.2h0M828.4 632.6h0M828.6 620.9h0M828.8 609.2h0M829.0 632.6h0M829.2 620.9h0M829.4 597.4h0M829.9 620.9h0M830.3 679.5h0M830.5 691.3h0M830.9 691.3h0M831.3 691.3h0M831.5 679.5h0M831.7 620.9h0M831.9 609.2h0M832.1 597.4h0M832.3 609.2h0M832.5 620.9h0M832.8 585.7h0M833.0 620.9h0M833.2 597.4h0M833.4 585.7h0M833.6 597.4h0M833.8 597.4h0M834.0 538.8h0M834.2 609.2h0M834.4 585.7h0M834.6 620.9h0M834.8 620.9h0M835.0 644.4h0M835.4 703.0h0M835.6 679.5h0M835.9 679.5h0M836.3 691.3h0M836.5 667.8h0M836.7 644.4h0M836.9 620.9h0M837.1 609.2h0M837.3 632.6h0M837.5 609.2h0M837.9 620.9h0M838.1 597.4h0M838.3 620.9h0M838.8 597.4h0M839.0 632.6h0M839.2 620.9h0M839.4 632.6h0M839.6 597.4h0M839.8 620.9h0M840.0 632.6h0M840.2 667.8h0M840.4 691.3h0M840.8 679.5h0M841.0 691.3h0M841.2 703.0h0M841.4 679.5h0M841.6 656.1h0M841.9 656.1h0M842.1 632.6h0M842.3 609.2h0M842.5 644.4h0M842.7 656.1h0M842.9 644.4h0M843.1 632.6h0M843.3 644.4h0M843.7 632.6h0M843.9 620.9h0M844.1 656.1h0M844.3 656.1h0M844.5 632.6h0M844.8 656.1h0M845.2 667.8h0M845.4 691.3h0M845.6 679.5h0M845.8 691.3h0M846.0 679.5h0M846.4 667.8h0M846.6 609.2h0M846.8 609.2h0M847.0 597.4h0M847.2 585.7h0M847.4 679.5h0M847.7 609.2h0M847.9 585.7h0M848.1 562.2h0M848.3 585.7h0M848.5 609.2h0M848.9 597.4h0M849.3 620.9h0M849.5 574.0h0M849.7 597.4h0M849.9 644.4h0M850.1 667.8h0M850.3 703.0h0M850.5 691.3h0M850.8 691.3h0M851.4 667.8h0M851.6 679.5h0M851.8 620.9h0M852.0 644.4h0M852.2 679.5h0M852.4 679.5h0M852.6 644.4h0M852.8 620.9h0M853.0 644.4h0M853.4 656.1h0M853.7 620.9h0M853.9 620.9h0M854.1 632.6h0M854.3 644.4h0M854.5 632.6h0M854.7 620.9h0M854.9 656.1h0M855.3 691.3h0M855.9 691.3h0M856.3 667.8h0M856.6 620.9h0M856.8 620.9h0M857.0 644.4h0M857.2 609.2h0M857.4 679.5h0M857.6 609.2h0M857.8 620.9h0M858.0 609.2h0M858.4 620.9h0M858.6 609.2h0M858.8 644.4h0M859.0 609.2h0M859.4 538.8h0M859.7 632.6h0M859.9 644.4h0M860.1 656.1h0M860.3 667.8h0M860.5 679.5h0M860.9 667.8h0M861.3 667.8h0M861.5 620.9h0M861.7 609.2h0M861.9 597.4h0M862.1 644.4h0M862.3 609.2h0M862.6 644.4h0M862.8 644.4h0M863.0 609.2h0M863.2 667.8h0M863.4 632.6h0M863.6 620.9h0M863.8 609.2h0M864.0 644.4h0M864.2 632.6h0M864.4 632.6h0M864.6 609.2h0M864.8 632.6h0M865.0 656.1h0M865.2 691.3h0M865.5 691.3h0M865.9 691.3h0M866.1 703.0h0M866.3 667.8h0M866.5 620.9h0M866.9 644.4h0M867.1 609.2h0M867.3 597.4h0M867.5 667.8h0M867.7 644.4h0M867.9 597.4h0M868.1 620.9h0M868.3 632.6h0M868.6 609.2h0M868.8 609.2h0M869.0 620.9h0M869.4 503.6h0M869.6 374.6h0M869.8 632.6h0M870.0 667.8h0M870.2 679.5h0M870.4 691.3h0M870.8 691.3h0M871.2 667.8h0M871.5 656.1h0M871.7 644.4h0M871.9 656.1h0M872.1 644.4h0M872.3 620.9h0M872.9 656.1h0M873.1 632.6h0M873.3 620.9h0M873.5 538.8h0M873.7 679.5h0M873.9 667.8h0M874.1 644.4h0M874.3 620.9h0M874.6 644.4h0M874.8 667.8h0M875.0 691.3h0M875.4 691.3h0M875.8 679.5h0M876.0 691.3h0M876.4 632.6h0M876.8 620.9h0M877.0 609.2h0M877.5 620.9h0M877.9 632.6h0M878.1 609.2h0M878.3 609.2h0M878.5 597.4h0M878.7 620.9h0M878.9 597.4h0M879.1 632.6h0M879.3 597.4h0M879.5 585.7h0M879.7 656.1h0M879.9 667.8h0M880.1 679.5h0M880.4 691.3h0M880.8 691.3h0M881.2 679.5h0M881.4 632.6h0M881.6 585.7h0M881.8 609.2h0M882.0 597.4h0M882.2 562.2h0M882.4 597.4h0M882.6 609.2h0M882.8 620.9h0M883.0 550.5h0M883.2 597.4h0M883.5 667.8h0M883.7 597.4h0M883.9 620.9h0M884.1 667.8h0M884.3 620.9h0M884.5 574.0h0M884.7 644.4h0M884.9 667.8h0M885.1 691.3h0M885.3 691.3h0M885.5 679.5h0M885.9 703.0h0M886.1 656.1h0M886.4 620.9h0M886.6 597.4h0M886.8 632.6h0M887.0 585.7h0M887.2 620.9h0M887.4 620.9h0M887.6 609.2h0M887.8 632.6h0M888.0 609.2h0M888.4 609.2h0M888.6 597.4h0M888.8 597.4h0M889.0 620.9h0M889.3 632.6h0M889.7 620.9h0M889.9 679.5h0M890.1 691.3h0M890.3 679.5h0M890.7 691.3h0M890.9 679.5h0M891.1 667.8h0M891.3 644.4h0M891.5 620.9h0M891.7 597.4h0M891.9 679.5h0M892.1 597.4h0M892.4 632.6h0M892.6 620.9h0M892.8 597.4h0M893.0 620.9h0M893.4 597.4h0M893.6 620.9h0M893.8 609.2h0M894.4 679.5h0M894.6 644.4h0M894.8 667.8h0M895.0 679.5h0M895.3 691.3h0M895.5 679.5h0M895.9 703.0h0M896.1 679.5h0M896.3 632.6h0M896.5 644.4h0M896.7 656.1h0M896.9 667.8h0M897.1 620.9h0M897.3 632.6h0M897.5 620.9h0M897.7 656.1h0M897.9 644.4h0M898.2 632.6h0M898.4 620.9h0M898.6 632.6h0M898.8 656.1h0M899.2 620.9h0M899.4 632.6h0M899.6 667.8h0M899.8 679.5h0M900.0 691.3h0M900.4 691.3h0M900.6 679.5h0M900.8 691.3h0M901.0 679.5h0M901.3 656.1h0M901.5 620.9h0M901.7 632.6h0M901.9 632.6h0M902.1 609.2h0M902.3 609.2h0M902.5 632.6h0M902.9 550.5h0M903.1 644.4h0M903.3 585.7h0M903.5 620.9h0M903.7 632.6h0M903.9 620.9h0M904.4 597.4h0M904.6 644.4h0M904.8 679.5h0M905.0 703.0h0M905.2 691.3h0M905.4 691.3h0M905.8 691.3h0M906.0 667.8h0M906.2 632.6h0M906.4 597.4h0M906.6 491.9h0M906.8 679.5h0M907.0 632.6h0M907.3 620.9h0M907.7 585.7h0M907.9 550.5h0M908.1 585.7h0M908.3 597.4h0M908.5 620.9h0M908.7 632.6h0M908.9 609.2h0M909.3 691.3h0M909.5 644.4h0M909.7 679.5h0M909.9 691.3h0M910.4 691.3h0M910.8 691.3h0M911.0 679.5h0M911.2 609.2h0M911.4 620.9h0M911.6 597.4h0M911.8 620.9h0M912.4 574.0h0M912.6 597.4h0M912.8 585.7h0M913.1 691.3h0M913.3 585.7h0M913.5 632.6h0M913.9 609.2h0M914.3 597.4h0M914.5 632.6h0M914.7 656.1h0M914.9 703.0h0M915.1 679.5h0M915.3 679.5h0M915.7 691.3h0M915.9 679.5h0M916.2 632.6h0M916.4 585.7h0M916.6 620.9h0M916.8 597.4h0M917.0 550.5h0M917.2 620.9h0M917.4 574.0h0M917.6 609.2h0M917.8 609.2h0M918.0 585.7h0M918.2 632.6h0M918.4 620.9h0M918.6 597.4h0M918.8 597.4h0M919.1 574.0h0M919.3 597.4h0M919.5 632.6h0M919.7 679.5h0M919.9 667.8h0M920.3 679.5h0M920.5 667.8h0M920.9 656.1h0M921.1 644.4h0M921.3 620.9h0M922.0 632.6h0M922.2 585.7h0M922.4 620.9h0M922.6 632.6h0M922.8 597.4h0M923.0 620.9h0M923.4 679.5h0M923.6 609.2h0M923.8 597.4h0M924.0 527.0h0M924.2 632.6h0M924.4 632.6h0M924.6 656.1h0M924.8 691.3h0M925.3 679.5h0M925.5 691.3h0M925.9 691.3h0M926.1 667.8h0M926.3 632.6h0M926.5 620.9h0M926.9 656.1h0M927.1 620.9h0M927.3 644.4h0M927.5 620.9h0M927.7 632.6h0M928.0 656.1h0M928.4 620.9h0M928.8 620.9h0M929.0 656.1h0M929.2 632.6h0M929.4 632.6h0M929.6 679.5h0M929.8 703.0h0M930.0 679.5h0M930.4 667.8h0M930.6 679.5h0M930.9 679.5h0M931.1 644.4h0M931.3 620.9h0M931.7 632.6h0M931.9 644.4h0M932.3 609.2h0M932.5 632.6h0M932.7 620.9h0M932.9 620.9h0M933.1 644.4h0M933.3 609.2h0M933.5 620.9h0M933.7 632.6h0M934.0 620.9h0M934.2 609.2h0M934.4 644.4h0M934.6 667.8h0M934.8 703.0h0M935.0 679.5h0M935.4 691.3h0M935.8 667.8h0M936.0 632.6h0M936.2 480.1h0M936.4 538.8h0M936.6 620.9h0M936.9 585.7h0M937.1 620.9h0M937.3 585.7h0M937.5 574.0h0M937.7 620.9h0M937.9 620.9h0M938.3 550.5h0M938.5 620.9h0M938.9 632.6h0M939.1 620.9h0M939.3 644.4h0M939.5 667.8h0M939.8 703.0h0M940.0 679.5h0M940.4 679.5h0M940.8 644.4h0M941.2 620.9h0M941.4 620.9h0M941.6 585.7h0M941.8 620.9h0M942.0 585.7h0M942.2 574.0h0M942.4 597.4h0M942.6 585.7h0M942.9 620.9h0M943.1 667.8h0M943.3 609.2h0M943.5 597.4h0M943.9 597.4h0M944.1 620.9h0M944.3 609.2h0M944.5 656.1h0M944.7 691.3h0M944.9 691.3h0M945.3 691.3h0M945.5 679.5h0M945.8 656.1h0M946.0 644.4h0M946.2 632.6h0M946.4 656.1h0M946.6 620.9h0M946.8 597.4h0M947.0 656.1h0M947.2 667.8h0M947.4 644.4h0M947.6 620.9h0M947.8 632.6h0M948.0 644.4h0M948.4 656.1h0M948.9 679.5h0M949.1 550.5h0M949.3 667.8h0M949.5 656.1h0M949.7 691.3h0M949.9 691.3h0M950.1 679.5h0M950.3 691.3h0M950.7 644.4h0M950.9 656.1h0M951.1 597.4h0M951.3 632.6h0M951.5 585.7h0M951.8 632.6h0M952.2 620.9h0M952.4 620.9h0M952.6 609.2h0M952.8 691.3h0M953.0 632.6h0M953.2 538.8h0M953.4 691.3h0M953.6 597.4h0M953.8 632.6h0M954.0 597.4h0M954.2 644.4h0M954.4 644.4h0M954.7 691.3h0M954.9 691.3h0M955.3 679.5h0M955.5 691.3h0M955.7 667.8h0M955.9 632.6h0M956.1 620.9h0M956.3 574.0h0M956.5 609.2h0M956.7 632.6h0M956.9 386.3h0M957.1 620.9h0M957.3 597.4h0M957.5 585.7h0M957.8 585.7h0M958.0 609.2h0M958.2 632.6h0M958.4 644.4h0M958.6 620.9h0M958.8 609.2h0M959.0 597.4h0M959.2 632.6h0M959.4 667.8h0M959.6 679.5h0M959.8 691.3h0M960.4 703.0h0M960.7 667.8h0M960.9 644.4h0M961.1 632.6h0M961.3 609.2h0M961.5 679.5h0M961.9 632.6h0M962.3 667.8h0M962.5 644.4h0M962.7 609.2h0M962.9 691.3h0M963.1 644.4h0M963.3 644.4h0M963.6 597.4h0M963.8 644.4h0M964.0 597.4h0M964.4 667.8h0M964.6 679.5h0M964.8 691.3h0M965.0 679.5h0M965.4 691.3h0M965.6 667.8h0M965.8 632.6h0M966.2 585.7h0M966.4 609.2h0M966.7 620.9h0M966.9 632.6h0M967.1 620.9h0M967.3 597.4h0M967.9 620.9h0M968.3 609.2h0M968.5 620.9h0M968.7 679.5h0M968.9 632.6h0M969.3 644.4h0M969.6 691.3h0M969.8 691.3h0M970.2 679.5h0M970.4 703.0h0M970.6 644.4h0M970.8 644.4h0M971.0 503.6h0M971.2 550.5h0M971.4 656.1h0M971.6 632.6h0M971.8 620.9h0M972.0 667.8h0M972.2 609.2h0M972.5 656.1h0M972.7 632.6h0M972.9 632.6h0M973.1 620.9h0M973.3 644.4h0M973.5 656.1h0M973.9 679.5h0M974.1 656.1h0M974.3 667.8h0M974.5 691.3h0M974.7 679.5h0M974.9 691.3h0M975.3 703.0h0M975.6 667.8h0M975.8 656.1h0M976.0 632.6h0M976.4 656.1h0M976.8 667.8h0M977.0 656.1h0M977.4 644.4h0M977.6 667.8h0M977.8 632.6h0M978.0 656.1h0M978.2 667.8h0M978.5 667.8h0M978.7 644.4h0M978.9 632.6h0M979.1 656.1h0M979.3 656.1h0M979.5 679.5h0M979.7 691.3h0M979.9 679.5h0M980.1 691.3h0M980.3 691.3h0M980.5 667.8h0M980.7 632.6h0M980.9 620.9h0M981.1 644.4h0M981.3 609.2h0M981.6 550.5h0M981.8 632.6h0M982.2 620.9h0M982.4 691.3h0M982.8 644.4h0M983.0 609.2h0M983.4 644.4h0M983.6 620.9h0M983.8 609.2h0M984.0 667.8h0M984.2 691.3h0M984.5 703.0h0M984.7 691.3h0M984.9 691.3h0M985.3 691.3h0M985.5 656.1h0M985.7 644.4h0M985.9 409.8h0M986.1 620.9h0M986.3 620.9h0M986.5 632.6h0M986.7 609.2h0M986.9 620.9h0M987.1 597.4h0M987.4 632.6h0M987.6 597.4h0M987.8 597.4h0M988.0 632.6h0M988.2 609.2h0M988.4 620.9h0M988.6 632.6h0M988.8 679.5h0M989.0 632.6h0M989.4 691.3h0M989.8 679.5h0M990.0 691.3h0M990.5 667.8h0M990.7 656.1h0M990.9 632.6h0M991.1 620.9h0M991.3 620.9h0M991.5 585.7h0M991.7 632.6h0M991.9 609.2h0M992.1 632.6h0M992.3 644.4h0M992.7 609.2h0M992.9 667.8h0M993.1 574.0h0M993.4 644.4h0M993.6 609.2h0M993.8 562.2h0M994.0 632.6h0M994.2 667.8h0M994.4 667.8h0M994.6 679.5h0M994.8 679.5h0M995.0 667.8h0M995.2 703.0h0M995.4 656.1h0M995.6 644.4h0M995.8 597.4h0M996.0 632.6h0M996.3 609.2h0M996.5 597.4h0M996.7 620.9h0M996.9 609.2h0M997.1 597.4h0M997.3 609.2h0M997.5 597.4h0M997.7 691.3h0M997.9 609.2h0M998.1 620.9h0M998.3 609.2h0M998.5 620.9h0M998.7 597.4h0M998.9 632.6h0M999.1 656.1h0M999.4 691.3h0M999.6 679.5h0M999.8 691.3h0M1000.4 656.1h0M1000.6 644.4h0M1000.8 503.6h0M1001.0 620.9h0M1001.4 632.6h0M1001.6 620.9h0M1001.8 620.9h0M1002.0 632.6h0M1002.3 609.2h0M1002.5 632.6h0M1002.9 644.4h0M1003.1 632.6h0M1003.3 691.3h0M1003.5 597.4h0M1003.7 527.0h0M1003.9 644.4h0M1004.1 667.8h0M1004.3 691.3h0M1004.9 691.3h0M1005.4 656.1h0M1005.6 644.4h0M1005.8 632.6h0M1006.0 620.9h0M1006.4 656.1h0M1006.6 632.6h0M1006.8 632.6h0M1007.0 620.9h0M1007.4 620.9h0M1007.8 620.9h0M1008.0 691.3h0M1008.3 644.4h0M1008.7 620.9h0M1008.9 656.1h0M1009.1 632.6h0M1009.3 703.0h0M1009.5 667.8h0M1009.9 679.5h0M1010.3 656.1h0M1010.5 667.8h0M1010.7 644.4h0M1010.9 632.6h0M1011.2 620.9h0M1011.4 538.8h0M1011.6 644.4h0M1011.8 644.4h0M1012.0 656.1h0M1012.2 632.6h0M1012.4 656.1h0M1012.8 632.6h0M1013.0 620.9h0M1013.2 644.4h0M1013.4 656.1h0M1013.6 620.9h0M1013.8 644.4h0M1014.0 656.1h0M1014.3 691.3h0M1014.7 679.5h0M1014.9 679.5h0M1015.3 644.4h0M1015.5 632.6h0M1015.7 620.9h0M1015.9 597.4h0M1016.3 691.3h0M1016.5 620.9h0M1016.7 609.2h0M1016.9 597.4h0M1017.2 620.9h0M1017.4 609.2h0M1017.6 632.6h0M1017.8 562.2h0M1018.0 620.9h0M1018.2 609.2h0M1018.4 632.6h0M1018.6 585.7h0M1018.8 656.1h0M1019.0 644.4h0M1019.2 679.5h0M1019.4 679.5h0M1019.6 667.8h0M1019.8 667.8h0M1020.3 667.8h0M1020.5 620.9h0M1020.7 691.3h0M1020.9 585.7h0M1021.1 597.4h0M1021.3 574.0h0M1021.5 620.9h0M1021.7 597.4h0M1021.9 632.6h0M1022.1 597.4h0M1022.3 609.2h0M1022.5 550.5h0M1022.7 620.9h0M1022.9 632.6h0M1023.2 609.2h0M1023.4 585.7h0M1023.6 538.8h0M1023.8 632.6h0M1024.0 656.1h0M1024.2 691.3h0M1024.4 691.3h0M1024.8 679.5h0M1025.0 691.3h0M1025.4 656.1h0M1025.6 632.6h0M1025.8 644.4h0M1026.1 632.6h0M1026.3 620.9h0M1026.5 632.6h0M1026.9 620.9h0M1027.3 656.1h0M1027.5 644.4h0M1027.7 620.9h0M1027.9 620.9h0M1028.3 620.9h0M1028.5 644.4h0M1028.7 667.8h0M1029.0 667.8h0M1029.2 691.3h0M1029.4 691.3h0M1029.8 691.3h0M1030.4 656.1h0M1030.6 679.5h0M1030.8 632.6h0M1031.0 644.4h0M1031.2 620.9h0M1031.4 656.1h0M1031.6 667.8h0M1031.8 644.4h0M1032.1 620.9h0M1032.3 632.6h0M1032.5 644.4h0M1032.7 609.2h0M1032.9 620.9h0M1033.1 632.6h0M1033.3 644.4h0M1033.5 656.1h0M1033.9 656.1h0M476.2 691.3h0M476.2 679.5h0M476.2 667.8h0M476.2 656.1h0M476.2 644.4h0M476.2 632.6h0M476.2 620.9h0M495.0 691.3h0M495.0 679.5h0M495.0 667.8h0M495.0 644.4h0M495.0 632.6h0M495.0 620.9h0M495.0 597.4h0M495.0 585.7h0"/></g>
</svg>
</body></html>
